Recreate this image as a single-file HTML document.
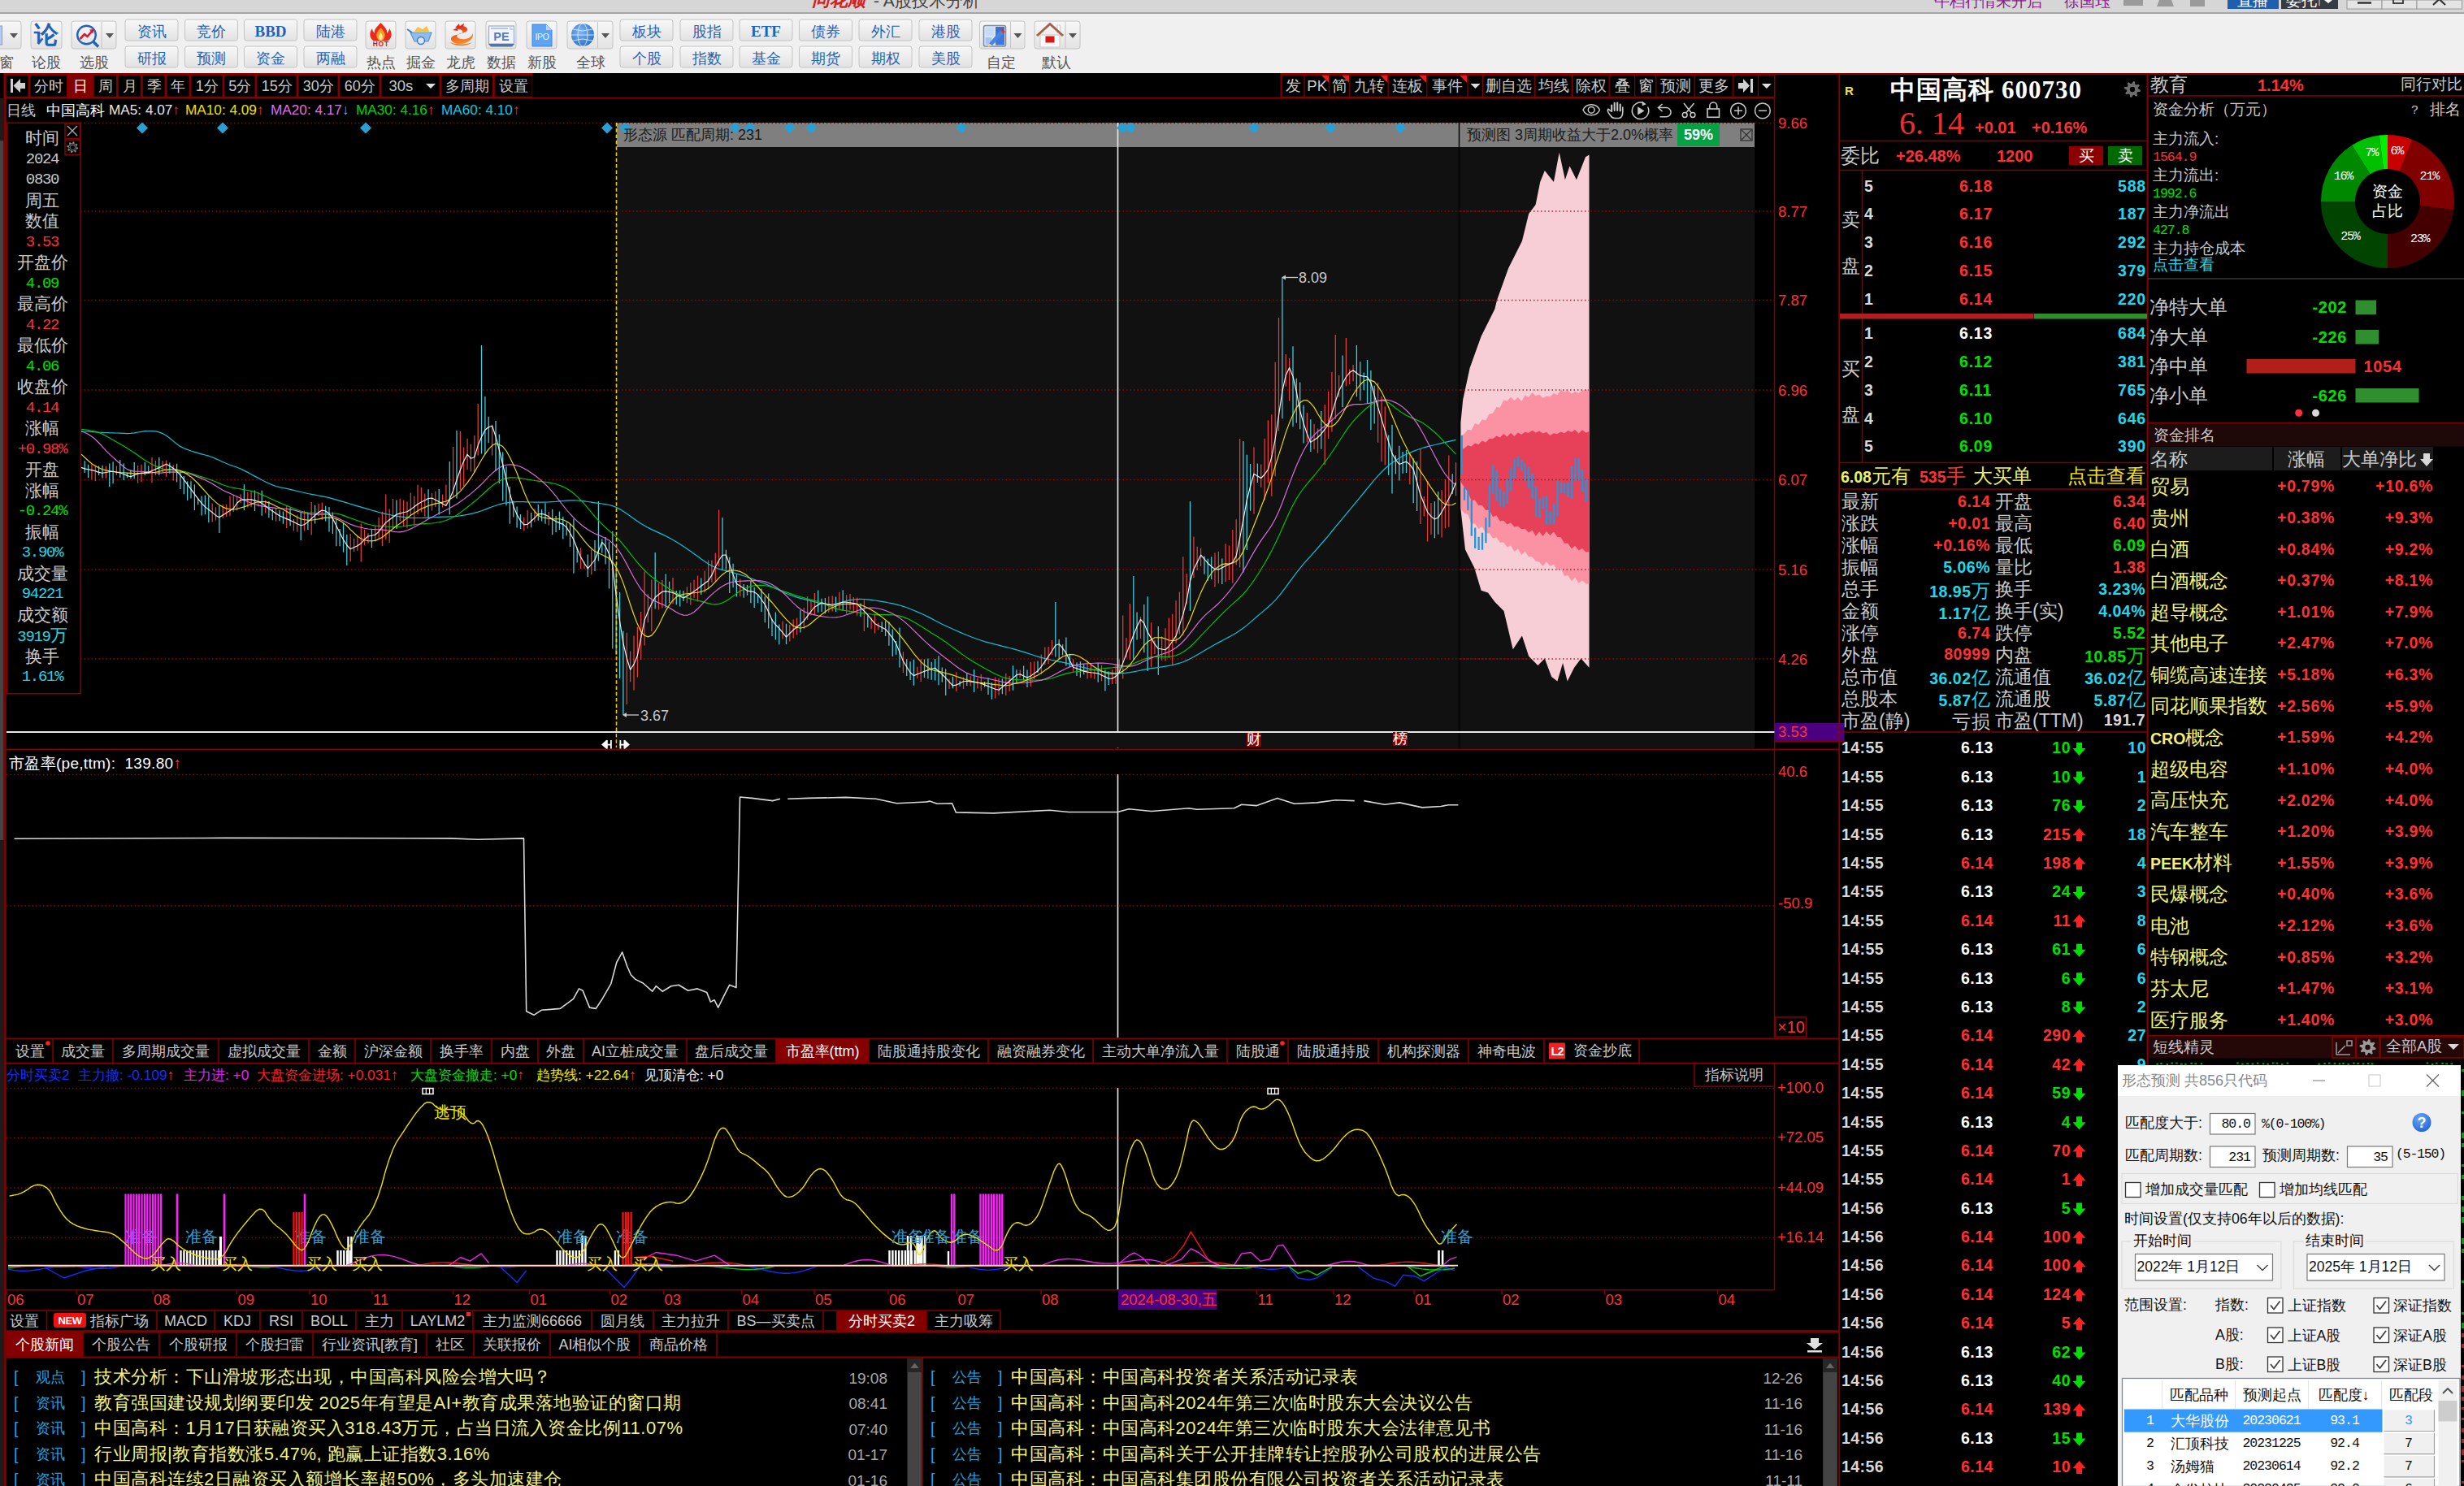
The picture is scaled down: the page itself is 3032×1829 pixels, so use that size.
<!DOCTYPE html>
<html lang="zh"><head><meta charset="utf-8"><title>A股技术分析</title>
<style>
html,body{margin:0;padding:0;background:#000;}
body{width:3032px;height:1829px;overflow:hidden;position:relative;font-family:"Liberation Sans",sans-serif;}
#g{position:absolute;left:0;top:0;}
.t{position:absolute;white-space:nowrap;line-height:1;}
.fr{font-family:"Liberation Serif",serif;}
.fm,.mm{font-family:"Liberation Mono",monospace;}
</style></head><body>
<svg id="g" width="3032" height="1829" viewBox="0 0 3032 1829" shape-rendering="auto">
<defs>
<linearGradient id="gbtn" x1="0" y1="0" x2="0" y2="1"><stop offset="0" stop-color="#f8f8f8"/><stop offset="1" stop-color="#e2e2e2"/></linearGradient>
<radialGradient id="gglobe" cx="0.4" cy="0.35" r="0.7"><stop offset="0" stop-color="#7db8f0"/><stop offset="1" stop-color="#2a6fc8"/></radialGradient>
<radialGradient id="ghelp" cx="0.4" cy="0.3" r="0.8"><stop offset="0" stop-color="#6aa8f8"/><stop offset="1" stop-color="#1f5fd0"/></radialGradient>
<linearGradient id="gdragon" x1="0" y1="0" x2="0.3" y2="1"><stop offset="0" stop-color="#e02818"/><stop offset="1" stop-color="#f58a28"/></linearGradient>
</defs>
<rect x="0.0" y="0.0" width="3032.0" height="16.0" fill="#d6d6d6" />
<rect x="0.0" y="15.0" width="3032.0" height="1.5" fill="#a8a8a8" />
<rect x="0.0" y="16.5" width="3032.0" height="74.0" fill="#f0f0f0" />
<rect x="2613.0" y="0.0" width="24.0" height="7.0" fill="#9a9a9a" />
<polygon points="2654.0,8.0 2657.0,0.0 2672.0,0.0 2675.0,8.0" fill="#9a9a9a" />
<rect x="2695.0" y="0.0" width="18.0" height="8.0" fill="#9a9a9a" />
<rect x="2741.0" y="0.0" width="63.0" height="11.0" fill="#1f5fae" />
<rect x="2807.0" y="0.0" width="70.0" height="11.0" fill="#363b44" />
<polygon points="2860.0,0.0 2870.0,0.0 2865.0,4.0" fill="#fff" />
<line x1="2854.0" y1="0.0" x2="2854.0" y2="7.0" stroke="#ccc" stroke-width="1.2" />
<rect x="2888.0" y="0.0" width="43.0" height="11.0" fill="#e4e4e4" stroke="#9a9a9a" stroke-width="1"/>
<rect x="2931.0" y="0.0" width="43.0" height="11.0" fill="#e4e4e4" stroke="#9a9a9a" stroke-width="1"/>
<rect x="2974.0" y="0.0" width="55.5" height="11.0" fill="#e4e4e4" stroke="#9a9a9a" stroke-width="1"/>
<line x1="2901.0" y1="3.5" x2="2918.0" y2="3.5" stroke="#333" stroke-width="2.5" />
<rect x="2945.0" y="-3.0" width="12.0" height="7.0" fill="none" stroke="#333" stroke-width="1.8"/>
<line x1="3001.5" y1="-1.0" x2="2994.0" y2="6.0" stroke="#333" stroke-width="2.2" />
<line x1="3001.5" y1="-1.0" x2="3009.0" y2="6.0" stroke="#333" stroke-width="2.2" />
<rect x="-6" y="26" width="32" height="34" rx="3" fill="url(#gbtn)" stroke="#c4c4c4" stroke-width="1"/>
<polygon points="12.0,41.0 22.0,41.0 17.0,47.0" fill="#555" />
<rect x="-3.0" y="32.0" width="5.5" height="23.0" fill="#b4ccf8" stroke="#9098b0" stroke-width="1"/>
<rect x="38" y="26" width="38" height="34" rx="3" fill="url(#gbtn)" stroke="#c4c4c4" stroke-width="1"/>
<rect x="88" y="26" width="55" height="34" rx="3" fill="url(#gbtn)" stroke="#c4c4c4" stroke-width="1"/>
<line x1="125.0" y1="27.0" x2="125.0" y2="59.0" stroke="#c4c4c4" stroke-width="1" />
<circle cx="106.5" cy="43" r="11.3" fill="none" stroke="#1f63b8" stroke-width="2.4"/>
<line x1="115.0" y1="51.5" x2="121.0" y2="57.5" stroke="#1f63b8" stroke-width="3.5" />
<path d="M98.5 48.0 L104.0 42.0 L107.5 45.0 L113.5 38.0" stroke="#d81838" stroke-width="2.6" fill="none" stroke-linejoin="round" />
<polygon points="110.0,36.5 115.5,36.0 114.5,41.5" fill="#d81838" />
<polygon points="130.0,41.0 140.0,41.0 135.0,47.0" fill="#555" />
<rect x="154" y="24" width="65" height="26" rx="3" fill="url(#gbtn)" stroke="#c4c4c4" stroke-width="1"/>
<rect x="154" y="57" width="65" height="26" rx="3" fill="url(#gbtn)" stroke="#c4c4c4" stroke-width="1"/>
<rect x="227.5" y="24" width="65" height="26" rx="3" fill="url(#gbtn)" stroke="#c4c4c4" stroke-width="1"/>
<rect x="227.5" y="57" width="65" height="26" rx="3" fill="url(#gbtn)" stroke="#c4c4c4" stroke-width="1"/>
<rect x="300.5" y="24" width="65" height="26" rx="3" fill="url(#gbtn)" stroke="#c4c4c4" stroke-width="1"/>
<rect x="300.5" y="57" width="65" height="26" rx="3" fill="url(#gbtn)" stroke="#c4c4c4" stroke-width="1"/>
<rect x="374" y="24" width="65" height="26" rx="3" fill="url(#gbtn)" stroke="#c4c4c4" stroke-width="1"/>
<rect x="374" y="57" width="65" height="26" rx="3" fill="url(#gbtn)" stroke="#c4c4c4" stroke-width="1"/>
<rect x="450" y="26" width="37" height="34" rx="3" fill="url(#gbtn)" stroke="#c4c4c4" stroke-width="1"/>
<rect x="499" y="26" width="37" height="34" rx="3" fill="url(#gbtn)" stroke="#c4c4c4" stroke-width="1"/>
<rect x="548" y="26" width="37" height="34" rx="3" fill="url(#gbtn)" stroke="#c4c4c4" stroke-width="1"/>
<rect x="598" y="26" width="37" height="34" rx="3" fill="url(#gbtn)" stroke="#c4c4c4" stroke-width="1"/>
<rect x="648" y="26" width="37" height="34" rx="3" fill="url(#gbtn)" stroke="#c4c4c4" stroke-width="1"/>
<path d="M468.5 28 C473 33 477 36 476 41 C478 39 479 37 479 35 C483.5 41 482 49 476 50.5 L461 50.5 C455 49 453.5 41 458 35 C458 37 459 39 461 41 C460 36 464 33 468.5 28Z" fill="#ea2a1c"/>
<path d="M468.5 34 C472 38 474.5 41 473.5 45 C473 48 471 50 468.5 50.5 C466 50 464 48 463.5 45 C462.5 41 465 38 468.5 34Z" fill="#ff9a1c"/>
<path d="M468.5 40 C470.5 43 471.5 45 470.5 47.5 C470 49.8 467 49.8 466.5 47.5 C465.5 45 466.5 43 468.5 40Z" fill="#fff0a0"/>
<path d="M505 40 L531 40 L527 51 L510 51Z" fill="#8fbcec" stroke="#5a90d0" stroke-width="1.2"/>
<path d="M509 40 L514 33 L520 36 L525 32 L529 40Z" fill="#f5c24a"/>
<circle cx="518" cy="50" r="4.5" fill="#d8e8f8" stroke="#3d7cc0" stroke-width="1.5"/>
<line x1="501.0" y1="36.0" x2="507.0" y2="40.0" stroke="#3d7cc0" stroke-width="2" />
<path d="M563 33 C570 31 576 33 575 37 C574 41 566 40 563 43 C560 46 566 49 573 48 C578 47 581 44 582 41 C583 48 576 53 568 54 C561 55 554 51 555 47 C556 43 564 43 568 41 C571 39 569 36 563 36Z" fill="url(#gdragon)"/>
<polygon points="560.0,34.0 565.0,29.0 566.0,34.0" fill="#e02818" />
<polygon points="565.0,33.0 571.0,28.5 570.0,33.5" fill="#e02818" />
<polygon points="557.0,37.0 563.0,34.0 563.0,38.0" fill="#e02818" />
<path d="M553 52 C560 57.5 574 58 581 52 C576 55 562 55.5 553 52Z" fill="#f07a20"/>
<rect x="601.5" y="32.0" width="31.0" height="22.0" fill="#f2f5fc" stroke="#9aaccc" stroke-width="1.2"/>
<polygon points="627.0,32.0 632.5,37.0 627.0,37.0" fill="#c8d4ea" />
<rect x="604.0" y="34.0" width="21.0" height="2.0" fill="#b8c6e4" />
<polygon points="601.0,54.0 633.0,54.0 630.0,57.5 604.0,57.5" fill="#54749c" />
<path d="M655 30 L672 30 L679 37 L679 57 L655 57Z" fill="#5fa4f2" stroke="#3f84e0" stroke-width="1"/>
<polygon points="672.0,30.0 679.0,37.0 672.0,37.0" fill="#bcd7f5" />
<rect x="698" y="26" width="56" height="34" rx="3" fill="url(#gbtn)" stroke="#c4c4c4" stroke-width="1"/>
<line x1="735.5" y1="27.0" x2="735.5" y2="59.0" stroke="#c4c4c4" stroke-width="1" />
<circle cx="717" cy="43" r="14" fill="url(#gglobe)"/>
<ellipse cx="717" cy="43" rx="6" ry="14" fill="none" stroke="#cfe2f7" stroke-width="1"/>
<line x1="703.0" y1="43.0" x2="731.0" y2="43.0" stroke="#cfe2f7" stroke-width="1" />
<path d="M705.0 36.0 L717.0 38.0 L729.0 36.0" stroke="#cfe2f7" stroke-width="1" fill="none" stroke-linejoin="round" />
<path d="M705.0 50.0 L717.0 48.0 L729.0 50.0" stroke="#cfe2f7" stroke-width="1" fill="none" stroke-linejoin="round" />
<polygon points="740.0,41.0 750.0,41.0 745.0,47.0" fill="#555" />
<rect x="763" y="24" width="65" height="26" rx="3" fill="url(#gbtn)" stroke="#c4c4c4" stroke-width="1"/>
<rect x="763" y="57" width="65" height="26" rx="3" fill="url(#gbtn)" stroke="#c4c4c4" stroke-width="1"/>
<rect x="837" y="24" width="65" height="26" rx="3" fill="url(#gbtn)" stroke="#c4c4c4" stroke-width="1"/>
<rect x="837" y="57" width="65" height="26" rx="3" fill="url(#gbtn)" stroke="#c4c4c4" stroke-width="1"/>
<rect x="910" y="24" width="65" height="26" rx="3" fill="url(#gbtn)" stroke="#c4c4c4" stroke-width="1"/>
<rect x="910" y="57" width="65" height="26" rx="3" fill="url(#gbtn)" stroke="#c4c4c4" stroke-width="1"/>
<rect x="983.5" y="24" width="65" height="26" rx="3" fill="url(#gbtn)" stroke="#c4c4c4" stroke-width="1"/>
<rect x="983.5" y="57" width="65" height="26" rx="3" fill="url(#gbtn)" stroke="#c4c4c4" stroke-width="1"/>
<rect x="1057" y="24" width="65" height="26" rx="3" fill="url(#gbtn)" stroke="#c4c4c4" stroke-width="1"/>
<rect x="1057" y="57" width="65" height="26" rx="3" fill="url(#gbtn)" stroke="#c4c4c4" stroke-width="1"/>
<rect x="1131" y="24" width="65" height="26" rx="3" fill="url(#gbtn)" stroke="#c4c4c4" stroke-width="1"/>
<rect x="1131" y="57" width="65" height="26" rx="3" fill="url(#gbtn)" stroke="#c4c4c4" stroke-width="1"/>
<rect x="1205.5" y="26" width="55.5" height="34" rx="3" fill="url(#gbtn)" stroke="#c4c4c4" stroke-width="1"/>
<line x1="1243.5" y1="27.0" x2="1243.5" y2="59.0" stroke="#c4c4c4" stroke-width="1" />
<rect x="1210.5" y="31.5" width="27.0" height="25.5" fill="#dfe9fb" stroke="#7a8aa0" stroke-width="1.5" rx="2"/>
<rect x="1225.0" y="33.0" width="11.0" height="22.5" fill="#3f78dc" />
<rect x="1212.5" y="33.5" width="11.0" height="11.0" fill="#c8dcf8" />
<rect x="1212.5" y="46.0" width="8.0" height="9.0" fill="#a8c4f4" />
<rect x="1226.0" y="33.5" width="9.5" height="6.0" fill="#3a70d0" />
<polygon points="1217.0,53.5 1231.0,37.0 1235.0,41.0 1221.0,56.0" fill="#4a86e0" />
<polygon points="1231.0,37.0 1233.0,35.0 1237.0,39.0 1235.0,41.0" fill="#e03030" />
<polygon points="1217.0,53.5 1221.0,56.0 1215.5,58.0" fill="#f0d090" />
<polygon points="1247.5,41.0 1257.5,41.0 1252.5,47.0" fill="#555" />
<rect x="1273" y="26" width="56" height="34" rx="3" fill="url(#gbtn)" stroke="#c4c4c4" stroke-width="1"/>
<line x1="1311.0" y1="27.0" x2="1311.0" y2="59.0" stroke="#c4c4c4" stroke-width="1" />
<rect x="1280.0" y="43.0" width="24.0" height="15.0" fill="#fafafa" stroke="#c8c8c8" stroke-width="1"/>
<rect x="1301.0" y="31.0" width="3.5" height="9.0" fill="#fafafa" stroke="#c0c0c0" stroke-width="0.8"/>
<path d="M1276 44 L1292 29.5 L1308 44" stroke="#a8604c" stroke-width="3" fill="none" stroke-linejoin="miter"/>
<rect x="1286.5" y="44.5" width="11.0" height="8.0" fill="#d81818" />
<polygon points="1315.0,41.0 1325.0,41.0 1320.0,47.0" fill="#555" />
<rect x="0.0" y="90.0" width="3032.0" height="1739.0" fill="#000" />
<rect x="0.0" y="121.0" width="4.5" height="1708.0" fill="#1c1c1c" />
<rect x="0.0" y="173.0" width="4.5" height="861.0" fill="#444" />
<rect x="4.5" y="91.0" width="3.2" height="1738.0" fill="#840000" />
<rect x="4.5" y="90.0" width="651.0" height="2.0" fill="#840000" />
<rect x="1575.5" y="90.0" width="693.0" height="2.0" fill="#840000" />
<rect x="7.0" y="92.0" width="648.0" height="28.0" fill="#840000" />
<rect x="7.8" y="92.8" width="26.8" height="26.0" fill="#000" />
<rect x="37.3" y="92.8" width="44.8" height="26.0" fill="#000" />
<rect x="83.3" y="92.8" width="30.8" height="26.0" fill="#840000" />
<rect x="115.8" y="92.8" width="27.3" height="26.0" fill="#000" />
<rect x="145.8" y="92.8" width="27.3" height="26.0" fill="#000" />
<rect x="175.8" y="92.8" width="26.8" height="26.0" fill="#000" />
<rect x="205.3" y="92.8" width="27.3" height="26.0" fill="#000" />
<rect x="235.3" y="92.8" width="38.3" height="26.0" fill="#000" />
<rect x="276.3" y="92.8" width="37.3" height="26.0" fill="#000" />
<rect x="316.3" y="92.8" width="48.3" height="26.0" fill="#000" />
<rect x="367.3" y="92.8" width="48.3" height="26.0" fill="#000" />
<rect x="418.3" y="92.8" width="48.3" height="26.0" fill="#000" />
<rect x="469.3" y="92.8" width="71.3" height="26.0" fill="#000" />
<polygon points="524.0,103.0 536.0,103.0 530.0,109.0" fill="#ddd" />
<rect x="543.3" y="92.8" width="62.8" height="26.0" fill="#000" />
<rect x="608.8" y="92.8" width="45.8" height="26.0" fill="#000" />
<rect x="13.0" y="97.0" width="3.0" height="17.0" fill="#d0d0d0" />
<polygon points="16.5,105.5 25.0,97.0 25.0,102.0 31.0,102.0 31.0,109.0 25.0,109.0 25.0,114.0" fill="#d0d0d0" />
<rect x="1575.5" y="92.0" width="609.0" height="28.0" fill="#840000" />
<rect x="1577.6" y="92.8" width="26.8" height="26.0" fill="#000" />
<rect x="1605.6" y="92.8" width="29.5" height="26.0" fill="#000" />
<rect x="1636.3" y="92.8" width="23.9" height="26.0" fill="#000" />
<rect x="1661.4" y="92.8" width="46.2" height="26.0" fill="#000" />
<rect x="1708.8" y="92.8" width="46.4" height="26.0" fill="#000" />
<rect x="1756.4" y="92.8" width="49.0" height="26.0" fill="#000" />
<rect x="1806.6" y="92.8" width="17.3" height="26.0" fill="#000" />
<polygon points="1809.5,103.0 1821.5,103.0 1815.5,109.0" fill="#ddd" />
<rect x="1825.1" y="92.8" width="63.0" height="26.0" fill="#000" />
<rect x="1889.3" y="92.8" width="44.6" height="26.0" fill="#000" />
<rect x="1935.1" y="92.8" width="44.5" height="26.0" fill="#000" />
<rect x="1980.8" y="92.8" width="30.2" height="26.0" fill="#000" />
<rect x="2012.2" y="92.8" width="25.0" height="26.0" fill="#000" />
<rect x="2038.4" y="92.8" width="46.2" height="26.0" fill="#000" />
<rect x="2085.8" y="92.8" width="46.4" height="26.0" fill="#000" />
<rect x="2133.4" y="92.8" width="29.5" height="26.0" fill="#000" />
<rect x="2154.0" y="97.0" width="3.0" height="17.0" fill="#d0d0d0" />
<polygon points="2153.0,105.5 2145.0,97.0 2145.0,102.0 2139.0,102.0 2139.0,109.0 2145.0,109.0 2145.0,114.0" fill="#d0d0d0" />
<rect x="2164.1" y="92.8" width="18.9" height="26.0" fill="#000" />
<polygon points="2167.9,103.0 2179.9,103.0 2173.9,109.0" fill="#ddd" />
<polygon points="1626.0,92.8 1635.0,92.8 1635.0,101.8" fill="#e02020" />
<polygon points="1651.0,92.8 1660.0,92.8 1660.0,101.8" fill="#e02020" />
<polygon points="1698.5,92.8 1707.5,92.8 1707.5,101.8" fill="#e02020" />
<polygon points="1746.0,92.8 1755.0,92.8 1755.0,101.8" fill="#e02020" />
<polygon points="1796.0,92.8 1805.0,92.8 1805.0,101.8" fill="#e02020" />
<rect x="7.5" y="120.0" width="2176.0" height="1.5" fill="#840000" />
<path d="M1948 135.3 C1952 126.5 1964.5 126.5 1968.5 135.3 C1964.5 144 1952 144 1948 135.3Z" fill="none" stroke="#c8c8c8" stroke-width="1.5"/><circle cx="1958.2" cy="135.3" r="3.9" fill="none" stroke="#c8c8c8" stroke-width="1.5"/>
<path d="M1983.2 137 L1983.2 129.5 M1986.7 136 L1986.7 126.8 M1990.2 136 L1990.2 126.5 M1993.7 136.5 L1993.7 128.5" stroke="#c8c8c8" stroke-width="2.1" stroke-linecap="round" fill="none"/>
<path d="M1982.2 137 L1979 134.2 C1977.5 135.5 1979 139 1981.5 142 C1983 144.2 1985 145.5 1987 145.5 L1992 145.5 C1995 145 1996.8 141.5 1996.8 137.5 L1996.8 131.5" stroke="#c8c8c8" stroke-width="1.6" fill="none" stroke-linejoin="round"/>
<path d="M2023 127.2 A10.2 10.2 0 1 0 2027.5 131.5" stroke="#c8c8c8" stroke-width="1.5" fill="none"/>
<polygon points="2015.2,131.2 2015.2,141.5 2023.5,136.4" fill="#c8c8c8" />
<polygon points="2020.5,124.5 2025.8,128.2 2020.8,130.2" fill="#c8c8c8" />
<path d="M2041 132.6 L2050.5 132.6 A5.5 5.5 0 0 1 2050.5 143.7 L2042.5 143.7" stroke="#c8c8c8" stroke-width="1.5" fill="none"/>
<path d="M2045.5 128 L2040.5 132.6 L2045.5 137.2" stroke="#c8c8c8" stroke-width="1.5" fill="none"/>
<path d="M2072 127 L2081.5 139.3 M2084.5 127 L2074.5 139.3" stroke="#c8c8c8" stroke-width="1.5" fill="none"/><circle cx="2073.2" cy="141.5" r="2.9" fill="none" stroke="#c8c8c8" stroke-width="1.5"/><circle cx="2083" cy="141.5" r="2.9" fill="none" stroke="#c8c8c8" stroke-width="1.5"/>
<rect x="2101.0" y="134.0" width="14.5" height="10.3" fill="none" stroke="#c8c8c8" stroke-width="1.6"/>
<path d="M2103.8 134 L2103.8 130.5 A4.5 4.5 0 0 1 2112.8 130.5 L2112.8 134" stroke="#c8c8c8" stroke-width="1.6" fill="none"/>
<circle cx="2139" cy="136.3" r="9.4" fill="none" stroke="#c8c8c8" stroke-width="1.5"/>
<line x1="2134.0" y1="136.3" x2="2144.0" y2="136.3" stroke="#c8c8c8" stroke-width="1.5" />
<line x1="2139.0" y1="131.3" x2="2139.0" y2="141.3" stroke="#c8c8c8" stroke-width="1.5" />
<circle cx="2168.9" cy="136.3" r="9.4" fill="none" stroke="#c8c8c8" stroke-width="1.5"/>
<line x1="2163.9" y1="136.3" x2="2173.9" y2="136.3" stroke="#c8c8c8" stroke-width="1.5" />
<rect x="759.0" y="151.0" width="1400.0" height="770.0" fill="#111111" />
<rect x="759.0" y="151.0" width="1036.0" height="30.0" fill="#7f7f7f" />
<rect x="1795.0" y="151.0" width="364.0" height="30.0" fill="#7f7f7f" />
<line x1="1795.5" y1="151.0" x2="1795.5" y2="921.0" stroke="#000" stroke-width="1.5" />
<rect x="2064.0" y="152.0" width="52.0" height="28.0" fill="#08a045" />
<rect x="2142.0" y="159.0" width="14.0" height="14.0" fill="none" stroke="#333" stroke-width="1.3"/>
<line x1="2143.0" y1="160.0" x2="2155.0" y2="172.0" stroke="#333" stroke-width="1.2" />
<line x1="2155.0" y1="160.0" x2="2143.0" y2="172.0" stroke="#333" stroke-width="1.2" />
<line x1="99.0" y1="151.5" x2="2183.5" y2="151.5" stroke="#9a0000" stroke-width="1.3" stroke-dasharray="1.5 3"/>
<line x1="99.0" y1="260.0" x2="2183.5" y2="260.0" stroke="#9a0000" stroke-width="1.3" stroke-dasharray="1.5 3"/>
<line x1="99.0" y1="369.5" x2="2183.5" y2="369.5" stroke="#9a0000" stroke-width="1.3" stroke-dasharray="1.5 3"/>
<line x1="99.0" y1="480.0" x2="2183.5" y2="480.0" stroke="#9a0000" stroke-width="1.3" stroke-dasharray="1.5 3"/>
<line x1="99.0" y1="590.5" x2="2183.5" y2="590.5" stroke="#9a0000" stroke-width="1.3" stroke-dasharray="1.5 3"/>
<line x1="99.0" y1="701.0" x2="2183.5" y2="701.0" stroke="#9a0000" stroke-width="1.3" stroke-dasharray="1.5 3"/>
<line x1="99.0" y1="811.0" x2="2183.5" y2="811.0" stroke="#9a0000" stroke-width="1.3" stroke-dasharray="1.5 3"/>
<line x1="2183.5" y1="121.0" x2="2183.5" y2="1278.0" stroke="#840000" stroke-width="1.5" />
<line x1="2183.5" y1="1308.0" x2="2183.5" y2="1588.0" stroke="#840000" stroke-width="1.5" />
<path d="M104.2 567.2V582.1 M108.6 571.7V588.2 M121.6 573.4V585.0 M126.0 573.1V588.5 M134.7 570.6V599.3 M139.1 568.2V595.1 M147.8 565.9V587.7 M152.2 570.4V591.0 M156.5 582.0V588.3 M160.9 578.3V589.3 M165.2 569.0V589.3 M178.3 568.9V585.1 M182.7 573.3V582.6 M195.8 562.9V584.9 M208.8 569.4V582.8 M217.6 570.8V593.5 M221.9 578.8V602.1 M226.3 585.9V608.3 M230.6 592.3V616.1 M235.0 592.2V613.4 M239.4 596.3V628.0 M243.7 613.1V621.3 M248.1 610.4V634.6 M252.4 609.6V633.3 M256.8 610.4V642.9 M269.9 622.5V656.0 M300.4 596.3V628.0 M313.5 603.5V628.9 M322.2 603.8V634.8 M330.9 617.0V637.1 M335.3 626.6V640.3 M344.0 627.8V641.2 M348.4 629.4V644.8 M357.1 625.3V647.2 M370.2 630.3V665.1 M378.9 631.0V651.9 M387.6 622.0V644.4 M400.7 622.8V641.5 M405.0 624.1V654.4 M409.4 630.5V657.0 M413.8 638.7V672.2 M418.1 651.0V672.2 M422.5 643.4V679.7 M426.8 658.0V696.0 M457.4 651.3V673.9 M487.9 615.6V651.0 M527.1 602.3V637.4 M540.2 602.0V633.6 M553.3 568.1V633.6 M562.0 530.0V613.6 M592.5 425.0V558.4 M596.9 488.0V559.2 M601.2 512.7V545.2 M610.0 518.0V580.3 M614.3 534.5V595.0 M618.7 556.4V616.4 M623.0 574.2V622.2 M627.4 598.8V644.7 M631.8 616.5V636.6 M636.1 623.6V649.6 M640.5 633.1V651.0 M653.6 631.1V649.3 M662.3 621.1V640.8 M666.6 627.0V641.5 M671.0 619.3V644.7 M679.7 626.7V658.3 M684.1 634.9V655.0 M688.4 629.4V651.9 M692.8 635.7V663.5 M697.2 643.3V659.3 M701.5 644.3V673.1 M705.9 638.4V705.8 M710.2 673.7V692.4 M723.3 682.6V710.1 M732.0 664.9V702.9 M736.4 617.0V690.6 M740.8 663.2V680.8 M745.1 661.1V694.5 M749.5 666.7V724.5 M753.8 653.8V798.4 M758.2 693.7V805.7 M762.6 729.0V835.0 M766.9 776.7V880.0 M806.2 680.0V749.2 M819.2 706.5V748.3 M823.6 715.8V741.9 M832.3 727.0V744.2 M836.7 726.6V746.4 M841.0 726.9V739.9 M862.8 711.5V732.0 M889.0 637.0V702.3 M893.4 676.8V701.4 M897.7 685.8V729.9 M902.1 693.7V723.0 M906.4 706.4V734.4 M915.2 719.0V735.7 M919.5 720.1V732.8 M923.9 714.8V742.2 M928.2 722.7V748.1 M932.6 731.3V742.2 M937.0 724.5V752.9 M941.3 734.3V766.2 M945.7 730.5V773.6 M950.0 761.8V783.1 M954.4 753.6V787.5 M958.8 768.4V793.2 M967.5 767.7V793.0 M984.9 751.1V778.6 M1006.7 726.5V753.7 M1011.1 736.8V752.9 M1015.4 736.0V755.2 M1028.5 734.6V753.1 M1037.2 726.3V751.4 M1059.0 742.4V759.3 M1067.8 757.4V772.5 M1085.2 765.3V777.9 M1089.6 764.3V782.9 M1093.9 765.2V794.7 M1098.3 774.5V808.1 M1102.6 789.1V805.8 M1107.0 772.5V821.5 M1115.7 811.2V832.0 M1120.1 814.2V837.0 M1124.4 811.8V843.7 M1137.5 811.6V834.1 M1141.9 810.6V835.6 M1146.2 814.7V836.7 M1150.6 810.9V837.5 M1155.0 807.3V843.2 M1159.3 821.5V839.8 M1163.7 823.4V856.0 M1172.4 832.8V847.3 M1181.1 837.8V844.7 M1189.8 828.5V843.9 M1198.6 824.1V852.1 M1211.6 838.9V845.7 M1216.0 834.3V855.1 M1220.4 840.3V860.8 M1233.4 835.3V854.2 M1246.5 819.3V849.8 M1250.9 824.3V840.3 M1259.6 819.4V837.6 M1264.0 824.5V845.9 M1277.0 813.5V828.0 M1298.8 741.0V808.4 M1303.2 786.9V811.3 M1307.6 793.2V806.5 M1311.9 784.6V819.4 M1316.3 804.7V820.6 M1325.0 815.3V832.0 M1329.4 814.2V833.9 M1333.7 818.1V830.3 M1351.2 815.7V839.7 M1359.9 824.5V850.4 M1364.2 826.4V842.9 M1394.8 709.0V812.2 M1399.1 753.6V787.4 M1407.8 743.9V803.2 M1412.2 734.2V826.1 M1425.3 770.9V830.7 M1464.5 617.0V752.1 M1482.0 684.5V706.7 M1486.3 687.7V714.8 M1490.7 685.2V713.1 M1503.8 687.6V719.0 M1529.9 543.0V704.5 M1534.3 559.7V677.0 M1538.6 571.1V628.8 M1547.4 570.4V594.1 M1577.9 341.5V515.2 M1591.0 426.3V524.9 M1595.3 465.8V520.6 M1599.7 470.5V528.3 M1604.0 498.7V545.6 M1612.8 516.3V555.9 M1625.8 506.1V552.8 M1652.0 437.6V501.1 M1669.4 425.0V488.3 M1673.8 445.3V493.1 M1678.2 458.4V480.3 M1682.5 443.1V496.9 M1686.9 456.1V528.9 M1691.2 474.8V521.6 M1708.7 535.6V584.8 M1713.0 522.8V607.5 M1717.4 560.3V583.4 M1721.8 548.7V591.4 M1726.1 556.0V582.8 M1730.5 554.1V582.1 M1739.2 564.2V619.3 M1743.6 568.1V628.9 M1765.4 617.2V662.3 M1769.7 604.9V657.8 M1787.2 583.3V608.1" stroke="#3fd2e2" stroke-width="1.25" fill="none"/>
<path d="M112.9 571.5V590.3 M117.3 572.8V592.2 M130.4 573.8V588.6 M143.4 573.4V584.8 M169.6 572.8V594.7 M174.0 571.7V593.3 M187.0 563.0V594.3 M191.4 566.9V584.9 M200.1 567.3V582.1 M204.5 566.6V586.7 M213.2 572.3V591.7 M261.2 619.6V642.5 M265.5 624.3V640.4 M274.2 620.9V637.8 M278.6 621.0V635.9 M283.0 610.4V635.0 M287.3 609.1V630.0 M291.7 610.6V628.3 M296.0 608.3V619.5 M304.8 605.6V624.6 M309.1 604.6V624.2 M317.8 605.8V623.5 M326.6 615.7V631.6 M339.6 624.7V641.7 M352.7 621.9V650.1 M361.4 638.9V653.5 M365.8 633.8V654.4 M374.5 628.6V653.4 M383.2 618.1V658.6 M392.0 620.1V635.2 M396.3 618.4V639.8 M431.2 657.1V691.0 M435.6 662.8V679.0 M439.9 660.3V677.8 M444.3 644.5V691.4 M448.6 652.1V671.2 M453.0 656.2V668.8 M461.7 646.8V666.8 M466.1 636.8V663.3 M470.4 629.7V672.1 M474.8 608.4V664.3 M479.2 626.6V667.9 M483.5 614.0V650.5 M492.2 613.8V641.2 M496.6 615.5V648.2 M501.0 617.6V649.7 M505.3 606.5V635.3 M509.7 610.5V646.7 M514.0 596.8V632.9 M518.4 600.0V630.4 M522.8 607.4V635.7 M531.5 606.9V628.7 M535.8 604.7V624.2 M544.6 608.6V624.5 M548.9 596.5V621.2 M557.6 550.0V611.3 M566.4 530.9V602.8 M570.7 550.6V598.5 M575.1 539.8V578.2 M579.4 546.6V580.4 M583.8 536.1V581.5 M588.2 497.0V560.4 M605.6 522.8V560.4 M644.8 636.6V653.5 M649.2 627.8V650.5 M657.9 626.3V642.6 M675.4 629.8V646.4 M714.6 674.4V700.0 M719.0 691.5V700.1 M727.7 676.3V707.1 M771.3 778.7V867.0 M775.6 801.4V839.3 M780.0 782.4V849.8 M784.4 771.8V833.5 M788.7 752.9V812.0 M793.1 703.4V794.6 M797.4 731.2V766.3 M801.8 713.6V777.2 M810.5 717.7V750.4 M814.9 713.9V748.4 M828.0 711.0V743.3 M845.4 722.2V742.3 M849.8 717.2V744.5 M854.1 713.7V736.0 M858.5 708.4V740.6 M867.2 702.5V729.3 M871.6 689.4V725.5 M875.9 689.6V716.8 M880.3 680.5V715.4 M884.6 627.5V696.9 M910.8 712.6V734.2 M963.1 764.4V786.5 M971.8 769.0V789.4 M976.2 762.5V785.4 M980.6 760.4V781.4 M989.3 748.0V773.7 M993.6 734.1V762.7 M998.0 739.9V757.6 M1002.4 730.1V757.0 M1019.8 734.2V753.8 M1024.2 733.6V752.5 M1032.9 728.8V750.2 M1041.6 732.2V755.6 M1046.0 731.1V750.5 M1050.3 734.9V754.5 M1054.7 735.6V757.4 M1063.4 738.2V777.1 M1072.1 759.9V774.2 M1076.5 755.6V779.5 M1080.8 766.4V775.3 M1111.4 802.3V828.1 M1128.8 820.8V835.0 M1133.2 811.1V839.0 M1168.0 835.6V847.9 M1176.8 827.3V850.9 M1185.5 833.4V848.1 M1194.2 832.1V844.5 M1202.9 834.3V847.4 M1207.3 829.9V850.3 M1224.7 833.5V859.6 M1229.1 834.7V855.8 M1237.8 828.8V855.9 M1242.2 832.0V851.1 M1255.2 824.4V833.8 M1268.3 814.8V845.1 M1272.7 814.3V835.9 M1281.4 805.5V829.7 M1285.8 796.4V818.2 M1290.1 796.0V816.9 M1294.5 788.0V806.3 M1320.6 811.2V826.8 M1338.1 813.2V835.5 M1342.4 817.4V834.4 M1346.8 823.3V835.7 M1355.5 818.7V838.3 M1368.6 824.2V841.9 M1373.0 819.6V841.7 M1377.3 811.5V829.4 M1381.7 757.6V835.4 M1386.0 785.0V809.6 M1390.4 743.1V812.0 M1403.5 759.1V785.9 M1416.6 766.2V821.4 M1420.9 787.8V804.9 M1429.6 783.3V812.9 M1434.0 773.2V813.8 M1438.4 760.6V809.8 M1442.7 755.8V819.5 M1447.1 739.2V791.8 M1451.4 728.5V780.4 M1455.8 685.3V782.4 M1460.2 706.1V743.7 M1468.9 660.5V711.2 M1473.2 672.8V701.9 M1477.6 674.8V696.9 M1495.0 680.5V722.3 M1499.4 678.8V718.2 M1508.1 669.3V716.2 M1512.5 671.6V713.9 M1516.8 652.1V717.8 M1521.2 639.3V695.2 M1525.6 540.0V698.4 M1543.0 550.5V632.7 M1551.7 571.4V600.0 M1556.1 539.8V616.0 M1560.4 517.2V594.4 M1564.8 510.3V610.7 M1569.2 445.8V586.3 M1573.5 391.0V530.6 M1582.2 435.9V475.6 M1586.6 441.1V493.4 M1608.4 507.9V544.3 M1617.1 521.7V552.9 M1621.5 527.6V557.8 M1630.2 498.0V572.2 M1634.6 481.7V540.0 M1638.9 457.8V531.5 M1643.3 412.0V515.8 M1647.6 462.0V488.8 M1656.4 416.0V475.3 M1660.7 454.3V473.1 M1665.1 448.9V469.2 M1695.6 471.1V544.7 M1700.0 487.8V568.3 M1704.3 500.4V572.6 M1734.8 557.2V596.3 M1747.9 552.8V644.9 M1752.3 610.9V635.6 M1756.6 592.0V666.6 M1761.0 619.0V658.0 M1774.1 602.9V661.4 M1778.4 590.1V650.6 M1782.8 560.4V648.7 M1791.5 569.3V610.3" stroke="#e83a36" stroke-width="1.25" fill="none"/>
<path d="M99.8 530.8 L104.2 531.0 L108.6 531.2 L112.9 531.5 L117.3 531.8 L121.6 532.1 L126.0 532.3 L130.4 532.5 L134.7 532.7 L139.1 532.8 L143.4 533.0 L147.8 533.2 L152.2 533.4 L156.5 533.6 L160.9 533.4 L165.2 532.9 L169.6 532.0 L174.0 531.3 L178.3 530.7 L182.7 530.5 L187.0 530.5 L191.4 530.9 L195.8 531.9 L200.1 533.6 L204.5 536.1 L208.8 539.2 L213.2 542.9 L217.6 546.5 L221.9 549.4 L226.3 551.7 L230.6 553.4 L235.0 555.0 L239.4 556.4 L243.7 557.6 L248.1 558.8 L252.4 560.0 L256.8 561.2 L261.2 562.8 L265.5 564.6 L269.9 566.5 L274.2 568.5 L278.6 570.5 L283.0 572.2 L287.3 573.8 L291.7 575.3 L296.0 577.0 L300.4 579.1 L304.8 581.4 L309.1 583.7 L313.5 586.1 L317.8 588.4 L322.2 590.7 L326.6 593.0 L330.9 595.0 L335.3 596.9 L339.6 598.5 L344.0 599.7 L348.4 600.5 L352.7 601.3 L357.1 602.3 L361.4 603.4 L365.8 604.5 L370.2 605.5 L374.5 606.5 L378.9 607.5 L383.2 608.3 L387.6 609.1 L392.0 610.0 L396.3 610.8 L400.7 611.7 L405.0 612.7 L409.4 613.9 L413.8 615.1 L418.1 616.4 L422.5 617.6 L426.8 618.9 L431.2 620.3 L435.6 621.6 L439.9 622.9 L444.3 624.2 L448.6 625.4 L453.0 626.7 L457.4 628.0 L461.7 629.2 L466.1 630.5 L470.4 631.6 L474.8 632.6 L479.2 633.5 L483.5 634.3 L487.9 635.1 L492.2 635.8 L496.6 636.4 L501.0 636.9 L505.3 637.3 L509.7 637.5 L514.0 637.5 L518.4 637.5 L522.8 637.3 L527.1 637.1 L531.5 636.8 L535.8 636.5 L540.2 636.3 L544.6 636.2 L548.9 636.1 L553.3 635.9 L557.6 635.7 L562.0 635.3 L566.4 634.8 L570.7 634.1 L575.1 633.3 L579.4 632.4 L583.8 631.3 L588.2 630.1 L592.5 628.7 L596.9 627.1 L601.2 625.4 L605.6 623.7 L610.0 622.2 L614.3 620.8 L618.7 619.7 L623.0 618.8 L627.4 618.3 L631.8 617.9 L636.1 617.7 L640.5 617.7 L644.8 617.7 L649.2 617.9 L653.6 618.0 L657.9 618.2 L662.3 618.2 L666.6 618.2 L671.0 618.1 L675.4 617.9 L679.7 617.6 L684.1 617.3 L688.4 616.9 L692.8 616.5 L697.2 616.1 L701.5 615.8 L705.9 615.8 L710.2 616.0 L714.6 616.4 L719.0 616.9 L723.3 617.5 L727.7 618.2 L732.0 618.8 L736.4 619.4 L740.8 620.0 L745.1 620.6 L749.5 621.5 L753.8 622.7 L758.2 624.4 L762.6 626.6 L766.9 629.2 L771.3 632.2 L775.6 635.3 L780.0 638.5 L784.4 641.6 L788.7 644.5 L793.1 647.0 L797.4 649.4 L801.8 651.6 L806.2 653.6 L810.5 655.6 L814.9 657.6 L819.2 659.7 L823.6 661.9 L828.0 664.4 L832.3 667.0 L836.7 669.7 L841.0 672.6 L845.4 675.5 L849.8 678.6 L854.1 681.7 L858.5 684.8 L862.8 688.0 L867.2 691.0 L871.6 693.9 L875.9 696.4 L880.3 698.5 L884.6 700.2 L889.0 701.5 L893.4 702.6 L897.7 703.7 L902.1 704.8 L906.4 706.0 L910.8 707.3 L915.2 708.7 L919.5 710.2 L923.9 711.8 L928.2 713.4 L932.6 715.1 L937.0 716.8 L941.3 718.5 L945.7 720.4 L950.0 722.4 L954.4 724.4 L958.8 726.5 L963.1 728.6 L967.5 730.5 L971.8 732.2 L976.2 733.7 L980.6 735.1 L984.9 736.3 L989.3 737.4 L993.6 738.6 L998.0 739.7 L1002.4 740.9 L1006.7 742.0 L1011.1 743.0 L1015.4 743.6 L1019.8 743.8 L1024.2 743.6 L1028.5 743.0 L1032.9 742.0 L1037.2 740.9 L1041.6 739.7 L1046.0 738.7 L1050.3 738.0 L1054.7 737.6 L1059.0 737.4 L1063.4 737.5 L1067.8 737.9 L1072.1 738.4 L1076.5 739.0 L1080.8 739.6 L1085.2 740.4 L1089.6 741.2 L1093.9 742.0 L1098.3 742.9 L1102.6 743.8 L1107.0 745.0 L1111.4 746.3 L1115.7 747.8 L1120.1 749.5 L1124.4 751.2 L1128.8 753.1 L1133.2 755.0 L1137.5 757.0 L1141.9 759.1 L1146.2 761.4 L1150.6 763.7 L1155.0 766.0 L1159.3 768.2 L1163.7 770.3 L1168.0 772.3 L1172.4 774.3 L1176.8 776.2 L1181.1 778.1 L1185.5 780.0 L1189.8 781.8 L1194.2 783.5 L1198.6 785.2 L1202.9 786.8 L1207.3 788.2 L1211.6 789.6 L1216.0 790.8 L1220.4 791.9 L1224.7 793.1 L1229.1 794.2 L1233.4 795.3 L1237.8 796.4 L1242.2 797.5 L1246.5 798.6 L1250.9 799.8 L1255.2 801.1 L1259.6 802.4 L1264.0 803.9 L1268.3 805.3 L1272.7 806.7 L1277.0 808.1 L1281.4 809.3 L1285.8 810.5 L1290.1 811.5 L1294.5 812.5 L1298.8 813.4 L1303.2 814.3 L1307.6 815.2 L1311.9 816.2 L1316.3 817.2 L1320.6 818.4 L1325.0 819.5 L1329.4 820.6 L1333.7 821.6 L1338.1 822.6 L1342.4 823.6 L1346.8 824.5 L1351.2 825.4 L1355.5 826.3 L1359.9 827.0 L1364.2 827.7 L1368.6 828.2 L1373.0 828.5 L1377.3 828.6 L1381.7 828.5 L1386.0 828.2 L1390.4 827.6 L1394.8 826.8 L1399.1 826.0 L1403.5 825.1 L1407.8 824.2 L1412.2 823.4 L1416.6 822.7 L1420.9 822.1 L1425.3 821.5 L1429.6 820.9 L1434.0 820.2 L1438.4 819.4 L1442.7 818.5 L1447.1 817.4 L1451.4 816.2 L1455.8 814.7 L1460.2 812.9 L1464.5 810.8 L1468.9 808.5 L1473.2 806.0 L1477.6 803.4 L1482.0 800.8 L1486.3 798.3 L1490.7 795.8 L1495.0 793.3 L1499.4 790.9 L1503.8 788.6 L1508.1 786.2 L1512.5 783.9 L1516.8 781.5 L1521.2 778.9 L1525.6 776.1 L1529.9 773.0 L1534.3 769.6 L1538.6 765.9 L1543.0 762.1 L1547.4 758.3 L1551.7 754.6 L1556.1 750.9 L1560.4 747.2 L1564.8 743.2 L1569.2 738.8 L1573.5 733.9 L1577.9 728.4 L1582.2 722.6 L1586.6 716.6 L1591.0 710.7 L1595.3 704.9 L1599.7 699.4 L1604.0 694.2 L1608.4 689.2 L1612.8 684.3 L1617.1 679.4 L1621.5 674.5 L1625.8 669.5 L1630.2 664.5 L1634.6 659.3 L1638.9 654.0 L1643.3 648.7 L1647.6 643.4 L1652.0 638.1 L1656.4 632.8 L1660.7 627.6 L1665.1 622.4 L1669.4 617.2 L1673.8 611.9 L1678.2 606.5 L1682.5 601.1 L1686.9 595.8 L1691.2 590.6 L1695.6 585.7 L1700.0 581.0 L1704.3 576.8 L1708.7 572.9 L1713.0 569.5 L1717.4 566.5 L1721.8 563.7 L1726.1 561.3 L1730.5 559.1 L1734.8 557.2 L1739.2 555.4 L1743.6 553.7 L1747.9 552.2 L1752.3 550.8 L1756.6 549.6 L1761.0 548.5 L1765.4 547.5 L1769.7 546.5 L1774.1 545.4 L1778.4 544.4 L1782.8 543.3 L1787.2 542.3 L1791.5 541.4" stroke="#10c0d8" stroke-width="1.2" fill="none" stroke-linejoin="round" />
<path d="M99.8 528.2 L104.2 528.7 L108.6 529.4 L112.9 530.2 L117.3 531.1 L121.6 532.4 L126.0 534.3 L130.4 536.6 L134.7 539.0 L139.1 541.4 L143.4 543.9 L147.8 546.4 L152.2 549.0 L156.5 551.7 L160.9 554.4 L165.2 557.2 L169.6 560.2 L174.0 563.5 L178.3 566.5 L182.7 569.1 L187.0 571.4 L191.4 573.6 L195.8 575.4 L200.1 577.0 L204.5 578.2 L208.8 579.0 L213.2 579.4 L217.6 579.6 L221.9 579.9 L226.3 580.4 L230.6 581.3 L235.0 582.7 L239.4 584.1 L243.7 585.5 L248.1 586.9 L252.4 588.3 L256.8 589.7 L261.2 591.3 L265.5 593.0 L269.9 594.9 L274.2 596.7 L278.6 598.3 L283.0 599.5 L287.3 600.4 L291.7 601.2 L296.0 601.9 L300.4 602.7 L304.8 603.5 L309.1 604.4 L313.5 605.5 L317.8 607.0 L322.2 608.9 L326.6 610.8 L330.9 612.8 L335.3 614.7 L339.6 616.7 L344.0 618.6 L348.4 620.5 L352.7 622.4 L357.1 624.1 L361.4 625.8 L365.8 627.5 L370.2 629.0 L374.5 630.2 L378.9 630.8 L383.2 631.0 L387.6 631.3 L392.0 631.5 L396.3 631.6 L400.7 631.7 L405.0 631.7 L409.4 631.7 L413.8 632.0 L418.1 633.0 L422.5 634.4 L426.8 636.1 L431.2 637.7 L435.6 639.3 L439.9 640.8 L444.3 642.3 L448.6 643.9 L453.0 645.3 L457.4 646.3 L461.7 647.0 L466.1 647.4 L470.4 647.8 L474.8 648.0 L479.2 648.2 L483.5 648.3 L487.9 648.4 L492.2 648.2 L496.6 647.7 L501.0 647.0 L505.3 646.4 L509.7 645.8 L514.0 645.3 L518.4 644.9 L522.8 644.6 L527.1 644.3 L531.5 644.0 L535.8 643.5 L540.2 642.8 L544.6 641.8 L548.9 640.5 L553.3 638.7 L557.6 636.5 L562.0 633.9 L566.4 630.9 L570.7 627.6 L575.1 624.3 L579.4 620.9 L583.8 617.3 L588.2 613.6 L592.5 609.7 L596.9 605.7 L601.2 601.8 L605.6 598.0 L610.0 594.7 L614.3 592.0 L618.7 589.9 L623.0 588.6 L627.4 587.9 L631.8 587.8 L636.1 588.0 L640.5 588.5 L644.8 589.2 L649.2 590.1 L653.6 590.8 L657.9 591.5 L662.3 592.1 L666.6 592.7 L671.0 593.3 L675.4 593.9 L679.7 594.7 L684.1 595.8 L688.4 597.3 L692.8 599.1 L697.2 601.3 L701.5 604.0 L705.9 607.3 L710.2 611.1 L714.6 615.5 L719.0 620.2 L723.3 625.3 L727.7 630.6 L732.0 635.8 L736.4 640.7 L740.8 645.2 L745.1 649.3 L749.5 653.1 L753.8 656.9 L758.2 661.0 L762.6 665.4 L766.9 670.4 L771.3 675.8 L775.6 681.4 L780.0 687.0 L784.4 692.4 L788.7 697.4 L793.1 702.0 L797.4 706.1 L801.8 709.8 L806.2 713.3 L810.5 716.4 L814.9 719.3 L819.2 722.0 L823.6 724.7 L828.0 727.4 L832.3 729.9 L836.7 732.1 L841.0 734.1 L845.4 735.6 L849.8 736.9 L854.1 738.0 L858.5 739.0 L862.8 740.1 L867.2 741.4 L871.6 742.6 L875.9 743.6 L880.3 743.9 L884.6 743.4 L889.0 742.0 L893.4 739.7 L897.7 736.9 L902.1 733.8 L906.4 730.6 L910.8 727.6 L915.2 725.1 L919.5 723.1 L923.9 721.6 L928.2 720.7 L932.6 720.3 L937.0 720.3 L941.3 720.7 L945.7 721.5 L950.0 722.7 L954.4 724.1 L958.8 725.7 L963.1 727.3 L967.5 728.9 L971.8 730.4 L976.2 731.9 L980.6 733.3 L984.9 734.6 L989.3 735.8 L993.6 737.0 L998.0 738.1 L1002.4 739.2 L1006.7 740.5 L1011.1 742.0 L1015.4 743.8 L1019.8 745.7 L1024.2 747.5 L1028.5 749.1 L1032.9 750.3 L1037.2 751.1 L1041.6 751.8 L1046.0 752.4 L1050.3 753.0 L1054.7 753.6 L1059.0 754.2 L1063.4 754.8 L1067.8 755.5 L1072.1 756.0 L1076.5 756.4 L1080.8 756.6 L1085.2 756.6 L1089.6 756.6 L1093.9 756.6 L1098.3 756.8 L1102.6 757.3 L1107.0 758.1 L1111.4 759.4 L1115.7 761.1 L1120.1 763.1 L1124.4 765.5 L1128.8 768.1 L1133.2 770.8 L1137.5 773.5 L1141.9 776.2 L1146.2 779.0 L1150.6 781.7 L1155.0 784.4 L1159.3 787.2 L1163.7 790.3 L1168.0 793.4 L1172.4 796.7 L1176.8 800.0 L1181.1 803.2 L1185.5 806.4 L1189.8 809.4 L1194.2 812.3 L1198.6 814.9 L1202.9 817.5 L1207.3 820.1 L1211.6 822.6 L1216.0 824.9 L1220.4 827.3 L1224.7 829.5 L1229.1 831.5 L1233.4 833.3 L1237.8 834.6 L1242.2 835.6 L1246.5 836.2 L1250.9 836.5 L1255.2 836.7 L1259.6 836.8 L1264.0 836.9 L1268.3 837.1 L1272.7 837.2 L1277.0 837.1 L1281.4 837.0 L1285.8 836.5 L1290.1 835.8 L1294.5 834.7 L1298.8 833.3 L1303.2 831.8 L1307.6 830.4 L1311.9 829.1 L1316.3 828.1 L1320.6 827.3 L1325.0 826.7 L1329.4 826.2 L1333.7 825.7 L1338.1 825.2 L1342.4 824.7 L1346.8 824.1 L1351.2 823.5 L1355.5 823.0 L1359.9 822.5 L1364.2 822.1 L1368.6 821.8 L1373.0 821.4 L1377.3 821.1 L1381.7 820.5 L1386.0 819.6 L1390.4 818.3 L1394.8 816.7 L1399.1 814.9 L1403.5 813.0 L1407.8 811.2 L1412.2 809.8 L1416.6 808.9 L1420.9 808.5 L1425.3 808.4 L1429.6 808.4 L1434.0 808.5 L1438.4 808.4 L1442.7 807.8 L1447.1 806.8 L1451.4 805.0 L1455.8 802.6 L1460.2 799.6 L1464.5 796.0 L1468.9 791.9 L1473.2 787.4 L1477.6 782.7 L1482.0 778.1 L1486.3 773.6 L1490.7 769.1 L1495.0 764.6 L1499.4 760.1 L1503.8 755.7 L1508.1 751.4 L1512.5 747.3 L1516.8 743.3 L1521.2 739.4 L1525.6 735.5 L1529.9 731.1 L1534.3 726.1 L1538.6 720.5 L1543.0 714.3 L1547.4 707.7 L1551.7 700.8 L1556.1 693.5 L1560.4 685.9 L1564.8 677.8 L1569.2 669.1 L1573.5 659.9 L1577.9 650.1 L1582.2 640.2 L1586.6 630.6 L1591.0 621.8 L1595.3 613.9 L1599.7 607.0 L1604.0 601.0 L1608.4 595.6 L1612.8 590.4 L1617.1 585.3 L1621.5 580.0 L1625.8 574.5 L1630.2 568.8 L1634.6 563.0 L1638.9 556.7 L1643.3 550.2 L1647.6 543.5 L1652.0 536.7 L1656.4 530.1 L1660.7 524.0 L1665.1 518.6 L1669.4 513.8 L1673.8 509.4 L1678.2 505.3 L1682.5 501.5 L1686.9 498.2 L1691.2 495.4 L1695.6 493.5 L1700.0 492.9 L1704.3 493.6 L1708.7 495.8 L1713.0 498.8 L1717.4 502.3 L1721.8 505.6 L1726.1 508.6 L1730.5 511.2 L1734.8 513.3 L1739.2 515.1 L1743.6 517.0 L1747.9 519.1 L1752.3 521.6 L1756.6 524.7 L1761.0 528.2 L1765.4 532.0 L1769.7 536.2 L1774.1 540.7 L1778.4 545.3 L1782.8 549.9 L1787.2 554.4 L1791.5 558.9" stroke="#00c800" stroke-width="1.15" fill="none" stroke-linejoin="round" />
<path d="M99.8 531.0 L104.2 532.3 L108.6 534.4 L112.9 537.3 L117.3 540.8 L121.6 545.0 L126.0 549.8 L130.4 554.6 L134.7 558.9 L139.1 562.9 L143.4 566.8 L147.8 570.8 L152.2 574.5 L156.5 577.6 L160.9 579.4 L165.2 580.1 L169.6 580.2 L174.0 580.2 L178.3 580.5 L182.7 580.9 L187.0 581.4 L191.4 581.9 L195.8 582.1 L200.1 581.9 L204.5 581.4 L208.8 581.1 L213.2 581.0 L217.6 581.1 L221.9 581.2 L226.3 581.6 L230.6 582.5 L235.0 583.8 L239.4 585.4 L243.7 587.1 L248.1 588.9 L252.4 590.8 L256.8 592.9 L261.2 595.2 L265.5 597.9 L269.9 600.7 L274.2 603.2 L278.6 605.4 L283.0 607.2 L287.3 609.2 L291.7 611.2 L296.0 613.3 L300.4 615.5 L304.8 617.5 L309.1 619.2 L313.5 620.7 L317.8 621.9 L322.2 622.9 L326.6 623.6 L330.9 624.3 L335.3 624.9 L339.6 625.4 L344.0 625.7 L348.4 626.0 L352.7 626.3 L357.1 626.9 L361.4 627.8 L365.8 629.1 L370.2 630.4 L374.5 631.5 L378.9 632.3 L383.2 632.9 L387.6 633.2 L392.0 633.3 L396.3 633.2 L400.7 633.0 L405.0 633.5 L409.4 634.7 L413.8 636.7 L418.1 638.9 L422.5 641.1 L426.8 643.3 L431.2 645.3 L435.6 646.9 L439.9 648.2 L444.3 649.3 L448.6 650.3 L453.0 651.0 L457.4 651.4 L461.7 651.6 L466.1 651.8 L470.4 652.1 L474.8 652.5 L479.2 653.2 L483.5 654.1 L487.9 654.8 L492.2 654.9 L496.6 654.1 L501.0 652.7 L505.3 650.9 L509.7 648.8 L514.0 646.5 L518.4 644.0 L522.8 641.4 L527.1 638.8 L531.5 636.4 L535.8 634.2 L540.2 632.1 L544.6 630.0 L548.9 627.8 L553.3 625.5 L557.6 623.1 L562.0 620.4 L566.4 617.5 L570.7 614.4 L575.1 611.0 L579.4 607.6 L583.8 603.9 L588.2 600.0 L592.5 595.8 L596.9 591.4 L601.2 586.9 L605.6 582.6 L610.0 578.8 L614.3 575.8 L618.7 573.5 L623.0 572.3 L627.4 571.8 L631.8 572.1 L636.1 573.0 L640.5 574.5 L644.8 576.6 L649.2 579.1 L653.6 582.0 L657.9 585.0 L662.3 588.4 L666.6 592.0 L671.0 596.0 L675.4 600.4 L679.7 605.3 L684.1 610.7 L688.4 616.3 L692.8 622.0 L697.2 627.5 L701.5 632.5 L705.9 637.2 L710.2 641.4 L714.6 645.2 L719.0 648.7 L723.3 651.8 L727.7 654.5 L732.0 656.8 L736.4 658.6 L740.8 660.4 L745.1 662.4 L749.5 665.0 L753.8 668.6 L758.2 673.4 L762.6 679.4 L766.9 686.5 L771.3 694.4 L775.6 702.7 L780.0 711.0 L784.4 718.5 L788.7 725.1 L793.1 730.4 L797.4 734.6 L801.8 737.6 L806.2 740.0 L810.5 741.9 L814.9 743.7 L819.2 745.7 L823.6 748.0 L828.0 750.7 L832.3 753.4 L836.7 755.7 L841.0 757.1 L845.4 757.2 L849.8 755.8 L854.1 753.2 L858.5 749.3 L862.8 744.8 L867.2 740.2 L871.6 735.7 L875.9 731.6 L880.3 727.9 L884.6 724.5 L889.0 721.6 L893.4 719.1 L897.7 717.3 L902.1 716.2 L906.4 715.6 L910.8 715.3 L915.2 715.1 L919.5 714.9 L923.9 714.7 L928.2 714.5 L932.6 714.6 L937.0 715.0 L941.3 715.9 L945.7 717.5 L950.0 719.6 L954.4 722.2 L958.8 725.4 L963.1 729.0 L967.5 733.2 L971.8 737.6 L976.2 742.1 L980.6 746.2 L984.9 749.7 L989.3 752.4 L993.6 754.4 L998.0 755.8 L1002.4 756.9 L1006.7 757.8 L1011.1 758.6 L1015.4 759.2 L1019.8 759.8 L1024.2 760.0 L1028.5 759.9 L1032.9 759.3 L1037.2 758.2 L1041.6 756.8 L1046.0 755.1 L1050.3 753.4 L1054.7 751.7 L1059.0 750.2 L1063.4 749.0 L1067.8 748.3 L1072.1 748.1 L1076.5 748.3 L1080.8 749.0 L1085.2 750.0 L1089.6 751.5 L1093.9 753.2 L1098.3 755.3 L1102.6 757.7 L1107.0 760.6 L1111.4 763.9 L1115.7 767.6 L1120.1 771.7 L1124.4 775.9 L1128.8 780.2 L1133.2 784.5 L1137.5 788.6 L1141.9 792.6 L1146.2 796.5 L1150.6 800.0 L1155.0 803.4 L1159.3 806.7 L1163.7 810.1 L1168.0 813.5 L1172.4 816.9 L1176.8 820.2 L1181.1 823.3 L1185.5 826.0 L1189.8 828.4 L1194.2 830.2 L1198.6 831.7 L1202.9 832.8 L1207.3 833.8 L1211.6 834.6 L1216.0 835.3 L1220.4 836.2 L1224.7 837.2 L1229.1 838.3 L1233.4 839.2 L1237.8 840.1 L1242.2 840.8 L1246.5 841.1 L1250.9 841.1 L1255.2 840.7 L1259.6 840.3 L1264.0 839.9 L1268.3 839.4 L1272.7 838.8 L1277.0 838.0 L1281.4 837.1 L1285.8 835.8 L1290.1 834.1 L1294.5 832.0 L1298.8 829.7 L1303.2 827.3 L1307.6 824.9 L1311.9 822.7 L1316.3 820.9 L1320.6 819.4 L1325.0 818.4 L1329.4 817.6 L1333.7 817.1 L1338.1 816.7 L1342.4 816.5 L1346.8 816.3 L1351.2 816.1 L1355.5 816.1 L1359.9 816.3 L1364.2 816.7 L1368.6 817.3 L1373.0 818.1 L1377.3 819.0 L1381.7 819.8 L1386.0 820.2 L1390.4 820.1 L1394.8 819.4 L1399.1 818.0 L1403.5 816.1 L1407.8 813.9 L1412.2 811.7 L1416.6 809.9 L1420.9 808.2 L1425.3 806.8 L1429.6 805.3 L1434.0 803.9 L1438.4 802.2 L1442.7 800.0 L1447.1 797.3 L1451.4 793.8 L1455.8 789.5 L1460.2 784.8 L1464.5 779.4 L1468.9 773.8 L1473.2 768.1 L1477.6 762.9 L1482.0 758.2 L1486.3 754.1 L1490.7 750.4 L1495.0 746.7 L1499.4 742.7 L1503.8 738.2 L1508.1 733.4 L1512.5 728.1 L1516.8 722.5 L1521.2 716.5 L1525.6 710.0 L1529.9 702.9 L1534.3 695.1 L1538.6 687.1 L1543.0 679.4 L1547.4 672.1 L1551.7 665.4 L1556.1 659.2 L1560.4 653.2 L1564.8 646.6 L1569.2 638.7 L1573.5 629.5 L1577.9 618.8 L1582.2 607.3 L1586.6 595.4 L1591.0 584.0 L1595.3 573.2 L1599.7 563.4 L1604.0 554.7 L1608.4 547.1 L1612.8 540.7 L1617.1 535.3 L1621.5 531.2 L1625.8 527.7 L1630.2 524.5 L1634.6 521.0 L1638.9 517.3 L1643.3 513.2 L1647.6 508.9 L1652.0 504.8 L1656.4 501.5 L1660.7 499.1 L1665.1 497.9 L1669.4 497.5 L1673.8 497.6 L1678.2 497.3 L1682.5 496.8 L1686.9 495.9 L1691.2 494.7 L1695.6 493.5 L1700.0 492.4 L1704.3 492.1 L1708.7 492.5 L1713.0 493.7 L1717.4 495.6 L1721.8 498.0 L1726.1 501.1 L1730.5 504.9 L1734.8 509.5 L1739.2 514.8 L1743.6 520.9 L1747.9 528.0 L1752.3 535.7 L1756.6 544.0 L1761.0 552.6 L1765.4 561.1 L1769.7 569.3 L1774.1 576.9 L1778.4 583.7 L1782.8 589.2 L1787.2 593.7 L1791.5 596.9" stroke="#e070e0" stroke-width="1.15" fill="none" stroke-linejoin="round" />
<path d="M99.8 558.8 L104.2 563.0 L108.6 567.0 L112.9 570.7 L117.3 573.4 L121.6 575.8 L126.0 577.7 L130.4 578.9 L134.7 579.6 L139.1 580.5 L143.4 581.0 L147.8 581.5 L152.2 581.8 L156.5 582.1 L160.9 582.4 L165.2 582.7 L169.6 582.7 L174.0 582.6 L178.3 582.4 L182.7 582.1 L187.0 581.8 L191.4 581.3 L195.8 580.3 L200.1 579.2 L204.5 578.2 L208.8 577.6 L213.2 577.2 L217.6 578.0 L221.9 579.2 L226.3 581.2 L230.6 583.9 L235.0 586.9 L239.4 590.8 L243.7 595.0 L248.1 600.0 L252.4 604.7 L256.8 609.7 L261.2 614.1 L265.5 618.1 L269.9 621.6 L274.2 624.1 L278.6 625.9 L283.0 626.8 L287.3 627.0 L291.7 626.2 L296.0 625.0 L300.4 623.9 L304.8 622.3 L309.1 620.5 L313.5 618.8 L317.8 617.8 L322.2 617.4 L326.6 617.6 L330.9 618.9 L335.3 620.7 L339.6 622.9 L344.0 624.9 L348.4 627.0 L352.7 629.4 L357.1 631.9 L361.4 634.3 L365.8 636.7 L370.2 638.7 L374.5 639.6 L378.9 640.2 L383.2 640.3 L387.6 639.5 L392.0 638.9 L396.3 637.9 L400.7 637.1 L405.0 637.0 L409.4 637.3 L413.8 638.7 L418.1 640.8 L422.5 643.6 L426.8 647.2 L431.2 651.8 L435.6 655.9 L439.9 660.0 L444.3 663.0 L448.6 664.7 L453.0 665.7 L457.4 665.9 L461.7 665.4 L466.1 663.6 L470.4 661.2 L474.8 657.8 L479.2 654.2 L483.5 650.7 L487.9 647.4 L492.2 644.3 L496.6 640.9 L501.0 637.6 L505.3 634.3 L509.7 631.4 L514.0 628.8 L518.4 626.2 L522.8 624.4 L527.1 622.5 L531.5 621.1 L535.8 619.9 L540.2 619.1 L544.6 618.1 L548.9 617.0 L553.3 614.8 L557.6 612.0 L562.0 608.9 L566.4 604.6 L570.7 599.5 L575.1 594.1 L579.4 588.2 L583.8 581.1 L588.2 573.5 L592.5 566.0 L596.9 558.9 L601.2 552.9 L605.6 548.3 L610.0 546.0 L614.3 547.2 L618.7 549.6 L623.0 555.0 L627.4 563.1 L631.8 572.1 L636.1 582.3 L640.5 594.0 L644.8 605.3 L649.2 615.4 L653.6 623.9 L657.9 629.5 L662.3 634.3 L666.6 636.7 L671.0 637.4 L675.4 638.3 L679.7 638.9 L684.1 638.7 L688.4 638.7 L692.8 639.8 L697.2 641.7 L701.5 644.6 L705.9 649.0 L710.2 654.1 L714.6 659.9 L719.0 665.6 L723.3 670.6 L727.7 675.0 L732.0 678.6 L736.4 680.8 L740.8 682.8 L745.1 684.9 L749.5 687.2 L753.8 691.9 L758.2 698.2 L762.6 707.0 L766.9 717.6 L771.3 730.6 L775.6 744.0 L780.0 756.8 L784.4 768.1 L788.7 777.3 L793.1 782.2 L797.4 783.9 L801.8 782.1 L806.2 776.8 L810.5 769.8 L814.9 760.4 L819.2 751.8 L823.6 744.6 L828.0 738.9 L832.3 734.8 L836.7 732.9 L841.0 731.3 L845.4 730.7 L849.8 730.3 L854.1 729.7 L858.5 729.2 L862.8 728.2 L867.2 726.8 L871.6 724.2 L875.9 720.6 L880.3 716.2 L884.6 711.3 L889.0 707.2 L893.4 703.9 L897.7 702.3 L902.1 701.8 L906.4 702.5 L910.8 703.4 L915.2 705.7 L919.5 708.6 L923.9 712.8 L928.2 717.8 L932.6 722.5 L937.0 727.6 L941.3 732.2 L945.7 737.0 L950.0 741.5 L954.4 746.8 L958.8 752.3 L963.1 757.3 L967.5 762.3 L971.8 766.7 L976.2 770.3 L980.6 772.3 L984.9 773.0 L989.3 772.3 L993.6 770.2 L998.0 767.2 L1002.4 763.2 L1006.7 759.9 L1011.1 756.3 L1015.4 753.0 L1019.8 749.9 L1024.2 747.8 L1028.5 746.0 L1032.9 744.3 L1037.2 743.6 L1041.6 743.3 L1046.0 743.3 L1050.3 743.5 L1054.7 743.8 L1059.0 744.5 L1063.4 746.3 L1067.8 748.3 L1072.1 750.4 L1076.5 753.3 L1080.8 756.2 L1085.2 759.4 L1089.6 763.0 L1093.9 766.7 L1098.3 771.6 L1102.6 776.2 L1107.0 781.3 L1111.4 786.9 L1115.7 792.7 L1120.1 798.5 L1124.4 804.3 L1128.8 809.7 L1133.2 814.3 L1137.5 818.6 L1141.9 821.4 L1146.2 824.2 L1150.6 825.5 L1155.0 826.4 L1159.3 827.3 L1163.7 828.7 L1168.0 829.6 L1172.4 830.9 L1176.8 832.5 L1181.1 833.9 L1185.5 835.5 L1189.8 836.7 L1194.2 838.0 L1198.6 839.3 L1202.9 840.3 L1207.3 840.6 L1211.6 840.9 L1216.0 841.3 L1220.4 842.1 L1224.7 842.6 L1229.1 843.0 L1233.4 843.6 L1237.8 843.7 L1242.2 843.2 L1246.5 842.0 L1250.9 840.9 L1255.2 839.7 L1259.6 838.6 L1264.0 836.8 L1268.3 835.0 L1272.7 833.1 L1277.0 830.9 L1281.4 828.3 L1285.8 825.1 L1290.1 822.2 L1294.5 818.5 L1298.8 814.8 L1303.2 811.2 L1307.6 808.3 L1311.9 806.5 L1316.3 805.6 L1320.6 805.5 L1325.0 806.8 L1329.4 808.8 L1333.7 811.4 L1338.1 814.5 L1342.4 817.9 L1346.8 820.9 L1351.2 823.7 L1355.5 825.8 L1359.9 827.7 L1364.2 829.0 L1368.6 829.4 L1373.0 829.3 L1377.3 828.6 L1381.7 826.0 L1386.0 822.9 L1390.4 818.3 L1394.8 812.5 L1399.1 806.6 L1403.5 800.1 L1407.8 794.3 L1412.2 790.0 L1416.6 787.3 L1420.9 784.7 L1425.3 784.8 L1429.6 784.9 L1434.0 786.3 L1438.4 788.0 L1442.7 788.6 L1447.1 788.0 L1451.4 785.3 L1455.8 779.5 L1460.2 772.2 L1464.5 762.7 L1468.9 751.3 L1473.2 740.1 L1477.6 729.6 L1482.0 720.2 L1486.3 712.2 L1490.7 705.5 L1495.0 700.4 L1499.4 697.4 L1503.8 694.6 L1508.1 693.9 L1512.5 694.1 L1516.8 693.0 L1521.2 690.8 L1525.6 686.2 L1529.9 678.4 L1534.3 668.1 L1538.6 658.1 L1543.0 646.7 L1547.4 635.5 L1551.7 624.3 L1556.1 612.7 L1560.4 601.0 L1564.8 587.9 L1569.2 573.5 L1573.5 560.1 L1577.9 546.4 L1582.2 532.4 L1586.6 520.6 L1591.0 510.5 L1595.3 501.8 L1599.7 495.7 L1604.0 492.7 L1608.4 492.6 L1612.8 496.3 L1617.1 501.4 L1621.5 509.3 L1625.8 516.3 L1630.2 521.7 L1634.6 524.7 L1638.9 524.7 L1643.3 521.7 L1647.6 516.6 L1652.0 509.3 L1656.4 501.3 L1660.7 493.4 L1665.1 485.7 L1669.4 479.0 L1673.8 473.5 L1678.2 469.0 L1682.5 467.3 L1686.9 468.1 L1691.2 469.9 L1695.6 475.3 L1700.0 482.1 L1704.3 491.1 L1708.7 501.2 L1713.0 511.8 L1717.4 522.2 L1721.8 532.6 L1726.1 542.0 L1730.5 550.4 L1734.8 558.9 L1739.2 566.1 L1743.6 573.2 L1747.9 580.1 L1752.3 586.5 L1756.6 593.4 L1761.0 600.2 L1765.4 606.5 L1769.7 612.4 L1774.1 617.4 L1778.4 620.7 L1782.8 621.8 L1787.2 621.5 L1791.5 619.0" stroke="#f0e000" stroke-width="1.15" fill="none" stroke-linejoin="round" />
<path d="M99.8 575.4 L104.2 576.9 L108.6 577.7 L112.9 578.6 L117.3 579.8 L121.6 581.4 L126.0 582.3 L130.4 581.5 L134.7 580.8 L139.1 580.3 L143.4 581.2 L147.8 582.0 L152.2 583.5 L156.5 585.4 L160.9 586.7 L165.2 584.8 L169.6 582.9 L174.0 582.2 L178.3 581.8 L182.7 581.4 L187.0 579.5 L191.4 577.5 L195.8 575.6 L200.1 573.4 L204.5 571.2 L208.8 573.5 L213.2 576.3 L217.6 580.3 L221.9 584.7 L226.3 590.3 L230.6 596.2 L235.0 602.2 L239.4 608.2 L243.7 613.9 L248.1 619.4 L252.4 623.9 L256.8 627.2 L261.2 630.6 L265.5 634.4 L269.9 636.7 L274.2 634.0 L278.6 631.3 L283.0 628.6 L287.3 625.7 L291.7 619.2 L296.0 615.5 L300.4 615.1 L304.8 614.8 L309.1 614.9 L313.5 616.1 L317.8 617.2 L322.2 619.4 L326.6 622.8 L330.9 626.1 L335.3 629.0 L339.6 631.9 L344.0 634.8 L348.4 636.8 L352.7 638.6 L357.1 640.4 L361.4 642.5 L365.8 644.7 L370.2 646.8 L374.5 645.7 L378.9 642.4 L383.2 638.5 L387.6 634.2 L392.0 630.6 L396.3 628.1 L400.7 629.0 L405.0 632.3 L409.4 638.2 L413.8 646.9 L418.1 655.6 L422.5 664.2 L426.8 671.0 L431.2 675.8 L435.6 673.8 L439.9 671.8 L444.3 668.8 L448.6 663.9 L453.0 660.0 L457.4 659.2 L461.7 658.3 L466.1 654.4 L470.4 648.7 L474.8 643.1 L479.2 639.8 L483.5 636.5 L487.9 633.3 L492.2 631.9 L496.6 630.8 L501.0 629.7 L505.3 627.1 L509.7 623.8 L514.0 620.5 L518.4 617.9 L522.8 615.7 L527.1 613.5 L531.5 613.1 L535.8 615.3 L540.2 617.5 L544.6 619.9 L548.9 622.4 L553.3 614.2 L557.6 603.9 L562.0 590.8 L566.4 578.3 L570.7 567.4 L575.1 559.3 L579.4 564.3 L583.8 562.7 L588.2 548.1 L592.5 538.1 L596.9 529.3 L601.2 525.8 L605.6 524.2 L610.0 537.3 L614.3 553.7 L618.7 571.5 L623.0 590.4 L627.4 607.4 L631.8 623.1 L636.1 633.3 L640.5 640.9 L644.8 645.9 L649.2 645.3 L653.6 641.5 L657.9 637.3 L662.3 632.9 L666.6 632.4 L671.0 633.5 L675.4 635.9 L679.7 639.2 L684.1 641.7 L688.4 643.6 L692.8 645.4 L697.2 649.1 L701.5 656.2 L705.9 664.3 L710.2 675.2 L714.6 685.6 L719.0 693.2 L723.3 699.9 L727.7 694.5 L732.0 689.0 L736.4 678.3 L740.8 667.4 L745.1 672.3 L749.5 681.7 L753.8 696.2 L758.2 733.1 L762.6 764.3 L766.9 791.6 L771.3 810.0 L775.6 824.3 L780.0 817.6 L784.4 806.9 L788.7 785.1 L793.1 763.3 L797.4 752.6 L801.8 743.0 L806.2 735.2 L810.5 731.7 L814.9 728.2 L819.2 727.6 L823.6 728.5 L828.0 729.4 L832.3 731.6 L836.7 733.7 L841.0 735.9 L845.4 733.6 L849.8 730.7 L854.1 727.8 L858.5 724.6 L862.8 721.3 L867.2 718.0 L871.6 714.8 L875.9 707.9 L880.3 698.1 L884.6 689.8 L889.0 683.2 L893.4 683.0 L897.7 694.6 L902.1 707.4 L906.4 718.4 L910.8 721.3 L915.2 724.3 L919.5 727.1 L923.9 727.9 L928.2 728.8 L932.6 731.9 L937.0 738.0 L941.3 744.1 L945.7 753.2 L950.0 763.0 L954.4 769.0 L958.8 773.3 L963.1 778.6 L967.5 784.1 L971.8 779.7 L976.2 775.3 L980.6 771.8 L984.9 768.3 L989.3 764.1 L993.6 758.3 L998.0 752.5 L1002.4 747.2 L1006.7 744.4 L1011.1 741.9 L1015.4 743.0 L1019.8 744.1 L1024.2 745.2 L1028.5 744.0 L1032.9 742.5 L1037.2 741.1 L1041.6 741.2 L1046.0 741.8 L1050.3 742.5 L1054.7 743.4 L1059.0 747.8 L1063.4 752.1 L1067.8 756.9 L1072.1 762.1 L1076.5 767.4 L1080.8 770.0 L1085.2 772.2 L1089.6 774.4 L1093.9 779.3 L1098.3 785.4 L1102.6 791.9 L1107.0 802.8 L1111.4 813.7 L1115.7 820.7 L1120.1 827.7 L1124.4 831.6 L1128.8 829.8 L1133.2 828.0 L1137.5 826.2 L1141.9 824.8 L1146.2 823.3 L1150.6 822.2 L1155.0 826.1 L1159.3 830.0 L1163.7 834.3 L1168.0 839.1 L1172.4 843.9 L1176.8 843.1 L1181.1 840.9 L1185.5 838.7 L1189.8 838.3 L1194.2 838.9 L1198.6 839.4 L1202.9 840.0 L1207.3 841.1 L1211.6 842.9 L1216.0 844.7 L1220.4 846.5 L1224.7 848.3 L1229.1 849.3 L1233.4 845.6 L1237.8 842.0 L1242.2 838.3 L1246.5 834.6 L1250.9 830.8 L1255.2 829.7 L1259.6 831.9 L1264.0 834.1 L1268.3 832.0 L1272.7 828.9 L1277.0 825.8 L1281.4 820.4 L1285.8 814.2 L1290.1 807.9 L1294.5 801.2 L1298.8 794.3 L1303.2 792.7 L1307.6 797.9 L1311.9 804.0 L1316.3 812.8 L1320.6 821.2 L1325.0 822.8 L1329.4 824.4 L1333.7 826.1 L1338.1 827.1 L1342.4 827.7 L1346.8 828.2 L1351.2 828.8 L1355.5 830.9 L1359.9 833.1 L1364.2 835.3 L1368.6 835.2 L1373.0 832.5 L1377.3 827.4 L1381.7 816.1 L1386.0 804.7 L1390.4 793.1 L1394.8 781.5 L1399.1 771.1 L1403.5 762.4 L1407.8 767.2 L1412.2 778.1 L1416.6 785.6 L1420.9 792.9 L1425.3 798.3 L1429.6 799.0 L1434.0 799.7 L1438.4 795.7 L1442.7 789.2 L1447.1 782.6 L1451.4 769.5 L1455.8 756.5 L1460.2 739.4 L1464.5 715.4 L1468.9 700.7 L1473.2 692.0 L1477.6 683.2 L1482.0 688.0 L1486.3 693.3 L1490.7 697.2 L1495.0 700.6 L1499.4 700.9 L1503.8 698.7 L1508.1 696.5 L1512.5 694.4 L1516.8 692.2 L1521.2 684.4 L1525.6 662.6 L1529.9 639.6 L1534.3 615.6 L1538.6 598.3 L1543.0 583.2 L1547.4 585.9 L1551.7 588.5 L1556.1 584.0 L1560.4 577.9 L1564.8 562.3 L1569.2 540.5 L1573.5 511.3 L1577.9 481.7 L1582.2 462.1 L1586.6 452.5 L1591.0 463.4 L1595.3 481.8 L1599.7 505.7 L1604.0 520.9 L1608.4 534.0 L1612.8 544.4 L1617.1 541.4 L1621.5 538.5 L1625.8 534.1 L1630.2 528.3 L1634.6 522.5 L1638.9 508.9 L1643.3 494.4 L1647.6 481.3 L1652.0 472.6 L1656.4 464.0 L1660.7 458.6 L1665.1 455.7 L1669.4 459.2 L1673.8 462.4 L1678.2 463.2 L1682.5 463.9 L1686.9 471.2 L1691.2 486.4 L1695.6 501.2 L1700.0 515.7 L1704.3 530.2 L1708.7 544.2 L1713.0 558.1 L1717.4 565.8 L1721.8 571.5 L1726.1 569.8 L1730.5 568.1 L1734.8 571.8 L1739.2 577.6 L1743.6 593.3 L1747.9 609.0 L1752.3 619.8 L1756.6 630.3 L1761.0 635.6 L1765.4 639.1 L1769.7 637.1 L1774.1 630.1 L1778.4 622.5 L1782.8 613.8 L1787.2 604.8 L1791.5 593.9" stroke="#f4f4f4" stroke-width="1.15" fill="none" stroke-linejoin="round" />
<line x1="768.0" y1="880.0" x2="786.0" y2="880.0" stroke="#c8c8c8" stroke-width="1.3" />
<polygon points="766.0,880.0 771.0,877.0 771.0,883.0" fill="#c8c8c8" />
<line x1="1579.0" y1="341.5" x2="1597.0" y2="341.5" stroke="#c8c8c8" stroke-width="1.3" />
<polygon points="1577.0,341.5 1582.0,338.5 1582.0,344.5" fill="#c8c8c8" />
<line x1="758.5" y1="151.0" x2="758.5" y2="920.0" stroke="#f0d000" stroke-width="1.6" stroke-dasharray="4.5 2.8"/>
<line x1="1375.5" y1="151.0" x2="1375.5" y2="921.0" stroke="#e8e8e8" stroke-width="1.6" />
<line x1="1375.5" y1="953.0" x2="1375.5" y2="1277.0" stroke="#e8e8e8" stroke-width="1.6" />
<line x1="1375.5" y1="1339.0" x2="1375.5" y2="1588.0" stroke="#e8e8e8" stroke-width="1.6" />
<polygon points="175.0,150.5 182.0,157.5 175.0,164.5 168.0,157.5" fill="#2a9fd4" />
<polygon points="274.0,150.5 281.0,157.5 274.0,164.5 267.0,157.5" fill="#2a9fd4" />
<polygon points="450.0,150.5 457.0,157.5 450.0,164.5 443.0,157.5" fill="#2a9fd4" />
<polygon points="747.0,150.5 754.0,157.5 747.0,164.5 740.0,157.5" fill="#2a9fd4" />
<polygon points="769.0,150.5 776.0,157.5 769.0,164.5 762.0,157.5" fill="#2a9fd4" />
<polygon points="904.5,150.5 911.5,157.5 904.5,164.5 897.5,157.5" fill="#2a9fd4" />
<polygon points="922.5,150.5 929.5,157.5 922.5,164.5 915.5,157.5" fill="#2a9fd4" />
<polygon points="972.0,150.5 979.0,157.5 972.0,164.5 965.0,157.5" fill="#2a9fd4" />
<polygon points="998.5,150.5 1005.5,157.5 998.5,164.5 991.5,157.5" fill="#2a9fd4" />
<polygon points="1183.0,150.5 1190.0,157.5 1183.0,164.5 1176.0,157.5" fill="#2a9fd4" />
<polygon points="1381.0,150.5 1388.0,157.5 1381.0,164.5 1374.0,157.5" fill="#2a9fd4" />
<polygon points="1391.0,150.5 1398.0,157.5 1391.0,164.5 1384.0,157.5" fill="#2a9fd4" />
<polygon points="1543.0,150.5 1550.0,157.5 1543.0,164.5 1536.0,157.5" fill="#2a9fd4" />
<polygon points="1637.0,150.5 1644.0,157.5 1637.0,164.5 1630.0,157.5" fill="#2a9fd4" />
<polygon points="1723.0,150.5 1730.0,157.5 1723.0,164.5 1716.0,157.5" fill="#2a9fd4" />
<polygon points="1797.4,520.1 1800.2,492.1 1808.6,453.0 1822.6,413.9 1839.3,380.4 1842.1,369.3 1856.1,330.2 1872.9,296.7 1881.2,263.1 1889.6,252.0 1895.2,224.0 1900.8,210.1 1911.9,224.0 1918.7,187.7 1925.9,221.3 1931.5,204.5 1939.9,221.3 1945.5,207.3 1951.0,193.3 1955.5,190.5 1955.5,821.7 1945.5,810.5 1937.1,821.7 1928.7,838.4 1923.1,816.1 1916.4,838.4 1909.2,832.9 1900.8,810.5 1892.4,818.9 1881.2,807.7 1872.9,782.6 1861.7,799.3 1850.5,751.9 1839.3,740.7 1831.0,729.5 1822.6,726.7 1814.2,698.8 1803.0,676.5 1797.4,626.2" fill="#f8ced6" />
<polygon points="1797.4,536.8 1801.8,533.9 1806.2,528.8 1810.6,529.6 1815.0,521.0 1819.4,522.7 1823.8,516.2 1828.2,517.6 1832.6,509.4 1837.0,508.8 1841.4,500.9 1845.8,501.6 1850.2,492.4 1854.6,493.5 1859.0,488.7 1863.4,493.1 1867.8,488.9 1872.2,494.0 1876.6,486.5 1881.0,489.0 1885.4,483.2 1889.8,487.2 1894.2,485.5 1898.6,489.9 1903.0,487.6 1907.4,488.3 1911.8,483.9 1916.2,486.2 1920.6,479.9 1925.0,482.3 1929.4,480.4 1933.8,484.8 1938.2,481.8 1942.6,483.9 1947.0,480.3 1951.4,480.4 1955.5,478.2 1955.5,718.4 1951.4,718.5 1947.0,714.5 1942.6,717.7 1938.2,710.8 1933.8,715.3 1929.4,708.0 1925.0,709.1 1920.6,699.5 1916.2,701.7 1911.8,694.8 1907.4,696.8 1903.0,691.5 1898.6,696.7 1894.2,691.8 1889.8,690.7 1885.4,685.3 1881.0,685.2 1876.6,678.8 1872.2,683.0 1867.8,675.6 1863.4,678.9 1859.0,671.5 1854.6,673.4 1850.2,667.4 1845.8,667.7 1841.4,661.5 1837.0,662.4 1832.6,656.3 1828.2,656.5 1823.8,647.8 1819.4,651.0 1815.0,644.4 1810.6,644.8 1806.2,633.3 1801.8,631.5 1797.4,626.2" fill="#fb92a3" />
<polygon points="1797.4,553.6 1801.8,551.8 1806.2,547.9 1810.6,549.4 1815.0,545.5 1819.4,546.9 1823.8,542.6 1828.2,544.5 1832.6,539.9 1837.0,540.0 1841.4,536.4 1845.8,538.5 1850.2,534.0 1854.6,537.5 1859.0,532.8 1863.4,536.9 1867.8,532.4 1872.2,534.7 1876.6,531.7 1881.0,532.8 1885.4,529.7 1889.8,532.5 1894.2,530.4 1898.6,533.5 1903.0,531.8 1907.4,536.0 1911.8,533.3 1916.2,534.1 1920.6,531.6 1925.0,533.3 1929.4,529.9 1933.8,531.8 1938.2,529.1 1942.6,533.5 1947.0,529.2 1951.4,532.6 1955.5,531.2 1955.5,679.3 1951.4,679.5 1947.0,674.9 1942.6,677.6 1938.2,671.8 1933.8,675.3 1929.4,668.7 1925.0,668.8 1920.6,661.2 1916.2,660.9 1911.8,654.4 1907.4,659.0 1903.0,654.0 1898.6,659.9 1894.2,654.2 1889.8,659.7 1885.4,652.4 1881.0,655.4 1876.6,650.7 1872.2,651.2 1867.8,647.7 1863.4,648.5 1859.0,643.5 1854.6,645.5 1850.2,640.8 1845.8,641.5 1841.4,634.5 1837.0,636.2 1832.6,627.7 1828.2,627.9 1823.8,621.9 1819.4,622.0 1815.0,615.6 1810.6,616.0 1806.2,605.5 1801.8,599.7 1797.4,592.7" fill="#e64158" />
<line x1="1797.0" y1="260.0" x2="1955.0" y2="260.0" stroke="#9a1424" stroke-width="1.3" stroke-dasharray="1.5 3" opacity="0.9"/>
<line x1="1797.0" y1="369.5" x2="1955.0" y2="369.5" stroke="#9a1424" stroke-width="1.3" stroke-dasharray="1.5 3" opacity="0.9"/>
<line x1="1797.0" y1="480.0" x2="1955.0" y2="480.0" stroke="#9a1424" stroke-width="1.3" stroke-dasharray="1.5 3" opacity="0.9"/>
<line x1="1797.0" y1="590.5" x2="1955.0" y2="590.5" stroke="#9a1424" stroke-width="1.3" stroke-dasharray="1.5 3" opacity="0.9"/>
<line x1="1797.0" y1="701.0" x2="1955.0" y2="701.0" stroke="#9a1424" stroke-width="1.3" stroke-dasharray="1.5 3" opacity="0.9"/>
<line x1="1797.0" y1="811.0" x2="1955.0" y2="811.0" stroke="#9a1424" stroke-width="1.3" stroke-dasharray="1.5 3" opacity="0.9"/>
<path d="M1802.0 600.0V615.8 M1806.4 602.5V628.3 M1810.8 615.4V659.7 M1815.2 649.5V675.0 M1819.6 660.7V677.1 M1824.0 655.8V676.7 M1828.4 636.9V668.3 M1832.8 596.4V648.8 M1837.2 572.6V607.7 M1841.6 578.9V616.5 M1846.0 601.6V623.4 M1850.4 605.6V624.6 M1854.8 590.0V620.3 M1859.2 576.6V604.5 M1863.6 564.7V588.5 M1868.0 560.9V575.3 M1872.4 565.4V579.8 M1876.8 569.7V592.0 M1881.2 574.7V600.7 M1885.6 583.0V613.5 M1890.0 598.7V636.0 M1894.4 613.6V636.9 M1898.8 611.2V625.5 M1903.2 610.5V645.6 M1907.6 628.9V645.8 M1912.0 620.3V645.2 M1916.4 591.6V635.5 M1920.8 593.4V607.1 M1925.2 594.7V607.8 M1929.6 593.7V612.2 M1934.0 574.3V613.8 M1938.4 564.2V591.9 M1942.8 563.8V591.2 M1947.2 576.9V604.9 M1951.6 590.2V617.5" stroke="#1e96e0" stroke-width="2.3" fill="none"/>
<line x1="1798.5" y1="536.0" x2="1798.5" y2="584.0" stroke="#1e96e0" stroke-width="2.8" />
<rect x="8.0" y="900.0" width="2176.0" height="2.0" fill="#e8e8e8" />
<rect x="8.0" y="921.5" width="2256.0" height="1.5" fill="#840000" />
<rect x="2183.5" y="890.0" width="86.0" height="22.0" fill="#4b0082" />
<rect x="2183.5" y="912.0" width="86.0" height="1.5" fill="#840000" />
<rect x="759.0" y="902.0" width="1400.0" height="18.5" fill="#111" />
<line x1="1795.5" y1="902.0" x2="1795.5" y2="920.0" stroke="#000" stroke-width="1.5" />
<rect x="2159.0" y="902.0" width="24.0" height="18.5" fill="#000" />
<polygon points="740.0,916.5 746.5,910.5 746.5,922.0" fill="#fff" />
<rect x="746.0" y="911.0" width="1.8" height="10.5" fill="#fff" />
<rect x="751.0" y="911.0" width="1.8" height="10.5" fill="#fff" />
<rect x="746.0" y="915.7" width="6.0" height="1.8" fill="#fff" />
<polygon points="775.0,916.5 768.5,910.5 768.5,922.0" fill="#fff" />
<rect x="762.5" y="911.0" width="1.8" height="10.5" fill="#fff" />
<rect x="767.5" y="911.0" width="1.8" height="10.5" fill="#fff" />
<rect x="762.5" y="915.7" width="6.0" height="1.8" fill="#fff" />
<rect x="7.5" y="150.5" width="92.5" height="704.0" fill="#840000" />
<rect x="9.0" y="152.0" width="89.5" height="701.0" fill="#000" />
<rect x="80.0" y="152.0" width="18.5" height="18.5" fill="#000" stroke="#840000" stroke-width="1.5"/>
<line x1="83.0" y1="155.0" x2="95.0" y2="167.0" stroke="#b0b0b0" stroke-width="1.2" />
<line x1="95.0" y1="155.0" x2="83.0" y2="167.0" stroke="#b0b0b0" stroke-width="1.2" />
<rect x="80.0" y="172.0" width="18.5" height="18.5" fill="#000" stroke="#840000" stroke-width="1.5"/>
<polygon points="96.3,182.0 96.0,183.3 93.7,183.7 93.2,184.5 93.7,186.7 92.6,187.5 90.8,186.1 89.8,186.3 88.6,188.3 87.3,188.0 86.9,185.7 86.1,185.2 83.9,185.7 83.1,184.6 84.5,182.8 84.3,181.8 82.3,180.6 82.6,179.3 84.9,178.9 85.4,178.1 84.9,175.9 86.0,175.1 87.8,176.5 88.8,176.3 90.0,174.3 91.3,174.6 91.7,176.9 92.5,177.4 94.7,176.9 95.5,178.0 94.1,179.8 94.3,180.8" fill="#8a8a8a" />
<circle cx="89.3" cy="181.3" r="2.6" fill="#000"/>
<circle cx="89.3" cy="181.3" r="4" fill="none" stroke="#000" stroke-width="1"/>
<line x1="8.0" y1="953.5" x2="2183.5" y2="953.5" stroke="#9a0000" stroke-width="1.3" stroke-dasharray="1.5 3"/>
<line x1="8.0" y1="1115.0" x2="2183.5" y2="1115.0" stroke="#9a0000" stroke-width="1.3" stroke-dasharray="1.5 3"/>
<rect x="2184.5" y="1252.0" width="38.0" height="24.0" fill="none" stroke="#840000" stroke-width="1.5"/>
<path d="M17.6 1032.3 L277.6 1031.4 L555.2 1031.9 L587.6 1033.2 L644.5 1031.9 L647.7 1244.7 L657.0 1249.3 L666.2 1243.3 L677.8 1242.4 L689.4 1241.4 L705.6 1229.4 L712.5 1216.9 L717.1 1219.2 L725.5 1240.1 L733.3 1241.4 L740.3 1230.8 L751.8 1210.9 L758.8 1184.5 L765.7 1172.0 L771.7 1189.2 L776.3 1199.8 L781.9 1205.4 L791.2 1210.0 L802.7 1220.2 L807.3 1213.7 L815.2 1220.2 L825.9 1213.7 L835.1 1212.3 L846.7 1219.2 L858.2 1216.9 L869.8 1221.6 L874.4 1233.1 L879.1 1230.8 L883.7 1240.1 L890.6 1226.2 L897.6 1212.3 L905.9 1215.5 L910.5 981.0 L925.3 982.4 L950.8 985.6 L960.0 983.3" stroke="#d8d8d8" stroke-width="1.6" fill="none" stroke-linejoin="round" />
<path d="M969.3 983.3 L994.7 982.4 L1041.0 981.4 L1078.0 983.3 L1103.5 988.8 L1140.0 987.0 L1140.2 987.0 L1143.9 986.1 L1153.1 989.3 L1171.6 988.8 L1176.3 999.9 L1222.5 1000.9 L1291.9 997.2 L1315.1 999.5 L1375.2 999.5 L1389.1 995.8 L1416.9 998.5 L1463.1 994.8 L1472.4 996.2 L1518.6 994.8 L1527.9 990.2 L1546.4 991.6 L1571.8 982.4 L1592.7 989.3 L1620.4 987.9 L1643.6 984.7 L1666.7 985.6" stroke="#d8d8d8" stroke-width="1.6" fill="none" stroke-linejoin="round" />
<path d="M1678.3 985.6 L1703.7 990.2 L1722.2 987.9 L1750.0 993.9 L1773.1 992.5 L1782.4 990.7 L1794.4 990.7" stroke="#d8d8d8" stroke-width="1.6" fill="none" stroke-linejoin="round" />
<rect x="8.0" y="1277.5" width="2256.0" height="1.5" fill="#840000" />
<rect x="8.0" y="1308.0" width="2256.0" height="1.5" fill="#840000" />
<line x1="65.0" y1="1278.5" x2="65.0" y2="1308.0" stroke="#840000" stroke-width="1.5" />
<line x1="139.0" y1="1278.5" x2="139.0" y2="1308.0" stroke="#840000" stroke-width="1.5" />
<line x1="269.0" y1="1278.5" x2="269.0" y2="1308.0" stroke="#840000" stroke-width="1.5" />
<line x1="380.0" y1="1278.5" x2="380.0" y2="1308.0" stroke="#840000" stroke-width="1.5" />
<line x1="437.0" y1="1278.5" x2="437.0" y2="1308.0" stroke="#840000" stroke-width="1.5" />
<line x1="530.0" y1="1278.5" x2="530.0" y2="1308.0" stroke="#840000" stroke-width="1.5" />
<line x1="605.0" y1="1278.5" x2="605.0" y2="1308.0" stroke="#840000" stroke-width="1.5" />
<line x1="662.0" y1="1278.5" x2="662.0" y2="1308.0" stroke="#840000" stroke-width="1.5" />
<line x1="718.0" y1="1278.5" x2="718.0" y2="1308.0" stroke="#840000" stroke-width="1.5" />
<line x1="845.0" y1="1278.5" x2="845.0" y2="1308.0" stroke="#840000" stroke-width="1.5" />
<line x1="955.0" y1="1278.5" x2="955.0" y2="1308.0" stroke="#840000" stroke-width="1.5" />
<rect x="955.0" y="1278.5" width="114.0" height="30.0" fill="#840000" />
<line x1="1069.0" y1="1278.5" x2="1069.0" y2="1308.0" stroke="#840000" stroke-width="1.5" />
<line x1="1216.0" y1="1278.5" x2="1216.0" y2="1308.0" stroke="#840000" stroke-width="1.5" />
<line x1="1345.0" y1="1278.5" x2="1345.0" y2="1308.0" stroke="#840000" stroke-width="1.5" />
<line x1="1510.0" y1="1278.5" x2="1510.0" y2="1308.0" stroke="#840000" stroke-width="1.5" />
<line x1="1585.0" y1="1278.5" x2="1585.0" y2="1308.0" stroke="#840000" stroke-width="1.5" />
<line x1="1696.0" y1="1278.5" x2="1696.0" y2="1308.0" stroke="#840000" stroke-width="1.5" />
<line x1="1807.0" y1="1278.5" x2="1807.0" y2="1308.0" stroke="#840000" stroke-width="1.5" />
<line x1="1900.0" y1="1278.5" x2="1900.0" y2="1308.0" stroke="#840000" stroke-width="1.5" />
<line x1="2017.0" y1="1278.5" x2="2017.0" y2="1308.0" stroke="#840000" stroke-width="1.5" />
<rect x="1906.0" y="1283.5" width="20.0" height="20.0" fill="#ee2222" />
<circle cx="59" cy="1284" r="2.8" fill="#ff2020"/>
<circle cx="1578" cy="1284" r="2.8" fill="#ff2020"/>
<rect x="2085.0" y="1308.7" width="98.5" height="28.5" fill="#000" stroke="#840000" stroke-width="1.5"/>
<line x1="8.0" y1="1339.5" x2="2183.5" y2="1339.5" stroke="#9a0000" stroke-width="1.3" stroke-dasharray="1.5 3"/>
<line x1="8.0" y1="1400.5" x2="2183.5" y2="1400.5" stroke="#9a0000" stroke-width="1.3" stroke-dasharray="1.5 3"/>
<line x1="8.0" y1="1462.0" x2="2183.5" y2="1462.0" stroke="#9a0000" stroke-width="1.3" stroke-dasharray="1.5 3"/>
<line x1="8.0" y1="1523.5" x2="2183.5" y2="1523.5" stroke="#9a0000" stroke-width="1.3" stroke-dasharray="1.5 3"/>
<text x="154" y="1529" font-size="20" fill="#2aa0d8" font-family="Liberation Sans, sans-serif">准备</text>
<text x="362" y="1529" font-size="20" fill="#2aa0d8" font-family="Liberation Sans, sans-serif">准备</text>
<text x="758" y="1529" font-size="20" fill="#2aa0d8" font-family="Liberation Sans, sans-serif">准备</text>
<text x="1170" y="1529" font-size="20" fill="#2aa0d8" font-family="Liberation Sans, sans-serif">准备</text>
<path d="M154.5 1469.5V1557.7 M157.8 1469.5V1557.7 M161.2 1469.5V1557.7 M164.5 1469.5V1557.7 M167.9 1469.5V1557.7 M171.2 1469.5V1557.7 M174.6 1469.5V1557.7 M177.9 1469.5V1557.7 M181.3 1469.5V1557.7 M184.6 1469.5V1557.7 M188.0 1469.5V1557.7 M191.3 1469.5V1557.7 M194.7 1469.5V1557.7 M198.0 1469.5V1557.7" stroke="#ff20ff" stroke-width="2.2" fill="none"/>
<path d="M218.0 1469.5V1557.7" stroke="#ff20ff" stroke-width="2.6" fill="none"/>
<path d="M276.0 1469.5V1557.7" stroke="#ff20ff" stroke-width="2.6" fill="none"/>
<path d="M375.0 1469.5V1557.7" stroke="#ff20ff" stroke-width="2.6" fill="none"/>
<path d="M361.5 1492.0V1557.7 M364.9 1492.0V1557.7 M368.2 1492.0V1557.7 M371.6 1492.0V1557.7" stroke="#ff1010" stroke-width="2.2" fill="none"/>
<path d="M222.5 1539.0V1557.7 M226.4 1539.0V1557.7 M230.3 1539.0V1557.7 M234.2 1539.0V1557.7 M238.1 1539.0V1557.7 M242.0 1539.0V1557.7 M245.9 1539.0V1557.7 M249.8 1539.0V1557.7 M253.7 1539.0V1557.7 M257.6 1539.0V1557.7 M261.5 1539.0V1557.7 M265.4 1539.0V1557.7 M269.3 1539.0V1557.7" stroke="#fff" stroke-width="2.4" fill="none"/>
<path d="M271.5 1522.0V1557.7" stroke="#fff" stroke-width="3" fill="none"/>
<path d="M415.5 1539.0V1557.7 M419.4 1539.0V1557.7 M423.3 1539.0V1557.7 M427.2 1539.0V1557.7 M431.1 1539.0V1557.7" stroke="#fff" stroke-width="2.4" fill="none"/>
<path d="M428.5 1522.0V1557.7 M432.4 1522.0V1557.7" stroke="#fff" stroke-width="2.4" fill="none"/>
<path d="M685.5 1539.0V1557.7 M689.4 1539.0V1557.7 M693.3 1539.0V1557.7 M697.2 1539.0V1557.7 M701.1 1539.0V1557.7 M705.0 1539.0V1557.7 M708.9 1539.0V1557.7 M712.8 1539.0V1557.7 M716.7 1539.0V1557.7" stroke="#fff" stroke-width="2.4" fill="none"/>
<path d="M716.5 1521.0V1557.7 M720.4 1521.0V1557.7" stroke="#fff" stroke-width="2.4" fill="none"/>
<path d="M757.0 1539.0V1557.7 M760.9 1539.0V1557.7" stroke="#fff" stroke-width="2.4" fill="none"/>
<path d="M766.5 1492.0V1557.7 M769.9 1492.0V1557.7 M773.2 1492.0V1557.7 M776.6 1492.0V1557.7" stroke="#ff1010" stroke-width="2.2" fill="none"/>
<path d="M1094.5 1539.0V1557.7 M1098.4 1539.0V1557.7 M1102.3 1539.0V1557.7 M1106.2 1539.0V1557.7 M1110.1 1539.0V1557.7 M1114.0 1539.0V1557.7 M1117.9 1539.0V1557.7 M1121.8 1539.0V1557.7 M1125.7 1539.0V1557.7 M1129.6 1539.0V1557.7 M1133.5 1539.0V1557.7 M1137.4 1539.0V1557.7" stroke="#fff" stroke-width="2.4" fill="none"/>
<path d="M1117.0 1521.0V1557.7 M1120.9 1521.0V1557.7" stroke="#fff" stroke-width="2.4" fill="none"/>
<path d="M1128.5 1521.0V1557.7 M1132.4 1521.0V1557.7" stroke="#fff" stroke-width="2.4" fill="none"/>
<path d="M1130.5 1521.0V1557.7 M1134.4 1521.0V1557.7 M1138.3 1521.0V1557.7" stroke="#fff" stroke-width="2.4" fill="none"/>
<path d="M1167.0 1540.0V1557.7" stroke="#fff" stroke-width="2.4" fill="none"/>
<path d="M1171.0 1469.5V1557.7 M1174.3 1469.5V1557.7" stroke="#ff20ff" stroke-width="2.4" fill="none"/>
<path d="M1206.5 1469.5V1557.7 M1209.8 1469.5V1557.7 M1213.2 1469.5V1557.7 M1216.5 1469.5V1557.7 M1219.9 1469.5V1557.7 M1223.2 1469.5V1557.7 M1226.6 1469.5V1557.7 M1229.9 1469.5V1557.7 M1233.3 1469.5V1557.7" stroke="#ff20ff" stroke-width="2.4" fill="none"/>
<path d="M1770.5 1539.0V1557.7 M1775.1 1539.0V1557.7" stroke="#fff" stroke-width="2.6" fill="none"/>
<path d="M10.0 1562.1 L14.0 1562.9 L18.0 1563.6 L22.0 1564.0 L26.0 1564.3 L30.0 1564.3 L34.0 1564.1 L38.0 1563.8 L42.0 1563.3 L46.0 1562.7 L50.0 1562.1 L54.0 1561.4 L58.0 1560.7 L62.0 1560.1 L66.0 1559.5 L70.0 1559.1 L74.0 1558.7 L78.0 1558.5 L82.0 1558.4 L86.0 1558.5 L90.0 1558.7 L94.0 1559.0 L98.0 1559.3 L102.0 1559.8 L106.0 1560.2 L110.0 1560.6 L114.0 1561.0 L118.0 1561.3 L122.0 1561.4 L126.0 1561.4 L130.0 1561.3 L134.0 1561.0 L138.0 1560.5 L142.0 1559.8 L146.0 1558.9 L150.0 1557.9 L154.0 1557.7 L158.0 1557.7 L162.0 1557.7 L166.0 1557.7 L170.0 1557.7 L174.0 1557.7 L178.0 1557.7 L182.0 1557.7 L186.0 1557.7 L190.0 1557.7 L194.0 1557.7 L198.0 1557.7 L202.0 1557.7 L206.0 1557.7 L210.0 1557.7 L214.0 1557.7 L218.0 1557.7 L222.0 1557.7 L226.0 1557.7 L230.0 1557.7 L234.0 1557.7 L238.0 1557.7 L242.0 1557.7 L246.0 1557.7 L250.0 1557.7 L254.0 1557.7 L258.0 1557.7 L262.0 1557.7 L266.0 1557.7 L270.0 1557.7 L274.0 1557.7 L278.0 1557.7 L282.0 1557.7 L286.0 1557.7 L290.0 1557.7 L294.0 1557.7 L298.0 1557.7 L302.0 1557.7 L306.0 1557.7 L310.0 1557.7 L314.0 1557.7 L318.0 1557.7 L322.0 1557.7 L326.0 1557.7 L330.0 1557.7 L334.0 1558.3 L338.0 1559.2 L342.0 1560.1 L346.0 1561.0 L350.0 1561.9 L354.0 1562.7 L358.0 1563.3 L362.0 1563.8 L366.0 1564.1 L370.0 1564.2 L374.0 1564.1 L378.0 1563.7 L382.0 1563.1 L386.0 1562.3 L390.0 1561.3 L394.0 1560.1 L398.0 1558.8 L402.0 1557.7 L406.0 1557.7 L410.0 1557.7 L414.0 1557.7 L418.0 1557.7 L422.0 1557.7 L426.0 1557.7 L430.0 1557.7 L434.0 1557.7 L438.0 1557.7 L442.0 1557.7 L446.0 1557.7 L450.0 1557.7 L454.0 1557.7 L458.0 1557.7 L462.0 1557.7 L466.0 1557.7 L470.0 1557.7 L474.0 1557.7 L478.0 1557.7 L482.0 1557.7 L486.0 1557.7 L490.0 1557.7 L494.0 1557.7 L498.0 1557.7 L502.0 1557.7 L506.0 1557.7 L510.0 1557.7 L514.0 1557.7 L518.0 1557.7 L522.0 1557.7 L526.0 1557.7 L530.0 1557.7 L534.0 1557.7 L538.0 1557.7 L542.0 1557.7 L546.0 1557.7 L550.0 1557.7 L554.0 1557.7 L558.0 1557.7 L562.0 1557.7 L566.0 1557.7 L570.0 1557.7 L574.0 1557.7 L578.0 1557.7 L582.0 1557.7 L586.0 1557.7 L590.0 1557.7 L594.0 1557.7 L598.0 1557.7 L602.0 1557.7 L606.0 1557.9 L610.0 1558.7 L614.0 1559.3 L618.0 1559.7 L622.0 1559.9 L626.0 1559.8 L630.0 1559.5 L634.0 1559.1 L638.0 1558.6 L642.0 1557.9 L646.0 1557.7 L650.0 1557.7 L654.0 1557.7 L658.0 1557.7 L662.0 1557.7 L666.0 1557.7 L670.0 1557.7 L674.0 1557.7 L678.0 1557.7 L682.0 1557.7 L686.0 1557.7 L690.0 1557.7 L694.0 1557.7 L698.0 1557.7 L702.0 1557.7 L706.0 1557.7 L710.0 1557.7 L714.0 1557.7 L718.0 1557.7 L722.0 1557.7 L726.0 1557.7 L730.0 1557.7 L734.0 1557.7 L738.0 1557.7 L742.0 1557.7 L746.0 1557.7 L750.0 1557.7 L754.0 1557.7 L758.0 1557.7 L762.0 1557.7 L766.0 1557.7 L770.0 1557.7 L774.0 1557.7 L778.0 1557.7 L782.0 1557.7 L786.0 1557.7 L790.0 1557.7 L794.0 1557.7 L798.0 1557.7 L802.0 1557.7 L806.0 1557.7 L810.0 1557.7 L814.0 1557.7 L818.0 1557.7 L822.0 1557.7 L826.0 1557.7 L830.0 1557.7 L834.0 1557.7 L838.0 1557.7 L842.0 1557.7 L846.0 1557.7 L850.0 1557.7 L854.0 1557.7 L858.0 1557.7 L862.0 1557.8 L866.0 1558.0 L870.0 1558.1 L874.0 1558.0 L878.0 1557.9 L882.0 1557.7 L886.0 1557.7 L890.0 1557.7 L894.0 1557.7 L898.0 1557.7 L902.0 1557.7 L906.0 1557.7 L910.0 1557.7 L914.0 1557.7 L918.0 1558.2 L922.0 1558.9 L926.0 1559.7 L930.0 1560.6 L934.0 1561.5 L938.0 1562.5 L942.0 1563.5 L946.0 1564.5 L950.0 1565.3 L954.0 1566.0 L958.0 1566.6 L962.0 1567.0 L966.0 1567.2 L970.0 1567.2 L974.0 1566.9 L978.0 1566.4 L982.0 1565.7 L986.0 1564.8 L990.0 1563.7 L994.0 1562.5 L998.0 1561.1 L1002.0 1559.7 L1006.0 1558.2 L1010.0 1557.7 L1014.0 1557.7 L1018.0 1557.7 L1022.0 1557.7 L1026.0 1557.7 L1030.0 1557.7 L1034.0 1557.7 L1038.0 1557.7 L1042.0 1557.7 L1046.0 1557.7 L1050.0 1557.7 L1054.0 1557.7 L1058.0 1557.7 L1062.0 1557.7 L1066.0 1557.7 L1070.0 1557.7 L1074.0 1557.7 L1078.0 1557.7 L1082.0 1557.7 L1086.0 1557.7 L1090.0 1557.7 L1094.0 1557.7 L1098.0 1557.7 L1102.0 1557.7 L1106.0 1557.7 L1110.0 1557.7 L1114.0 1557.7 L1118.0 1557.7 L1122.0 1557.7 L1126.0 1557.7 L1130.0 1557.7 L1134.0 1557.7 L1138.0 1557.7 L1142.0 1557.7 L1146.0 1557.7 L1150.0 1557.7 L1154.0 1557.7 L1158.0 1557.7 L1162.0 1557.7 L1166.0 1557.7 L1170.0 1557.7 L1174.0 1557.7 L1178.0 1557.7 L1182.0 1557.7 L1186.0 1557.7 L1190.0 1558.7 L1194.0 1559.8 L1198.0 1560.9 L1202.0 1561.7 L1206.0 1562.4 L1210.0 1562.8 L1214.0 1563.1 L1218.0 1563.0 L1222.0 1562.8 L1226.0 1562.4 L1230.0 1561.8 L1234.0 1561.0 L1238.0 1560.1 L1242.0 1559.2 L1246.0 1558.2 L1250.0 1557.7 L1254.0 1557.7 L1258.0 1557.7 L1262.0 1557.7 L1266.0 1557.7 L1270.0 1557.7 L1274.0 1557.7 L1278.0 1557.7 L1282.0 1557.7 L1286.0 1557.7 L1290.0 1557.7 L1294.0 1557.7 L1298.0 1557.7 L1302.0 1557.7 L1306.0 1557.7 L1310.0 1557.7 L1314.0 1557.7 L1318.0 1557.7 L1322.0 1557.7 L1326.0 1557.7 L1330.0 1557.7 L1334.0 1557.7 L1338.0 1557.7 L1342.0 1557.7 L1346.0 1557.7 L1350.0 1557.7 L1354.0 1557.7 L1358.0 1557.7 L1362.0 1557.7 L1366.0 1557.7 L1370.0 1557.7 L1374.0 1557.7 L1378.0 1557.7 L1382.0 1557.7 L1386.0 1557.7 L1390.0 1557.7 L1394.0 1557.7 L1398.0 1557.7 L1402.0 1557.7 L1406.0 1557.7 L1410.0 1557.7 L1414.0 1557.7 L1418.0 1557.7 L1422.0 1557.7 L1426.0 1557.7 L1430.0 1557.7 L1434.0 1557.7 L1438.0 1557.7 L1442.0 1557.7 L1446.0 1557.7 L1450.0 1557.7 L1454.0 1557.7 L1458.0 1557.7 L1462.0 1557.7 L1466.0 1557.7 L1470.0 1557.7 L1474.0 1557.7 L1478.0 1557.7 L1482.0 1557.7 L1486.0 1557.7 L1490.0 1557.7 L1494.0 1557.7 L1498.0 1557.7 L1502.0 1557.7 L1506.0 1557.7 L1510.0 1557.7 L1514.0 1557.7 L1518.0 1557.7 L1522.0 1557.7 L1526.0 1557.7 L1530.0 1557.7 L1534.0 1557.7 L1538.0 1558.3 L1542.0 1559.2 L1546.0 1560.1 L1550.0 1560.8 L1554.0 1561.5 L1558.0 1561.9 L1562.0 1562.2 L1566.0 1562.2 L1570.0 1562.0 L1574.0 1561.6 L1578.0 1561.0 L1582.0 1560.1 L1586.0 1559.1 L1590.0 1558.0 L1594.0 1557.7 L1598.0 1557.7 L1602.0 1557.7 L1606.0 1557.7 L1610.0 1557.7 L1614.0 1557.7 L1618.0 1557.7 L1622.0 1557.7 L1626.0 1557.7 L1630.0 1557.7 L1634.0 1557.7 L1638.0 1557.7 L1642.0 1557.7 L1646.0 1557.7 L1650.0 1557.7 L1654.0 1557.7 L1658.0 1557.7 L1662.0 1557.7 L1666.0 1557.7 L1670.0 1557.7 L1674.0 1557.7 L1678.0 1557.7 L1682.0 1557.7 L1686.0 1557.7 L1690.0 1557.7 L1694.0 1557.7 L1698.0 1557.7 L1702.0 1557.7 L1706.0 1557.7 L1710.0 1557.7 L1714.0 1557.7 L1718.0 1557.7 L1722.0 1557.7 L1726.0 1557.7 L1730.0 1557.7 L1734.0 1557.7 L1738.0 1557.7 L1742.0 1557.7 L1746.0 1557.7 L1750.0 1557.7 L1754.0 1557.7 L1758.0 1557.7 L1762.0 1557.7 L1766.0 1557.7 L1770.0 1557.7 L1774.0 1558.2 L1778.0 1559.6 L1782.0 1561.1 L1786.0 1562.5 L1790.0 1563.7" stroke="#1030ff" stroke-width="1.4" fill="none" stroke-linejoin="round" />
<path d="M10.0 1560.5 L14.0 1560.0 L18.0 1559.6 L22.0 1559.2 L26.0 1558.8 L30.0 1558.5 L34.0 1558.3 L38.0 1558.2 L42.0 1558.1 L46.0 1558.1 L50.0 1558.2 L54.0 1558.3 L58.0 1558.5 L62.0 1558.7 L66.0 1558.8 L70.0 1559.0 L74.0 1559.1 L78.0 1559.1 L82.0 1559.1 L86.0 1558.9 L90.0 1558.7 L94.0 1558.4 L98.0 1558.0 L102.0 1557.7 L106.0 1557.7 L110.0 1557.7 L114.0 1557.7 L118.0 1557.7 L122.0 1557.7 L126.0 1557.7 L130.0 1557.7 L134.0 1557.7 L138.0 1557.7 L142.0 1557.7 L146.0 1557.7 L150.0 1557.7 L154.0 1557.7 L158.0 1557.7 L162.0 1557.7 L166.0 1557.7 L170.0 1557.7 L174.0 1557.7 L178.0 1557.7 L182.0 1557.7 L186.0 1557.7 L190.0 1557.7 L194.0 1557.7 L198.0 1557.7 L202.0 1557.7 L206.0 1557.7 L210.0 1557.7 L214.0 1557.7 L218.0 1557.7 L222.0 1557.7 L226.0 1557.7 L230.0 1557.7 L234.0 1557.7 L238.0 1557.7 L242.0 1557.7 L246.0 1557.7 L250.0 1557.7 L254.0 1557.7 L258.0 1557.7 L262.0 1557.7 L266.0 1557.7 L270.0 1557.7 L274.0 1557.7 L278.0 1557.7 L282.0 1557.7 L286.0 1557.7 L290.0 1557.7 L294.0 1557.7 L298.0 1557.7 L302.0 1558.2 L306.0 1558.6 L310.0 1559.0 L314.0 1559.4 L318.0 1559.6 L322.0 1559.7 L326.0 1559.8 L330.0 1559.7 L334.0 1559.4 L338.0 1559.1 L342.0 1558.6 L346.0 1558.0 L350.0 1557.7 L354.0 1557.7 L358.0 1557.7 L362.0 1557.7 L366.0 1557.7 L370.0 1557.7 L374.0 1557.7 L378.0 1557.7 L382.0 1557.7 L386.0 1557.7 L390.0 1557.7 L394.0 1557.7 L398.0 1557.7 L402.0 1557.7 L406.0 1557.7 L410.0 1557.7 L414.0 1557.7 L418.0 1557.7 L422.0 1557.7 L426.0 1557.7 L430.0 1557.7 L434.0 1557.7 L438.0 1557.7 L442.0 1557.7 L446.0 1557.7 L450.0 1557.7 L454.0 1557.7 L458.0 1557.7 L462.0 1557.7 L466.0 1557.7 L470.0 1557.7 L474.0 1557.7 L478.0 1557.7 L482.0 1557.7 L486.0 1557.7 L490.0 1557.7 L494.0 1557.7 L498.0 1557.7 L502.0 1557.7 L506.0 1557.7 L510.0 1557.7 L514.0 1557.7 L518.0 1557.7 L522.0 1557.7 L526.0 1557.7 L530.0 1557.7 L534.0 1557.7 L538.0 1557.7 L542.0 1557.7 L546.0 1557.7 L550.0 1557.7 L554.0 1557.9 L558.0 1558.6 L562.0 1559.2 L566.0 1559.6 L570.0 1560.0 L574.0 1560.2 L578.0 1560.2 L582.0 1560.2 L586.0 1560.0 L590.0 1559.8 L594.0 1559.4 L598.0 1559.0 L602.0 1558.6 L606.0 1558.1 L610.0 1557.7 L614.0 1557.7 L618.0 1557.7 L622.0 1557.7 L626.0 1557.7 L630.0 1557.7 L634.0 1557.7 L638.0 1557.7 L642.0 1557.7 L646.0 1557.7 L650.0 1557.7 L654.0 1557.7 L658.0 1557.7 L662.0 1557.7 L666.0 1557.7 L670.0 1557.7 L674.0 1557.7 L678.0 1557.7 L682.0 1557.7 L686.0 1557.7 L690.0 1557.7 L694.0 1557.7 L698.0 1557.7 L702.0 1557.7 L706.0 1557.7 L710.0 1557.7 L714.0 1557.7 L718.0 1557.7 L722.0 1557.7 L726.0 1557.7 L730.0 1557.7 L734.0 1557.7 L738.0 1557.7 L742.0 1557.7 L746.0 1557.7 L750.0 1557.7 L754.0 1557.7 L758.0 1557.7 L762.0 1557.7 L766.0 1557.7 L770.0 1557.7 L774.0 1557.7 L778.0 1557.7 L782.0 1557.7 L786.0 1557.7 L790.0 1557.7 L794.0 1557.7 L798.0 1557.7 L802.0 1557.9 L806.0 1558.4 L810.0 1558.8 L814.0 1559.1 L818.0 1559.2 L822.0 1559.3 L826.0 1559.3 L830.0 1559.3 L834.0 1559.1 L838.0 1559.0 L842.0 1558.8 L846.0 1558.6 L850.0 1558.4 L854.0 1558.3 L858.0 1558.2 L862.0 1558.2 L866.0 1558.2 L870.0 1558.4 L874.0 1558.6 L878.0 1558.9 L882.0 1559.2 L886.0 1559.6 L890.0 1560.1 L894.0 1560.5 L898.0 1561.0 L902.0 1561.4 L906.0 1561.8 L910.0 1562.1 L914.0 1562.4 L918.0 1562.5 L922.0 1562.5 L926.0 1562.4 L930.0 1562.2 L934.0 1561.8 L938.0 1561.3 L942.0 1560.7 L946.0 1560.0 L950.0 1559.3 L954.0 1558.4 L958.0 1557.7 L962.0 1557.7 L966.0 1557.7 L970.0 1557.7 L974.0 1557.7 L978.0 1557.7 L982.0 1557.7 L986.0 1557.7 L990.0 1557.7 L994.0 1557.7 L998.0 1557.7 L1002.0 1557.7 L1006.0 1557.7 L1010.0 1557.7 L1014.0 1557.7 L1018.0 1557.7 L1022.0 1557.7 L1026.0 1557.7 L1030.0 1557.7 L1034.0 1557.7 L1038.0 1557.7 L1042.0 1557.7 L1046.0 1557.7 L1050.0 1557.7 L1054.0 1557.7 L1058.0 1557.7 L1062.0 1557.7 L1066.0 1557.7 L1070.0 1557.7 L1074.0 1557.7 L1078.0 1557.7 L1082.0 1557.7 L1086.0 1557.7 L1090.0 1557.7 L1094.0 1557.7 L1098.0 1557.7 L1102.0 1557.7 L1106.0 1557.7 L1110.0 1557.7 L1114.0 1557.7 L1118.0 1557.7 L1122.0 1557.7 L1126.0 1557.7 L1130.0 1557.7 L1134.0 1557.7 L1138.0 1557.7 L1142.0 1557.7 L1146.0 1557.7 L1150.0 1558.0 L1154.0 1558.6 L1158.0 1559.1 L1162.0 1559.4 L1166.0 1559.7 L1170.0 1559.8 L1174.0 1559.8 L1178.0 1559.6 L1182.0 1559.3 L1186.0 1559.0 L1190.0 1558.5 L1194.0 1558.0 L1198.0 1557.7 L1202.0 1557.7 L1206.0 1557.7 L1210.0 1557.7 L1214.0 1557.7 L1218.0 1557.7 L1222.0 1557.7 L1226.0 1557.7 L1230.0 1557.7 L1234.0 1557.7 L1238.0 1557.7 L1242.0 1557.7 L1246.0 1557.7 L1250.0 1557.7 L1254.0 1557.7 L1258.0 1557.7 L1262.0 1557.7 L1266.0 1557.7 L1270.0 1557.7 L1274.0 1557.7 L1278.0 1557.7 L1282.0 1557.7 L1286.0 1557.7 L1290.0 1557.7 L1294.0 1557.7 L1298.0 1557.7 L1302.0 1557.7 L1306.0 1557.7 L1310.0 1557.7 L1314.0 1557.7 L1318.0 1557.7 L1322.0 1557.7 L1326.0 1557.7 L1330.0 1557.7 L1334.0 1557.7 L1338.0 1557.7 L1342.0 1557.7 L1346.0 1557.7 L1350.0 1557.7 L1354.0 1557.7 L1358.0 1557.7 L1362.0 1557.7 L1366.0 1557.7 L1370.0 1557.7 L1374.0 1557.7 L1378.0 1557.7 L1382.0 1557.7 L1386.0 1557.7 L1390.0 1557.7 L1394.0 1557.7 L1398.0 1557.7 L1402.0 1557.7 L1406.0 1557.7 L1410.0 1557.7 L1414.0 1557.7 L1418.0 1557.7 L1422.0 1557.7 L1426.0 1557.7 L1430.0 1557.7 L1434.0 1557.7 L1438.0 1557.7 L1442.0 1557.7 L1446.0 1557.7 L1450.0 1557.7 L1454.0 1557.7 L1458.0 1557.7 L1462.0 1557.7 L1466.0 1557.7 L1470.0 1557.7 L1474.0 1557.7 L1478.0 1557.7 L1482.0 1558.0 L1486.0 1558.4 L1490.0 1558.9 L1494.0 1559.4 L1498.0 1559.9 L1502.0 1560.4 L1506.0 1560.7 L1510.0 1561.0 L1514.0 1561.2 L1518.0 1561.3 L1522.0 1561.3 L1526.0 1561.2 L1530.0 1560.9 L1534.0 1560.5 L1538.0 1560.0 L1542.0 1559.4 L1546.0 1558.7 L1550.0 1558.0 L1554.0 1557.7 L1558.0 1557.7 L1562.0 1557.7 L1566.0 1557.7 L1570.0 1557.7 L1574.0 1557.7 L1578.0 1557.7 L1582.0 1557.7 L1586.0 1557.7 L1590.0 1557.7 L1594.0 1557.7 L1598.0 1557.7 L1602.0 1557.7 L1606.0 1557.7 L1610.0 1557.7 L1614.0 1557.7 L1618.0 1557.7 L1622.0 1557.7 L1626.0 1557.7 L1630.0 1557.7 L1634.0 1557.7 L1638.0 1557.7 L1642.0 1557.7 L1646.0 1557.7 L1650.0 1557.7 L1654.0 1557.7 L1658.0 1557.7 L1662.0 1557.7 L1666.0 1557.7 L1670.0 1557.7 L1674.0 1557.7 L1678.0 1557.7 L1682.0 1557.7 L1686.0 1557.7 L1690.0 1557.7 L1694.0 1557.7 L1698.0 1557.7 L1702.0 1557.7 L1706.0 1557.7 L1710.0 1557.7 L1714.0 1557.7 L1718.0 1557.7 L1722.0 1557.7 L1726.0 1557.7 L1730.0 1558.4 L1734.0 1559.2 L1738.0 1559.9 L1742.0 1560.6 L1746.0 1561.3 L1750.0 1561.9 L1754.0 1562.3 L1758.0 1562.7 L1762.0 1562.9 L1766.0 1563.0 L1770.0 1562.9 L1774.0 1562.8 L1778.0 1562.5 L1782.0 1562.1 L1786.0 1561.6 L1790.0 1561.0" stroke="#00d000" stroke-width="1.4" fill="none" stroke-linejoin="round" />
<path d="M10.0 1557.7 L14.0 1557.7 L18.0 1557.7 L22.0 1557.7 L26.0 1557.7 L30.0 1557.7 L34.0 1557.7 L38.0 1557.6 L42.0 1557.5 L46.0 1557.5 L50.0 1557.5 L54.0 1557.7 L58.0 1557.7 L62.0 1557.7 L66.0 1557.7 L70.0 1557.7 L74.0 1557.7 L78.0 1557.7 L82.0 1557.7 L86.0 1557.7 L90.0 1557.7 L94.0 1557.7 L98.0 1557.7 L102.0 1557.7 L106.0 1557.7 L110.0 1557.7 L114.0 1557.7 L118.0 1557.7 L122.0 1557.7 L126.0 1557.7 L130.0 1557.7 L134.0 1557.7 L138.0 1557.7 L142.0 1557.7 L146.0 1557.7 L150.0 1557.7 L154.0 1557.7 L158.0 1557.7 L162.0 1557.7 L166.0 1557.7 L170.0 1557.7 L174.0 1557.7 L178.0 1557.7 L182.0 1557.7 L186.0 1557.7 L190.0 1557.7 L194.0 1557.7 L198.0 1557.7 L202.0 1557.7 L206.0 1557.7 L210.0 1557.7 L214.0 1557.7 L218.0 1557.7 L222.0 1557.7 L226.0 1557.7 L230.0 1557.7 L234.0 1557.7 L238.0 1557.7 L242.0 1557.7 L246.0 1557.7 L250.0 1557.7 L254.0 1557.7 L258.0 1557.7 L262.0 1557.7 L266.0 1557.7 L270.0 1557.7 L274.0 1557.5 L278.0 1557.1 L282.0 1556.8 L286.0 1556.6 L290.0 1556.5 L294.0 1556.5 L298.0 1556.6 L302.0 1556.8 L306.0 1557.2 L310.0 1557.6 L314.0 1557.7 L318.0 1557.7 L322.0 1557.7 L326.0 1557.7 L330.0 1557.7 L334.0 1557.7 L338.0 1557.7 L342.0 1557.7 L346.0 1557.7 L350.0 1557.7 L354.0 1557.7 L358.0 1557.7 L362.0 1557.7 L366.0 1557.7 L370.0 1557.7 L374.0 1557.7 L378.0 1557.7 L382.0 1557.7 L386.0 1557.7 L390.0 1557.7 L394.0 1557.7 L398.0 1557.7 L402.0 1557.7 L406.0 1557.7 L410.0 1557.7 L414.0 1557.7 L418.0 1557.7 L422.0 1557.7 L426.0 1557.7 L430.0 1557.7 L434.0 1557.7 L438.0 1557.7 L442.0 1557.7 L446.0 1557.7 L450.0 1557.7 L454.0 1557.7 L458.0 1557.7 L462.0 1557.7 L466.0 1557.7 L470.0 1557.7 L474.0 1557.7 L478.0 1557.7 L482.0 1557.7 L486.0 1557.7 L490.0 1557.7 L494.0 1557.7 L498.0 1557.7 L502.0 1557.7 L506.0 1557.7 L510.0 1557.7 L514.0 1557.7 L518.0 1556.8 L522.0 1556.1 L526.0 1555.4 L530.0 1554.9 L534.0 1554.4 L538.0 1554.1 L542.0 1553.9 L546.0 1553.9 L550.0 1554.0 L554.0 1554.2 L558.0 1554.5 L562.0 1554.8 L566.0 1555.3 L570.0 1555.8 L574.0 1556.3 L578.0 1556.8 L582.0 1557.3 L586.0 1557.7 L590.0 1557.7 L594.0 1557.7 L598.0 1557.7 L602.0 1557.7 L606.0 1557.7 L610.0 1557.7 L614.0 1557.7 L618.0 1557.7 L622.0 1557.7 L626.0 1557.7 L630.0 1557.7 L634.0 1557.7 L638.0 1557.7 L642.0 1557.7 L646.0 1557.6 L650.0 1557.7 L654.0 1557.7 L658.0 1557.7 L662.0 1557.7 L666.0 1557.7 L670.0 1557.7 L674.0 1557.7 L678.0 1557.7 L682.0 1557.7 L686.0 1557.7 L690.0 1557.7 L694.0 1557.7 L698.0 1557.7 L702.0 1557.7 L706.0 1557.7 L710.0 1557.7 L714.0 1557.7 L718.0 1557.7 L722.0 1557.7 L726.0 1557.7 L730.0 1557.7 L734.0 1557.7 L738.0 1557.7 L742.0 1557.7 L746.0 1557.7 L750.0 1557.7 L754.0 1557.7 L758.0 1557.7 L762.0 1557.7 L766.0 1557.6 L770.0 1557.0 L774.0 1556.5 L778.0 1556.2 L782.0 1555.9 L786.0 1555.7 L790.0 1555.7 L794.0 1555.7 L798.0 1555.8 L802.0 1556.0 L806.0 1556.2 L810.0 1556.5 L814.0 1556.7 L818.0 1557.0 L822.0 1557.1 L826.0 1557.3 L830.0 1557.4 L834.0 1557.4 L838.0 1557.3 L842.0 1557.2 L846.0 1557.0 L850.0 1556.7 L854.0 1556.4 L858.0 1556.0 L862.0 1555.6 L866.0 1555.2 L870.0 1554.8 L874.0 1554.5 L878.0 1554.2 L882.0 1554.1 L886.0 1554.0 L890.0 1554.0 L894.0 1554.2 L898.0 1554.4 L902.0 1554.9 L906.0 1555.4 L910.0 1556.0 L914.0 1556.7 L918.0 1557.6 L922.0 1557.7 L926.0 1557.7 L930.0 1557.7 L934.0 1557.7 L938.0 1557.7 L942.0 1557.7 L946.0 1557.7 L950.0 1557.7 L954.0 1557.7 L958.0 1557.7 L962.0 1557.7 L966.0 1557.7 L970.0 1557.7 L974.0 1557.7 L978.0 1557.7 L982.0 1557.7 L986.0 1557.7 L990.0 1557.7 L994.0 1557.7 L998.0 1557.7 L1002.0 1557.7 L1006.0 1557.7 L1010.0 1557.7 L1014.0 1557.7 L1018.0 1557.7 L1022.0 1557.7 L1026.0 1557.7 L1030.0 1557.7 L1034.0 1557.7 L1038.0 1557.7 L1042.0 1557.7 L1046.0 1557.7 L1050.0 1557.7 L1054.0 1557.7 L1058.0 1557.7 L1062.0 1557.7 L1066.0 1557.7 L1070.0 1557.7 L1074.0 1557.7 L1078.0 1557.7 L1082.0 1557.7 L1086.0 1557.7 L1090.0 1557.7 L1094.0 1557.7 L1098.0 1557.7 L1102.0 1557.7 L1106.0 1557.7 L1110.0 1557.7 L1114.0 1557.7 L1118.0 1557.6 L1122.0 1557.0 L1126.0 1556.6 L1130.0 1556.2 L1134.0 1556.0 L1138.0 1555.9 L1142.0 1555.9 L1146.0 1556.1 L1150.0 1556.3 L1154.0 1556.7 L1158.0 1557.2 L1162.0 1557.7 L1166.0 1557.7 L1170.0 1557.7 L1174.0 1557.7 L1178.0 1557.7 L1182.0 1557.7 L1186.0 1557.7 L1190.0 1557.7 L1194.0 1557.7 L1198.0 1557.7 L1202.0 1557.7 L1206.0 1557.7 L1210.0 1557.7 L1214.0 1557.7 L1218.0 1557.7 L1222.0 1557.7 L1226.0 1557.7 L1230.0 1557.7 L1234.0 1557.7 L1238.0 1557.7 L1242.0 1557.7 L1246.0 1557.7 L1250.0 1557.7 L1254.0 1557.7 L1258.0 1557.7 L1262.0 1557.7 L1266.0 1557.7 L1270.0 1557.7 L1274.0 1557.7 L1278.0 1557.7 L1282.0 1557.7 L1286.0 1557.7 L1290.0 1557.7 L1294.0 1557.7 L1298.0 1557.7 L1302.0 1557.7 L1306.0 1557.7 L1310.0 1557.7 L1314.0 1557.7 L1318.0 1557.7 L1322.0 1557.7 L1326.0 1557.7 L1330.0 1557.7 L1334.0 1557.7 L1338.0 1557.7 L1342.0 1557.7 L1346.0 1557.7 L1350.0 1557.7 L1354.0 1557.7 L1358.0 1557.7 L1362.0 1557.7 L1366.0 1557.7 L1370.0 1557.7 L1374.0 1557.4 L1378.0 1557.0 L1382.0 1556.8 L1386.0 1556.6 L1390.0 1556.6 L1394.0 1556.6 L1398.0 1556.7 L1402.0 1556.8 L1406.0 1557.0 L1410.0 1557.2 L1414.0 1557.4 L1418.0 1557.5 L1422.0 1557.6 L1426.0 1557.7 L1430.0 1557.7 L1434.0 1557.6 L1438.0 1557.4 L1442.0 1557.1 L1446.0 1556.8 L1450.0 1556.4 L1454.0 1556.0 L1458.0 1555.6 L1462.0 1555.1 L1466.0 1554.7 L1470.0 1554.3 L1474.0 1554.0 L1478.0 1553.8 L1482.0 1553.6 L1486.0 1553.6 L1490.0 1553.6 L1494.0 1553.8 L1498.0 1554.1 L1502.0 1554.6 L1506.0 1555.1 L1510.0 1555.8 L1514.0 1556.5 L1518.0 1557.3 L1522.0 1557.7 L1526.0 1557.7 L1530.0 1557.7 L1534.0 1557.7 L1538.0 1557.7 L1542.0 1557.7 L1546.0 1557.7 L1550.0 1557.7 L1554.0 1557.7 L1558.0 1557.7 L1562.0 1557.7 L1566.0 1557.7 L1570.0 1557.7 L1574.0 1557.7 L1578.0 1557.7 L1582.0 1557.7 L1586.0 1557.7 L1590.0 1557.7 L1594.0 1557.7 L1598.0 1557.7 L1602.0 1557.7 L1606.0 1557.7 L1610.0 1557.7 L1614.0 1557.7 L1618.0 1557.7 L1622.0 1557.7 L1626.0 1557.7 L1630.0 1557.7 L1634.0 1557.7 L1638.0 1557.7 L1642.0 1557.7 L1646.0 1557.7 L1650.0 1557.7 L1654.0 1557.7 L1658.0 1557.7 L1662.0 1557.7 L1666.0 1557.7 L1670.0 1557.7 L1674.0 1557.7 L1678.0 1557.7 L1682.0 1557.7 L1686.0 1557.7 L1690.0 1557.7 L1694.0 1557.7 L1698.0 1557.3 L1702.0 1556.6 L1706.0 1555.9 L1710.0 1555.3 L1714.0 1554.7 L1718.0 1554.1 L1722.0 1553.7 L1726.0 1553.4 L1730.0 1553.3 L1734.0 1553.2 L1738.0 1553.3 L1742.0 1553.6 L1746.0 1553.9 L1750.0 1554.4 L1754.0 1554.9 L1758.0 1555.6 L1762.0 1556.3 L1766.0 1557.0 L1770.0 1557.7 L1774.0 1557.7 L1778.0 1557.7 L1782.0 1557.7 L1786.0 1557.7 L1790.0 1557.7" stroke="#ff1010" stroke-width="1.4" fill="none" stroke-linejoin="round" />
<path d="M10.0 1557.7 L14.0 1557.7 L18.0 1557.7 L22.0 1557.7 L26.0 1557.7 L30.0 1557.7 L34.0 1557.7 L38.0 1557.7 L42.0 1557.7 L46.0 1557.7 L50.0 1557.7 L54.0 1557.7 L58.0 1557.7 L62.0 1557.7 L66.0 1557.7 L70.0 1557.7 L74.0 1557.7 L78.0 1557.7 L82.0 1557.7 L86.0 1557.7 L90.0 1557.7 L94.0 1557.7 L98.0 1557.7 L102.0 1557.7 L106.0 1557.7 L110.0 1557.7 L114.0 1557.7 L118.0 1557.7 L122.0 1557.7 L126.0 1557.7 L130.0 1557.7 L134.0 1557.7 L138.0 1557.7 L142.0 1557.7 L146.0 1557.7 L150.0 1557.7 L154.0 1557.7 L158.0 1557.7 L162.0 1557.7 L166.0 1557.7 L170.0 1557.7 L174.0 1557.7 L178.0 1557.7 L182.0 1557.7 L186.0 1557.7 L190.0 1557.7 L194.0 1557.7 L198.0 1557.7 L202.0 1557.0 L206.0 1556.2 L210.0 1555.5 L214.0 1555.0 L218.0 1554.7 L222.0 1554.7 L226.0 1554.9 L230.0 1555.4 L234.0 1556.2 L238.0 1557.2 L242.0 1557.7 L246.0 1557.7 L250.0 1557.7 L254.0 1557.7 L258.0 1557.7 L262.0 1557.7 L266.0 1557.7 L270.0 1557.7 L274.0 1557.7 L278.0 1557.7 L282.0 1557.7 L286.0 1557.7 L290.0 1557.7 L294.0 1557.7 L298.0 1557.7 L302.0 1557.7 L306.0 1557.7 L310.0 1557.7 L314.0 1557.7 L318.0 1557.7 L322.0 1557.7 L326.0 1557.7 L330.0 1557.7 L334.0 1557.7 L338.0 1557.7 L342.0 1557.7 L346.0 1557.7 L350.0 1557.7 L354.0 1557.7 L358.0 1557.7 L362.0 1557.7 L366.0 1557.7 L370.0 1557.7 L374.0 1557.7 L378.0 1557.7 L382.0 1557.7 L386.0 1557.7 L390.0 1557.7 L394.0 1557.7 L398.0 1557.7 L402.0 1557.7 L406.0 1557.7 L410.0 1557.7 L414.0 1557.7 L418.0 1557.7 L422.0 1557.7 L426.0 1557.7 L430.0 1556.4 L434.0 1554.6 L438.0 1552.8 L442.0 1551.1 L446.0 1549.5 L450.0 1548.0 L454.0 1546.8 L458.0 1545.8 L462.0 1545.1 L466.0 1544.6 L470.0 1544.5 L474.0 1544.7 L478.0 1545.2 L482.0 1545.9 L486.0 1546.9 L490.0 1548.1 L494.0 1549.4 L498.0 1550.8 L502.0 1552.3 L506.0 1553.8 L510.0 1555.2 L514.0 1556.5 L518.0 1557.7 L522.0 1557.7 L526.0 1557.7 L530.0 1557.7 L534.0 1557.7 L538.0 1557.7 L542.0 1557.7 L546.0 1557.7 L550.0 1557.7 L554.0 1557.7 L558.0 1557.7 L562.0 1557.7 L566.0 1557.7 L570.0 1557.7 L574.0 1557.7 L578.0 1557.7 L582.0 1557.7 L586.0 1557.7 L590.0 1557.7 L594.0 1557.7 L598.0 1557.7 L602.0 1557.7 L606.0 1557.7 L610.0 1557.7 L614.0 1557.7 L618.0 1557.7 L622.0 1557.7 L626.0 1557.7 L630.0 1557.7 L634.0 1557.7 L638.0 1557.7 L642.0 1557.7 L646.0 1557.7 L650.0 1557.7 L654.0 1557.7 L658.0 1557.7 L662.0 1557.7 L666.0 1557.7 L670.0 1557.7 L674.0 1557.7 L678.0 1557.7 L682.0 1557.7 L686.0 1557.7 L690.0 1557.7 L694.0 1557.7 L698.0 1557.7 L702.0 1556.7 L706.0 1556.0 L710.0 1555.5 L714.0 1555.3 L718.0 1555.3 L722.0 1555.5 L726.0 1555.9 L730.0 1556.5 L734.0 1557.2 L738.0 1557.7 L742.0 1557.7 L746.0 1557.7 L750.0 1557.7 L754.0 1557.7 L758.0 1557.7 L762.0 1557.7 L766.0 1557.7 L770.0 1557.7 L774.0 1557.7 L778.0 1557.7 L782.0 1557.7 L786.0 1557.7 L790.0 1557.7 L794.0 1557.7 L798.0 1557.5 L802.0 1557.0 L806.0 1556.5 L810.0 1556.3 L814.0 1556.2 L818.0 1556.4 L822.0 1556.8 L826.0 1557.5 L830.0 1557.7 L834.0 1557.7 L838.0 1557.7 L842.0 1557.7 L846.0 1557.7 L850.0 1557.7 L854.0 1557.7 L858.0 1557.7 L862.0 1557.7 L866.0 1557.7 L870.0 1557.7 L874.0 1557.7 L878.0 1557.7 L882.0 1557.7 L886.0 1557.7 L890.0 1557.7 L894.0 1557.7 L898.0 1557.7 L902.0 1557.7 L906.0 1557.7 L910.0 1557.7 L914.0 1557.7 L918.0 1557.7 L922.0 1557.7 L926.0 1557.7 L930.0 1557.7 L934.0 1557.7 L938.0 1557.7 L942.0 1557.7 L946.0 1557.7 L950.0 1557.7 L954.0 1557.7 L958.0 1557.7 L962.0 1557.7 L966.0 1557.7 L970.0 1557.7 L974.0 1557.7 L978.0 1557.7 L982.0 1557.7 L986.0 1557.7 L990.0 1557.7 L994.0 1557.7 L998.0 1557.7 L1002.0 1557.7 L1006.0 1557.7 L1010.0 1557.7 L1014.0 1557.7 L1018.0 1557.7 L1022.0 1557.7 L1026.0 1557.7 L1030.0 1557.7 L1034.0 1557.7 L1038.0 1557.4 L1042.0 1555.8 L1046.0 1554.3 L1050.0 1553.1 L1054.0 1552.0 L1058.0 1551.3 L1062.0 1550.8 L1066.0 1550.6 L1070.0 1550.7 L1074.0 1551.1 L1078.0 1551.8 L1082.0 1552.7 L1086.0 1553.9 L1090.0 1555.1 L1094.0 1556.5 L1098.0 1557.7 L1102.0 1557.7 L1106.0 1557.7 L1110.0 1557.7 L1114.0 1557.7 L1118.0 1557.7 L1122.0 1557.7 L1126.0 1557.7 L1130.0 1557.7 L1134.0 1557.7 L1138.0 1557.7 L1142.0 1557.7 L1146.0 1557.7 L1150.0 1557.7 L1154.0 1557.7 L1158.0 1557.7 L1162.0 1557.7 L1166.0 1557.7 L1170.0 1557.7 L1174.0 1557.7 L1178.0 1557.7 L1182.0 1557.7 L1186.0 1557.7 L1190.0 1557.7 L1194.0 1557.7 L1198.0 1557.7 L1202.0 1557.7 L1206.0 1557.7 L1210.0 1557.7 L1214.0 1557.7 L1218.0 1557.7 L1222.0 1557.7 L1226.0 1557.7 L1230.0 1557.7 L1234.0 1557.7 L1238.0 1557.7 L1242.0 1557.7 L1246.0 1557.7 L1250.0 1557.7 L1254.0 1557.7 L1258.0 1557.7 L1262.0 1557.7 L1266.0 1557.7 L1270.0 1557.7 L1274.0 1557.7 L1278.0 1557.7 L1282.0 1557.7 L1286.0 1555.9 L1290.0 1554.3 L1294.0 1552.9 L1298.0 1551.7 L1302.0 1550.8 L1306.0 1550.1 L1310.0 1549.7 L1314.0 1549.5 L1318.0 1549.6 L1322.0 1549.9 L1326.0 1550.3 L1330.0 1550.9 L1334.0 1551.6 L1338.0 1552.3 L1342.0 1553.0 L1346.0 1553.7 L1350.0 1554.2 L1354.0 1554.7 L1358.0 1555.0 L1362.0 1555.1 L1366.0 1555.1 L1370.0 1554.9 L1374.0 1554.6 L1378.0 1554.1 L1382.0 1553.5 L1386.0 1552.9 L1390.0 1552.3 L1394.0 1551.7 L1398.0 1551.1 L1402.0 1550.7 L1406.0 1550.4 L1410.0 1550.4 L1414.0 1550.5 L1418.0 1551.0 L1422.0 1551.6 L1426.0 1552.6 L1430.0 1553.8 L1434.0 1555.2 L1438.0 1556.8 L1442.0 1557.7 L1446.0 1557.7 L1450.0 1557.7 L1454.0 1557.7 L1458.0 1557.7 L1462.0 1557.7 L1466.0 1557.7 L1470.0 1557.7 L1474.0 1557.7 L1478.0 1557.7 L1482.0 1557.7 L1486.0 1557.7 L1490.0 1557.7 L1494.0 1557.7 L1498.0 1557.7 L1502.0 1557.7 L1506.0 1557.7 L1510.0 1557.7 L1514.0 1557.7 L1518.0 1557.7 L1522.0 1557.7 L1526.0 1557.7 L1530.0 1557.7 L1534.0 1557.7 L1538.0 1557.7 L1542.0 1557.7 L1546.0 1557.7 L1550.0 1557.7 L1554.0 1557.7 L1558.0 1557.7 L1562.0 1557.7 L1566.0 1557.7 L1570.0 1557.7 L1574.0 1557.7 L1578.0 1557.7 L1582.0 1557.7 L1586.0 1557.7 L1590.0 1557.7 L1594.0 1557.7 L1598.0 1557.7 L1602.0 1557.7 L1606.0 1557.7 L1610.0 1557.7 L1614.0 1557.7 L1618.0 1557.7 L1622.0 1557.7 L1626.0 1557.7 L1630.0 1557.7 L1634.0 1557.5 L1638.0 1556.2 L1642.0 1555.0 L1646.0 1554.0 L1650.0 1553.2 L1654.0 1552.7 L1658.0 1552.4 L1662.0 1552.5 L1666.0 1552.8 L1670.0 1553.5 L1674.0 1554.4 L1678.0 1555.6 L1682.0 1556.9 L1686.0 1557.7 L1690.0 1557.7 L1694.0 1557.7 L1698.0 1557.7 L1702.0 1557.7 L1706.0 1557.7 L1710.0 1557.7 L1714.0 1557.7 L1718.0 1557.7 L1722.0 1557.7 L1726.0 1557.7 L1730.0 1557.7 L1734.0 1557.7 L1738.0 1557.7 L1742.0 1557.7 L1746.0 1557.7 L1750.0 1557.7 L1754.0 1557.7 L1758.0 1557.7 L1762.0 1557.7 L1766.0 1557.7 L1770.0 1557.7 L1774.0 1557.7 L1778.0 1557.7 L1782.0 1557.7 L1786.0 1557.7 L1790.0 1557.7" stroke="#f020f0" stroke-width="1.4" fill="none" stroke-linejoin="round" />
<path d="M1375.2 1556.8 L1389.1 1545.2 L1396.0 1542.0 L1405.3 1547.5 L1414.5 1556.8" stroke="#f020f0" stroke-width="1.4" fill="none" stroke-linejoin="round" />
<path d="M1426.1 1557.2 L1444.6 1547.5 L1456.2 1533.6 L1465.4 1516.1 L1474.7 1531.3 L1486.3 1549.8 L1497.8 1557.2" stroke="#ff1010" stroke-width="1.4" fill="none" stroke-linejoin="round" />
<path d="M1435.4 1557.2 L1453.9 1549.8 L1465.4 1536.9 L1474.7 1541.5 L1488.6 1552.2 L1500.1 1557.2" stroke="#f020f0" stroke-width="1.4" fill="none" stroke-linejoin="round" />
<path d="M1518.6 1557.2 L1527.9 1542.9 L1539.5 1541.5 L1551.0 1552.2 L1562.6 1549.8 L1571.8 1533.6 L1578.8 1532.3 L1585.7 1542.9 L1595.0 1557.2" stroke="#f020f0" stroke-width="1.4" fill="none" stroke-linejoin="round" />
<path d="M1585.7 1559.1 L1597.3 1573.0 L1611.2 1575.3 L1620.4 1573.0 L1638.9 1560.0" stroke="#1030ff" stroke-width="1.4" fill="none" stroke-linejoin="round" />
<path d="M1671.3 1559.1 L1689.8 1573.0 L1706.0 1577.6 L1716.7 1583.1 L1726.8 1569.3 L1740.7 1570.7 L1752.3 1576.7 L1768.5 1566.0 L1782.4 1558.2" stroke="#1030ff" stroke-width="1.4" fill="none" stroke-linejoin="round" />
<path d="M1585.7 1558.2 L1597.3 1567.4 L1608.9 1563.7 L1620.4 1569.3 L1638.9 1559.1" stroke="#00d000" stroke-width="1.4" fill="none" stroke-linejoin="round" />
<path d="M1731.5 1558.2 L1747.7 1570.7 L1759.2 1566.0 L1777.7 1558.2" stroke="#00d000" stroke-width="1.4" fill="none" stroke-linejoin="round" />
<path d="M1775.4 1557.2 L1784.7 1549.8 L1792.5 1547.1" stroke="#f020f0" stroke-width="1.4" fill="none" stroke-linejoin="round" />
<path d="M615.3 1559.1 L636.2 1578.5 L647.7 1563.7" stroke="#1030ff" stroke-width="1.4" fill="none" stroke-linejoin="round" />
<path d="M744.9 1561.4 L758.8 1575.3 L768.0 1584.5 L777.3 1573.0 L786.5 1560.0" stroke="#1030ff" stroke-width="1.4" fill="none" stroke-linejoin="round" />
<path d="M552.9 1557.2 L566.8 1547.5 L578.3 1552.2 L592.2 1542.9 L601.5 1554.5" stroke="#f020f0" stroke-width="1.4" fill="none" stroke-linejoin="round" />
<path d="M786.5 1552.2 L807.3 1541.5 L832.8 1545.2 L855.9 1552.2 L879.1 1545.2 L897.6 1557.2" stroke="#f020f0" stroke-width="1.4" fill="none" stroke-linejoin="round" />
<path d="M781.9 1547.5 L800.4 1546.1 L828.2 1552.2" stroke="#ff1010" stroke-width="1.4" fill="none" stroke-linejoin="round" />
<path d="M55.5 1560.0 L78.7 1573.0 L106.4 1563.7 L134.2 1558.2" stroke="#1030ff" stroke-width="1.4" fill="none" stroke-linejoin="round" />
<line x1="10.0" y1="1557.7" x2="1794.0" y2="1557.7" stroke="#f0f0a0" stroke-width="1.8" />
<path d="M11.6 1472.1 L12.6 1471.9 L14.6 1471.5 L17.6 1470.9 L21.7 1470.1 L25.7 1468.7 L29.8 1466.7 L33.8 1464.2 L37.9 1461.1 L41.9 1459.1 L46.0 1458.2 L50.0 1458.5 L54.1 1459.9 L57.7 1462.2 L60.9 1465.5 L63.6 1469.7 L65.9 1474.9 L68.5 1480.1 L71.4 1485.4 L74.6 1490.6 L78.1 1495.8 L81.8 1500.2 L85.9 1503.8 L90.2 1506.7 L94.8 1508.8 L99.5 1510.5 L104.1 1512.0 L108.7 1513.1 L113.4 1513.9 L118.0 1514.7 L122.6 1515.4 L127.2 1516.0 L131.9 1516.6 L136.3 1517.9 L140.7 1519.9 L144.9 1522.7 L148.9 1526.1 L153.0 1529.7 L157.0 1533.5 L161.1 1537.4 L165.1 1541.5 L169.0 1544.6 L172.8 1546.9 L176.4 1548.4 L179.9 1549.0 L183.3 1548.2 L186.8 1546.2 L190.3 1542.9 L193.7 1538.3 L196.9 1534.2 L199.8 1530.8 L202.4 1527.9 L204.7 1525.5 L207.3 1524.7 L210.2 1525.3 L213.4 1527.3 L216.9 1530.8 L220.6 1533.9 L224.7 1536.8 L229.0 1539.4 L233.6 1541.7 L238.3 1543.8 L242.9 1545.5 L247.5 1546.9 L252.2 1548.1 L256.5 1549.0 L260.5 1549.5 L264.3 1549.8 L267.8 1549.8 L271.2 1548.2 L274.7 1545.1 L278.2 1540.3 L281.6 1533.9 L285.4 1527.7 L289.5 1521.6 L293.8 1515.7 L298.4 1509.9 L302.9 1504.5 L307.2 1499.4 L311.4 1494.7 L315.5 1490.3 L319.2 1488.2 L322.7 1488.5 L325.9 1491.1 L328.8 1496.1 L332.1 1500.7 L335.9 1504.9 L340.1 1508.8 L344.7 1512.2 L349.0 1516.0 L353.1 1520.1 L356.8 1524.4 L360.3 1529.0 L363.5 1532.8 L366.4 1535.7 L369.0 1537.7 L371.3 1538.8 L373.9 1537.4 L376.8 1533.4 L380.0 1526.7 L383.4 1517.5 L386.6 1509.8 L389.5 1503.7 L392.1 1499.2 L394.4 1496.3 L396.7 1494.9 L399.0 1494.9 L401.4 1496.3 L403.7 1499.2 L406.1 1503.1 L408.7 1508.1 L411.5 1514.0 L414.4 1520.9 L417.1 1526.7 L419.7 1531.3 L422.2 1534.8 L424.5 1537.1 L427.0 1537.1 L429.6 1534.8 L432.3 1530.2 L435.2 1523.2 L438.8 1516.3 L443.1 1509.4 L448.2 1502.4 L454.0 1495.5 L459.5 1485.9 L464.7 1473.8 L469.6 1459.0 L474.2 1441.7 L478.9 1426.9 L483.5 1414.8 L488.1 1405.3 L492.7 1398.3 L497.1 1391.8 L501.1 1385.7 L504.9 1380.1 L508.4 1374.9 L511.8 1370.1 L515.3 1365.8 L518.8 1361.9 L522.2 1358.4 L525.7 1356.7 L529.2 1356.7 L532.6 1358.4 L536.1 1361.9 L539.6 1364.3 L543.1 1365.8 L546.5 1366.2 L550.0 1365.6 L553.5 1365.5 L556.9 1365.8 L560.4 1366.5 L563.9 1367.7 L567.2 1369.5 L570.4 1372.1 L573.4 1375.5 L576.3 1379.5 L579.1 1382.0 L581.7 1382.8 L584.1 1382.1 L586.4 1379.8 L588.9 1379.5 L591.5 1381.3 L594.2 1385.0 L597.1 1390.8 L600.2 1398.2 L603.3 1407.1 L606.7 1417.7 L610.1 1429.8 L613.6 1441.8 L617.1 1453.7 L620.5 1465.4 L624.0 1477.0 L627.3 1487.1 L630.5 1495.8 L633.6 1503.0 L636.5 1508.8 L639.3 1513.3 L642.2 1516.4 L645.1 1518.3 L648.0 1518.9 L651.1 1518.8 L654.2 1517.9 L657.6 1516.3 L661.0 1514.0 L664.5 1513.0 L668.0 1513.3 L671.4 1514.8 L674.9 1517.7 L678.4 1521.1 L681.8 1524.8 L685.3 1529.0 L688.8 1533.6 L692.5 1537.8 L696.6 1541.6 L700.9 1544.9 L705.6 1547.8 L710.0 1547.8 L714.4 1544.9 L718.6 1539.1 L722.6 1530.5 L726.4 1523.0 L729.9 1516.8 L733.0 1511.9 L735.9 1508.2 L738.8 1506.6 L741.7 1507.2 L744.6 1509.9 L747.5 1514.8 L750.5 1520.5 L753.7 1526.9 L757.0 1534.2 L760.5 1542.3 L763.8 1546.9 L767.0 1548.1 L770.0 1545.8 L772.9 1540.0 L776.0 1533.9 L779.2 1527.6 L782.5 1520.9 L785.9 1514.0 L789.4 1507.6 L792.9 1501.8 L796.4 1496.6 L799.8 1492.0 L803.6 1488.1 L807.6 1484.9 L812.0 1482.5 L816.6 1480.7 L820.9 1479.7 L825.0 1479.4 L828.7 1479.9 L832.2 1481.0 L835.7 1481.2 L839.2 1480.3 L842.6 1478.4 L846.1 1475.5 L849.9 1471.0 L853.9 1465.0 L858.2 1457.3 L862.9 1448.1 L867.1 1438.7 L870.8 1429.1 L874.1 1419.4 L877.0 1409.6 L879.8 1401.6 L882.4 1395.6 L884.8 1391.4 L887.2 1389.1 L889.5 1388.2 L891.8 1388.8 L894.1 1390.8 L896.4 1394.3 L898.7 1398.0 L901.0 1402.1 L903.3 1406.4 L905.7 1411.0 L908.1 1414.8 L910.7 1417.7 L913.5 1419.7 L916.4 1420.9 L919.4 1422.5 L922.6 1424.5 L925.9 1426.9 L929.4 1429.8 L932.7 1432.6 L935.9 1435.2 L938.9 1437.6 L941.8 1440.0 L944.7 1443.0 L947.6 1446.8 L950.5 1451.2 L953.4 1456.4 L956.3 1461.1 L959.2 1465.1 L962.1 1468.6 L964.9 1471.5 L968.1 1473.1 L971.6 1473.4 L975.4 1472.3 L979.4 1470.0 L983.3 1466.8 L987.1 1462.8 L990.7 1457.9 L994.1 1452.1 L997.5 1447.3 L1000.7 1443.6 L1003.7 1440.8 L1006.6 1439.1 L1009.5 1438.5 L1012.4 1439.1 L1015.3 1440.8 L1018.1 1443.7 L1021.2 1447.6 L1024.4 1452.5 L1027.7 1458.5 L1031.2 1465.4 L1034.6 1470.8 L1038.1 1474.5 L1041.6 1476.7 L1045.0 1477.3 L1048.5 1478.7 L1052.0 1481.0 L1055.5 1484.2 L1058.9 1488.2 L1062.4 1492.3 L1065.9 1496.3 L1069.3 1500.4 L1072.8 1504.4 L1076.6 1508.5 L1080.6 1512.5 L1084.9 1516.6 L1089.6 1520.6 L1093.9 1524.1 L1098.0 1527.0 L1101.7 1529.3 L1105.2 1531.0 L1108.7 1531.9 L1112.1 1531.9 L1115.6 1531.0 L1119.1 1529.3 L1122.1 1529.5 L1124.7 1531.5 L1126.9 1535.4 L1128.6 1541.2 L1130.4 1544.1 L1132.3 1544.1 L1134.2 1541.2 L1136.2 1535.4 L1138.4 1530.1 L1140.7 1525.3 L1143.1 1521.0 L1145.6 1517.2 L1148.0 1515.1 L1150.4 1514.8 L1152.6 1516.3 L1154.6 1519.5 L1157.1 1522.4 L1159.8 1524.9 L1163.0 1527.0 L1166.4 1528.7 L1169.9 1529.2 L1173.4 1528.3 L1176.8 1526.1 L1180.3 1522.7 L1183.8 1520.3 L1187.3 1519.2 L1190.7 1519.2 L1194.2 1520.3 L1197.7 1521.8 L1201.1 1523.5 L1204.6 1525.5 L1208.1 1527.9 L1211.7 1530.3 L1215.4 1532.9 L1219.4 1535.7 L1223.4 1538.6 L1227.2 1538.8 L1230.6 1536.5 L1233.8 1531.6 L1236.7 1524.1 L1239.5 1517.8 L1242.2 1512.8 L1244.9 1509.0 L1247.4 1506.5 L1250.1 1505.0 L1253.0 1504.8 L1256.1 1505.6 L1259.3 1507.6 L1262.6 1508.2 L1266.0 1507.4 L1269.4 1505.3 L1272.8 1501.8 L1276.2 1497.1 L1279.4 1491.0 L1282.4 1483.6 L1285.3 1474.9 L1288.2 1466.4 L1291.1 1458.0 L1294.0 1449.8 L1296.8 1441.7 L1299.5 1436.1 L1301.8 1432.9 L1303.8 1432.1 L1305.5 1433.9 L1307.5 1437.6 L1309.9 1443.4 L1312.5 1451.2 L1315.4 1461.1 L1318.1 1469.5 L1320.7 1476.4 L1323.2 1481.9 L1325.5 1485.9 L1328.1 1489.3 L1331.0 1491.9 L1334.2 1493.7 L1337.6 1494.9 L1341.1 1496.6 L1344.6 1498.9 L1348.0 1501.8 L1351.5 1505.3 L1354.7 1508.3 L1357.6 1510.7 L1360.2 1512.6 L1362.5 1514.0 L1364.8 1514.4 L1367.1 1513.8 L1369.4 1512.2 L1371.7 1509.7 L1374.1 1503.6 L1376.4 1493.9 L1378.7 1480.7 L1381.0 1464.0 L1383.3 1449.4 L1385.6 1436.9 L1387.9 1426.7 L1390.2 1418.6 L1392.5 1412.1 L1394.7 1407.4 L1396.8 1404.3 L1398.9 1402.9 L1401.1 1403.4 L1403.4 1405.7 L1405.9 1409.9 L1408.4 1415.9 L1410.9 1422.4 L1413.3 1429.5 L1415.7 1437.1 L1418.0 1445.2 L1420.6 1451.8 L1423.5 1457.0 L1426.7 1460.8 L1430.2 1463.1 L1433.6 1463.7 L1437.1 1462.5 L1440.6 1459.6 L1444.0 1455.0 L1447.2 1449.2 L1450.1 1442.3 L1452.7 1434.2 L1455.0 1424.9 L1457.2 1415.9 L1459.2 1407.1 L1461.1 1398.5 L1462.8 1390.2 L1464.7 1384.2 L1466.7 1380.4 L1468.9 1378.9 L1471.2 1379.8 L1473.8 1381.8 L1476.7 1385.1 L1479.9 1389.6 L1483.4 1395.4 L1486.8 1400.6 L1490.3 1405.3 L1493.8 1409.3 L1497.2 1412.8 L1500.9 1414.5 L1504.6 1414.5 L1508.5 1412.8 L1512.6 1409.3 L1516.2 1404.7 L1519.4 1398.9 L1522.1 1392.0 L1524.4 1383.9 L1527.0 1377.1 L1529.9 1371.6 L1533.1 1367.4 L1536.6 1364.5 L1539.7 1362.7 L1542.6 1362.0 L1545.2 1362.4 L1547.6 1363.9 L1549.9 1364.8 L1552.2 1365.1 L1554.5 1364.8 L1556.8 1363.8 L1559.4 1362.3 L1562.1 1360.3 L1565.1 1357.6 L1568.4 1354.4 L1571.6 1353.2 L1574.8 1354.0 L1577.9 1357.0 L1581.0 1361.9 L1584.1 1367.8 L1587.1 1374.7 L1590.1 1382.4 L1593.0 1391.1 L1595.7 1398.6 L1598.3 1405.0 L1600.8 1410.2 L1603.1 1414.2 L1605.7 1418.0 L1608.7 1421.4 L1612.1 1424.6 L1615.8 1427.5 L1619.7 1428.8 L1623.7 1428.5 L1627.9 1426.7 L1632.3 1423.2 L1636.5 1419.4 L1640.4 1415.4 L1644.1 1411.0 L1647.6 1406.4 L1650.9 1402.4 L1654.1 1398.9 L1657.1 1396.0 L1660.0 1393.7 L1662.9 1392.0 L1665.8 1390.8 L1668.7 1390.2 L1671.6 1390.2 L1674.4 1390.7 L1677.0 1391.5 L1679.4 1392.8 L1681.7 1394.6 L1684.6 1398.2 L1688.1 1403.7 L1692.1 1411.0 L1696.8 1420.3 L1701.0 1429.7 L1705.0 1439.2 L1708.6 1448.9 L1711.8 1458.8 L1715.0 1465.8 L1718.2 1470.2 L1721.3 1471.8 L1724.5 1470.6 L1727.5 1470.5 L1730.5 1471.3 L1733.5 1473.2 L1736.4 1476.1 L1739.3 1479.9 L1742.2 1484.5 L1745.1 1490.0 L1747.9 1496.3 L1750.8 1502.1 L1753.7 1507.3 L1756.6 1512.0 L1759.5 1516.0 L1762.2 1519.8 L1764.7 1523.4 L1767.0 1526.8 L1769.1 1529.9 L1771.3 1531.2 L1773.6 1530.6 L1776.0 1528.2 L1778.5 1523.9 L1781.1 1520.0 L1783.6 1516.5 L1786.2 1513.5 L1788.7 1510.8 L1790.6 1508.8 L1791.9 1507.5 L1792.5 1506.8" stroke="#f0e000" stroke-width="1.4" fill="none" stroke-linejoin="round" />
<rect x="520.0" y="1339.5" width="13.0" height="7.0" fill="none" stroke="#fff" stroke-width="1.5"/>
<line x1="524.3" y1="1339.5" x2="524.3" y2="1346.5" stroke="#fff" stroke-width="1.2" />
<line x1="528.6" y1="1339.5" x2="528.6" y2="1346.5" stroke="#fff" stroke-width="1.2" />
<rect x="1560.0" y="1339.5" width="13.0" height="7.0" fill="none" stroke="#fff" stroke-width="1.5"/>
<line x1="1564.3" y1="1339.5" x2="1564.3" y2="1346.5" stroke="#fff" stroke-width="1.2" />
<line x1="1568.6" y1="1339.5" x2="1568.6" y2="1346.5" stroke="#fff" stroke-width="1.2" />
<rect x="8.0" y="1587.0" width="2176.0" height="1.5" fill="#840000" />
<line x1="8.0" y1="1588.0" x2="8.0" y2="1593.0" stroke="#840000" stroke-width="1.5" />
<line x1="94.0" y1="1588.0" x2="94.0" y2="1593.0" stroke="#840000" stroke-width="1.5" />
<line x1="188.0" y1="1588.0" x2="188.0" y2="1593.0" stroke="#840000" stroke-width="1.5" />
<line x1="291.5" y1="1588.0" x2="291.5" y2="1593.0" stroke="#840000" stroke-width="1.5" />
<line x1="381.0" y1="1588.0" x2="381.0" y2="1593.0" stroke="#840000" stroke-width="1.5" />
<line x1="458.0" y1="1588.0" x2="458.0" y2="1593.0" stroke="#840000" stroke-width="1.5" />
<line x1="557.5" y1="1588.0" x2="557.5" y2="1593.0" stroke="#840000" stroke-width="1.5" />
<line x1="651.5" y1="1588.0" x2="651.5" y2="1593.0" stroke="#840000" stroke-width="1.5" />
<line x1="750.5" y1="1588.0" x2="750.5" y2="1593.0" stroke="#840000" stroke-width="1.5" />
<line x1="816.5" y1="1588.0" x2="816.5" y2="1593.0" stroke="#840000" stroke-width="1.5" />
<line x1="912.5" y1="1588.0" x2="912.5" y2="1593.0" stroke="#840000" stroke-width="1.5" />
<line x1="1002.0" y1="1588.0" x2="1002.0" y2="1593.0" stroke="#840000" stroke-width="1.5" />
<line x1="1093.0" y1="1588.0" x2="1093.0" y2="1593.0" stroke="#840000" stroke-width="1.5" />
<line x1="1177.5" y1="1588.0" x2="1177.5" y2="1593.0" stroke="#840000" stroke-width="1.5" />
<line x1="1281.0" y1="1588.0" x2="1281.0" y2="1593.0" stroke="#840000" stroke-width="1.5" />
<line x1="1546.5" y1="1588.0" x2="1546.5" y2="1593.0" stroke="#840000" stroke-width="1.5" />
<line x1="1641.0" y1="1588.0" x2="1641.0" y2="1593.0" stroke="#840000" stroke-width="1.5" />
<line x1="1740.0" y1="1588.0" x2="1740.0" y2="1593.0" stroke="#840000" stroke-width="1.5" />
<line x1="1848.0" y1="1588.0" x2="1848.0" y2="1593.0" stroke="#840000" stroke-width="1.5" />
<line x1="1974.5" y1="1588.0" x2="1974.5" y2="1593.0" stroke="#840000" stroke-width="1.5" />
<line x1="2113.5" y1="1588.0" x2="2113.5" y2="1593.0" stroke="#840000" stroke-width="1.5" />
<rect x="1376.0" y="1588.0" width="121.0" height="24.0" fill="#4b0082" />
<rect x="8.0" y="1612.3" width="1223.0" height="1.5" fill="#840000" />
<rect x="8.0" y="1637.3" width="2256.0" height="3.2" fill="#840000" />
<line x1="57.5" y1="1613.5" x2="57.5" y2="1637.5" stroke="#840000" stroke-width="1.5" />
<line x1="193.0" y1="1613.5" x2="193.0" y2="1637.5" stroke="#840000" stroke-width="1.5" />
<rect x="66.0" y="1616.0" width="40.0" height="18.0" fill="#ee1111" rx="3"/>
<line x1="264.0" y1="1613.5" x2="264.0" y2="1637.5" stroke="#840000" stroke-width="1.5" />
<line x1="320.0" y1="1613.5" x2="320.0" y2="1637.5" stroke="#840000" stroke-width="1.5" />
<line x1="372.0" y1="1613.5" x2="372.0" y2="1637.5" stroke="#840000" stroke-width="1.5" />
<line x1="438.0" y1="1613.5" x2="438.0" y2="1637.5" stroke="#840000" stroke-width="1.5" />
<line x1="495.0" y1="1613.5" x2="495.0" y2="1637.5" stroke="#840000" stroke-width="1.5" />
<line x1="582.0" y1="1613.5" x2="582.0" y2="1637.5" stroke="#840000" stroke-width="1.5" />
<line x1="728.0" y1="1613.5" x2="728.0" y2="1637.5" stroke="#840000" stroke-width="1.5" />
<line x1="804.0" y1="1613.5" x2="804.0" y2="1637.5" stroke="#840000" stroke-width="1.5" />
<line x1="896.0" y1="1613.5" x2="896.0" y2="1637.5" stroke="#840000" stroke-width="1.5" />
<line x1="1013.0" y1="1613.5" x2="1013.0" y2="1637.5" stroke="#840000" stroke-width="1.5" />
<line x1="1030.0" y1="1613.5" x2="1030.0" y2="1637.5" stroke="#840000" stroke-width="1.5" />
<rect x="1030.0" y="1613.5" width="110.0" height="24.0" fill="#840000" />
<line x1="1140.0" y1="1613.5" x2="1140.0" y2="1637.5" stroke="#840000" stroke-width="1.5" />
<line x1="1231.0" y1="1613.5" x2="1231.0" y2="1637.5" stroke="#840000" stroke-width="1.5" />
<rect x="574.0" y="1615.0" width="5.0" height="5.0" fill="#ff2020" />
<rect x="8.0" y="1669.5" width="2256.0" height="2.0" fill="#840000" />
<rect x="8.0" y="1640.0" width="94.0" height="29.5" fill="#840000" />
<line x1="102.0" y1="1640.0" x2="102.0" y2="1669.0" stroke="#840000" stroke-width="1.5" />
<line x1="196.0" y1="1640.0" x2="196.0" y2="1669.0" stroke="#840000" stroke-width="1.5" />
<line x1="291.0" y1="1640.0" x2="291.0" y2="1669.0" stroke="#840000" stroke-width="1.5" />
<line x1="385.0" y1="1640.0" x2="385.0" y2="1669.0" stroke="#840000" stroke-width="1.5" />
<line x1="525.0" y1="1640.0" x2="525.0" y2="1669.0" stroke="#840000" stroke-width="1.5" />
<line x1="583.0" y1="1640.0" x2="583.0" y2="1669.0" stroke="#840000" stroke-width="1.5" />
<line x1="677.0" y1="1640.0" x2="677.0" y2="1669.0" stroke="#840000" stroke-width="1.5" />
<line x1="787.0" y1="1640.0" x2="787.0" y2="1669.0" stroke="#840000" stroke-width="1.5" />
<line x1="882.0" y1="1640.0" x2="882.0" y2="1669.0" stroke="#840000" stroke-width="1.5" />
<polygon points="2228.0,1647.0 2238.0,1647.0 2238.0,1653.0 2243.0,1653.0 2233.0,1661.0 2223.0,1653.0 2228.0,1653.0" fill="#e0e0e0" />
<rect x="2224.0" y="1662.0" width="18.0" height="2.5" fill="#e0e0e0" />
<rect x="1116.5" y="1672.0" width="17.5" height="157.0" fill="#444" />
<rect x="1116.5" y="1672.0" width="17.5" height="17.0" fill="#262626" />
<polygon points="1120.5,1684.0 1130.5,1684.0 1125.5,1677.5" fill="#666" />
<rect x="2243.2" y="1672.0" width="17.6" height="157.0" fill="#444" />
<rect x="2243.2" y="1672.0" width="17.6" height="17.0" fill="#262626" />
<polygon points="2247.0,1684.0 2257.0,1684.0 2252.0,1677.5" fill="#666" />
<rect x="1134.3" y="1671.0" width="1.7" height="158.0" fill="#840000" />
<rect x="2268.0" y="90.0" width="764.0" height="2.0" fill="#840000" />
<line x1="2263.2" y1="90.0" x2="2263.2" y2="1829.0" stroke="#840000" stroke-width="1.8" />
<line x1="2642.5" y1="90.0" x2="2642.5" y2="1311.0" stroke="#840000" stroke-width="2" />
<polygon points="2634.0,111.0 2633.6,112.9 2630.2,113.3 2629.4,114.4 2630.3,117.7 2628.7,118.8 2626.0,116.7 2624.7,117.0 2623.0,120.0 2621.1,119.6 2620.7,116.2 2619.6,115.4 2616.3,116.3 2615.2,114.7 2617.3,112.0 2617.0,110.7 2614.0,109.0 2614.4,107.1 2617.8,106.7 2618.6,105.6 2617.7,102.3 2619.3,101.2 2622.0,103.3 2623.3,103.0 2625.0,100.0 2626.9,100.4 2627.3,103.8 2628.4,104.6 2631.7,103.7 2632.8,105.3 2630.7,108.0 2631.0,109.3" fill="#6e6e6e" />
<circle cx="2624" cy="110" r="3.2" fill="#000"/>
<line x1="2264.0" y1="173.5" x2="2642.0" y2="173.5" stroke="#840000" stroke-width="1.5" />
<rect x="2546.0" y="180.0" width="42.0" height="23.0" fill="#8b0000" />
<rect x="2594.0" y="180.0" width="42.0" height="23.0" fill="#006a00" />
<line x1="2264.0" y1="209.5" x2="2642.0" y2="209.5" stroke="#840000" stroke-width="1.5" />
<line x1="2291.5" y1="209.5" x2="2291.5" y2="569.5" stroke="#840000" stroke-width="1.5" />
<rect x="2264.0" y="386.0" width="238.5" height="6.5" fill="#b02020" />
<rect x="2503.0" y="386.0" width="139.0" height="6.5" fill="#2f8f2f" />
<line x1="2264.0" y1="569.5" x2="2642.0" y2="569.5" stroke="#840000" stroke-width="1.5" />
<line x1="2264.0" y1="602.0" x2="2642.0" y2="602.0" stroke="#840000" stroke-width="1.5" />
<line x1="2264.0" y1="901.0" x2="2642.0" y2="901.0" stroke="#840000" stroke-width="1.5" />
<polygon points="2558.5,930.0 2566.5,921.0 2562.0,921.0 2562.0,914.0 2555.0,914.0 2555.0,921.0 2550.5,921.0" fill="#00e000" />
<polygon points="2558.5,965.4 2566.5,956.4 2562.0,956.4 2562.0,949.4 2555.0,949.4 2555.0,956.4 2550.5,956.4" fill="#00e000" />
<polygon points="2558.5,1000.8 2566.5,991.8 2562.0,991.8 2562.0,984.8 2555.0,984.8 2555.0,991.8 2550.5,991.8" fill="#00e000" />
<polygon points="2558.5,1019.2 2566.5,1028.2 2562.0,1028.2 2562.0,1035.2 2555.0,1035.2 2555.0,1028.2 2550.5,1028.2" fill="#ff2020" />
<polygon points="2558.5,1054.6 2566.5,1063.6 2562.0,1063.6 2562.0,1070.6 2555.0,1070.6 2555.0,1063.6 2550.5,1063.6" fill="#ff2020" />
<polygon points="2558.5,1107.0 2566.5,1098.0 2562.0,1098.0 2562.0,1091.0 2555.0,1091.0 2555.0,1098.0 2550.5,1098.0" fill="#00e000" />
<polygon points="2558.5,1125.4 2566.5,1134.4 2562.0,1134.4 2562.0,1141.4 2555.0,1141.4 2555.0,1134.4 2550.5,1134.4" fill="#ff2020" />
<polygon points="2558.5,1177.8 2566.5,1168.8 2562.0,1168.8 2562.0,1161.8 2555.0,1161.8 2555.0,1168.8 2550.5,1168.8" fill="#00e000" />
<polygon points="2558.5,1213.2 2566.5,1204.2 2562.0,1204.2 2562.0,1197.2 2555.0,1197.2 2555.0,1204.2 2550.5,1204.2" fill="#00e000" />
<polygon points="2558.5,1248.6 2566.5,1239.6 2562.0,1239.6 2562.0,1232.6 2555.0,1232.6 2555.0,1239.6 2550.5,1239.6" fill="#00e000" />
<polygon points="2558.5,1267.0 2566.5,1276.0 2562.0,1276.0 2562.0,1283.0 2555.0,1283.0 2555.0,1276.0 2550.5,1276.0" fill="#ff2020" />
<polygon points="2558.5,1302.4 2566.5,1311.4 2562.0,1311.4 2562.0,1318.4 2555.0,1318.4 2555.0,1311.4 2550.5,1311.4" fill="#ff2020" />
<polygon points="2558.5,1354.8 2566.5,1345.8 2562.0,1345.8 2562.0,1338.8 2555.0,1338.8 2555.0,1345.8 2550.5,1345.8" fill="#00e000" />
<polygon points="2558.5,1390.2 2566.5,1381.2 2562.0,1381.2 2562.0,1374.2 2555.0,1374.2 2555.0,1381.2 2550.5,1381.2" fill="#00e000" />
<polygon points="2558.5,1408.6 2566.5,1417.6 2562.0,1417.6 2562.0,1424.6 2555.0,1424.6 2555.0,1417.6 2550.5,1417.6" fill="#ff2020" />
<polygon points="2558.5,1444.0 2566.5,1453.0 2562.0,1453.0 2562.0,1460.0 2555.0,1460.0 2555.0,1453.0 2550.5,1453.0" fill="#ff2020" />
<polygon points="2558.5,1496.4 2566.5,1487.4 2562.0,1487.4 2562.0,1480.4 2555.0,1480.4 2555.0,1487.4 2550.5,1487.4" fill="#00e000" />
<polygon points="2558.5,1514.8 2566.5,1523.8 2562.0,1523.8 2562.0,1530.8 2555.0,1530.8 2555.0,1523.8 2550.5,1523.8" fill="#ff2020" />
<polygon points="2558.5,1550.2 2566.5,1559.2 2562.0,1559.2 2562.0,1566.2 2555.0,1566.2 2555.0,1559.2 2550.5,1559.2" fill="#ff2020" />
<polygon points="2558.5,1585.6 2566.5,1594.6 2562.0,1594.6 2562.0,1601.6 2555.0,1601.6 2555.0,1594.6 2550.5,1594.6" fill="#ff2020" />
<polygon points="2558.5,1621.0 2566.5,1630.0 2562.0,1630.0 2562.0,1637.0 2555.0,1637.0 2555.0,1630.0 2550.5,1630.0" fill="#ff2020" />
<polygon points="2558.5,1673.4 2566.5,1664.4 2562.0,1664.4 2562.0,1657.4 2555.0,1657.4 2555.0,1664.4 2550.5,1664.4" fill="#00e000" />
<polygon points="2558.5,1708.8 2566.5,1699.8 2562.0,1699.8 2562.0,1692.8 2555.0,1692.8 2555.0,1699.8 2550.5,1699.8" fill="#00e000" />
<polygon points="2558.5,1727.2 2566.5,1736.2 2562.0,1736.2 2562.0,1743.2 2555.0,1743.2 2555.0,1736.2 2550.5,1736.2" fill="#ff2020" />
<polygon points="2558.5,1779.6 2566.5,1770.6 2562.0,1770.6 2562.0,1763.6 2555.0,1763.6 2555.0,1770.6 2550.5,1770.6" fill="#00e000" />
<polygon points="2558.5,1798.0 2566.5,1807.0 2562.0,1807.0 2562.0,1814.0 2555.0,1814.0 2555.0,1807.0 2550.5,1807.0" fill="#ff2020" />
<line x1="2643.0" y1="118.0" x2="3032.0" y2="118.0" stroke="#840000" stroke-width="1.5" />
<path d="M2938.0 166.0 A82 82 0 0 1 2968.2 171.8 L2952.7 210.8 A40 40 0 0 0 2938.0 208.0Z" fill="#c80000"/>
<path d="M2968.2 171.8 A82 82 0 0 1 3019.4 258.3 L2977.7 253.0 A40 40 0 0 0 2952.7 210.8Z" fill="#800000"/>
<path d="M3019.4 258.3 A82 82 0 0 1 2938.0 330.0 L2938.0 288.0 A40 40 0 0 0 2977.7 253.0Z" fill="#440000"/>
<path d="M2938.0 330.0 A82 82 0 0 1 2856.0 248.0 L2898.0 248.0 A40 40 0 0 0 2938.0 288.0Z" fill="#004400"/>
<path d="M2856.0 248.0 A82 82 0 0 1 2894.1 178.8 L2916.6 214.2 A40 40 0 0 0 2898.0 248.0Z" fill="#008800"/>
<path d="M2894.1 178.8 A82 82 0 0 1 2927.7 166.6 L2933.0 208.3 A40 40 0 0 0 2916.6 214.2Z" fill="#00c000"/>
<path d="M2927.7 166.6 A82 82 0 0 1 2938.0 166.0 L2938.0 208.0 A40 40 0 0 0 2933.0 208.3Z" fill="#00f000"/>
<line x1="2643.0" y1="343.0" x2="3032.0" y2="343.0" stroke="#3a3a3a" stroke-width="1.5" />
<rect x="2898.5" y="369.5" width="25.5" height="17.5" fill="#2f8f2f" />
<rect x="2898.5" y="406.0" width="28.5" height="17.5" fill="#2f8f2f" />
<rect x="2764.5" y="442.0" width="134.0" height="17.5" fill="#b02018" />
<rect x="2898.5" y="478.0" width="78.0" height="17.5" fill="#2f8f2f" />
<circle cx="2828.7" cy="508.3" r="4.5" fill="#ff3040"/><circle cx="2849.5" cy="508.3" r="4.5" fill="#d8d8d8"/>
<rect x="2643.0" y="520.0" width="389.0" height="1.5" fill="#840000" />
<rect x="2644.0" y="521.5" width="389.0" height="28.0" fill="#1e0808" />
<rect x="2646.0" y="550.0" width="150.0" height="29.0" fill="#1c1c1c" />
<rect x="2798.0" y="550.0" width="82.0" height="29.0" fill="#1c1c1c" />
<rect x="2882.0" y="550.0" width="112.0" height="29.0" fill="#1c1c1c" />
<polygon points="2986.0,574.0 2994.0,565.0 2990.0,565.0 2990.0,558.0 2982.0,558.0 2982.0,565.0 2978.0,565.0" fill="#d8d8d8" />
<rect x="2643.0" y="1274.0" width="389.0" height="1.5" fill="#840000" />
<rect x="2644.0" y="1275.5" width="389.0" height="27.0" fill="#240808" />
<rect x="2870.0" y="1276.0" width="28.5" height="26.0" fill="none" stroke="#840000" stroke-width="1.5"/>
<rect x="2899.5" y="1276.0" width="28.5" height="26.0" fill="none" stroke="#840000" stroke-width="1.5"/>
<rect x="2929.0" y="1276.0" width="103.0" height="26.0" fill="none" stroke="#840000" stroke-width="1.5"/>
<path d="M2875 1283 L2875 1298 L2892 1298 M2877 1296 L2886 1287 M2888 1281 L2894 1281 L2894 1287 L2888 1287Z" stroke="#999" stroke-width="1.5" fill="none"/>
<polygon points="2923.5,1290.0 2923.1,1291.9 2919.7,1292.3 2918.9,1293.4 2919.8,1296.7 2918.2,1297.8 2915.5,1295.7 2914.2,1296.0 2912.5,1299.0 2910.6,1298.6 2910.2,1295.2 2909.1,1294.4 2905.8,1295.3 2904.7,1293.7 2906.8,1291.0 2906.5,1289.7 2903.5,1288.0 2903.9,1286.1 2907.3,1285.7 2908.1,1284.6 2907.2,1281.3 2908.8,1280.2 2911.5,1282.3 2912.8,1282.0 2914.5,1279.0 2916.4,1279.4 2916.8,1282.8 2917.9,1283.6 2921.2,1282.7 2922.3,1284.3 2920.2,1287.0 2920.5,1288.3" fill="#9a9a9a" />
<circle cx="2913.5" cy="1289" r="3.2" fill="#240808"/>
<polygon points="3012.0,1285.0 3026.0,1285.0 3019.0,1292.0" fill="#d8d8d8" />
<rect x="2653.4" y="1308.7" width="2.5" height="2.0" fill="#00a800" />
<rect x="2658.2" y="1308.1" width="2.5" height="2.0" fill="#00a800" />
<rect x="2665.5" y="1308.9" width="2.5" height="2.0" fill="#00a800" />
<rect x="2671.4" y="1307.6" width="2.5" height="2.0" fill="#00a800" />
<rect x="2677.2" y="1307.6" width="2.5" height="2.0" fill="#00a800" />
<rect x="2683.1" y="1308.7" width="2.5" height="2.0" fill="#00a800" />
<rect x="2688.2" y="1308.9" width="2.5" height="2.0" fill="#00a800" />
<rect x="2695.4" y="1307.9" width="2.5" height="2.0" fill="#00a800" />
<rect x="2700.4" y="1308.2" width="2.5" height="2.0" fill="#00a800" />
<rect x="2707.7" y="1308.4" width="2.5" height="2.0" fill="#00a800" />
<rect x="2752.2" y="1307.5" width="2.5" height="2.0" fill="#00a800" />
<rect x="2758.2" y="1308.7" width="2.5" height="2.0" fill="#00a800" />
<rect x="2764.4" y="1308.3" width="2.5" height="2.0" fill="#00a800" />
<rect x="2770.6" y="1308.5" width="2.5" height="2.0" fill="#00a800" />
<rect x="2776.8" y="1307.7" width="2.5" height="2.0" fill="#00a800" />
<rect x="2783.8" y="1308.3" width="2.5" height="2.0" fill="#00a800" />
<rect x="2789.4" y="1308.7" width="2.5" height="2.0" fill="#00a800" />
<rect x="2795.9" y="1307.5" width="2.5" height="2.0" fill="#00a800" />
<rect x="2800.7" y="1307.7" width="2.5" height="2.0" fill="#00a800" />
<rect x="2807.0" y="1308.8" width="2.5" height="2.0" fill="#00a800" />
<rect x="2813.6" y="1307.6" width="2.5" height="2.0" fill="#00a800" />
<rect x="2852.4" y="1308.7" width="2.5" height="2.0" fill="#00a800" />
<rect x="2859.4" y="1308.1" width="2.5" height="2.0" fill="#00a800" />
<rect x="2865.0" y="1307.7" width="2.5" height="2.0" fill="#00a800" />
<rect x="2871.7" y="1308.1" width="2.5" height="2.0" fill="#00a800" />
<rect x="2877.7" y="1308.4" width="2.5" height="2.0" fill="#00a800" />
<rect x="2882.2" y="1308.0" width="2.5" height="2.0" fill="#00a800" />
<rect x="2888.4" y="1308.8" width="2.5" height="2.0" fill="#00a800" />
<rect x="2895.2" y="1307.6" width="2.5" height="2.0" fill="#00a800" />
<rect x="2900.3" y="1308.0" width="2.5" height="2.0" fill="#00a800" />
<rect x="2906.9" y="1308.4" width="2.5" height="2.0" fill="#00a800" />
<rect x="2912.8" y="1308.0" width="2.5" height="2.0" fill="#00a800" />
<rect x="2918.0" y="1308.4" width="2.5" height="2.0" fill="#00a800" />
<rect x="2985.7" y="1307.5" width="2.5" height="2.0" fill="#00a800" />
<rect x="2991.9" y="1309.0" width="2.5" height="2.0" fill="#00a800" />
<rect x="2997.1" y="1307.7" width="2.5" height="2.0" fill="#00a800" />
<rect x="3004.3" y="1307.9" width="2.5" height="2.0" fill="#00a800" />
<rect x="3009.5" y="1308.3" width="2.5" height="2.0" fill="#00a800" />
<rect x="3015.5" y="1308.4" width="2.5" height="2.0" fill="#00a800" />
<rect x="3029.0" y="1316.0" width="3.0" height="3.0" fill="#00a000" />
<rect x="3029.0" y="1342.0" width="3.0" height="7.0" fill="#00a000" />
<rect x="3029.0" y="1368.0" width="3.0" height="3.0" fill="#00a000" />
<rect x="3029.0" y="1394.0" width="3.0" height="7.0" fill="#00a000" />
<rect x="3029.0" y="1407.0" width="3.0" height="5.0" fill="#00a000" />
<rect x="3029.0" y="1433.0" width="3.0" height="3.0" fill="#00a000" />
<rect x="3029.0" y="1446.0" width="3.0" height="5.0" fill="#00a000" />
<rect x="3029.0" y="1472.0" width="3.0" height="5.0" fill="#00a000" />
<rect x="3029.0" y="1485.0" width="3.0" height="7.0" fill="#00a000" />
<rect x="3029.0" y="1498.0" width="3.0" height="7.0" fill="#00a000" />
<rect x="3029.0" y="1524.0" width="3.0" height="7.0" fill="#00a000" />
<rect x="3029.0" y="1537.0" width="3.0" height="5.0" fill="#00a000" />
<rect x="3029.0" y="1576.0" width="3.0" height="3.0" fill="#00a000" />
<rect x="3029.0" y="1615.0" width="3.0" height="3.0" fill="#00a000" />
<rect x="3029.0" y="1628.0" width="3.0" height="7.0" fill="#00a000" />
<rect x="3029.0" y="1641.0" width="3.0" height="5.0" fill="#b02020" />
<rect x="3029.0" y="1654.0" width="3.0" height="5.0" fill="#b02020" />
<rect x="3029.0" y="1680.0" width="3.0" height="3.0" fill="#b02020" />
<rect x="3029.0" y="1693.0" width="3.0" height="5.0" fill="#b02020" />
<rect x="3029.0" y="1706.0" width="3.0" height="7.0" fill="#b02020" />
<rect x="3029.0" y="1719.0" width="3.0" height="5.0" fill="#b02020" />
<rect x="3029.0" y="1732.0" width="3.0" height="3.0" fill="#b02020" />
<rect x="3029.0" y="1745.0" width="3.0" height="3.0" fill="#b02020" />
<rect x="3029.0" y="1758.0" width="3.0" height="5.0" fill="#b02020" />
<rect x="3029.0" y="1771.0" width="3.0" height="5.0" fill="#b02020" />
<rect x="3029.0" y="1784.0" width="3.0" height="7.0" fill="#b02020" />
<rect x="3029.0" y="1797.0" width="3.0" height="3.0" fill="#b02020" />
<rect x="3029.0" y="1823.0" width="3.0" height="3.0" fill="#b02020" />
<rect x="2606.0" y="1311.0" width="422.0" height="518.0" fill="#f0f0f0" />
<rect x="2606.0" y="1311.0" width="422.0" height="38.0" fill="#ffffff" />
<line x1="2846.0" y1="1330.0" x2="2861.0" y2="1330.0" stroke="#8a8a8a" stroke-width="1.2" />
<rect x="2915.0" y="1323.0" width="14.0" height="14.0" fill="none" stroke="#d0d0d0" stroke-width="1.2"/>
<line x1="2986.0" y1="1322.5" x2="3001.0" y2="1337.5" stroke="#666" stroke-width="1.3" />
<line x1="3001.0" y1="1322.5" x2="2986.0" y2="1337.5" stroke="#666" stroke-width="1.3" />
<rect x="2719.5" y="1370.5" width="55.5" height="25.5" fill="#fff" stroke="#7a7a7a" stroke-width="1.2"/>
<circle cx="2980" cy="1381.5" r="11.5" fill="url(#ghelp)"/>
<rect x="2719.5" y="1411.0" width="55.5" height="25.5" fill="#fff" stroke="#7a7a7a" stroke-width="1.2"/>
<rect x="2888.5" y="1411.0" width="55.5" height="25.5" fill="#fff" stroke="#7a7a7a" stroke-width="1.2"/>
<rect x="2611.0" y="1444.5" width="413.0" height="37.0" fill="none" stroke="#dcdcdc" stroke-width="1.2"/>
<rect x="2615.5" y="1455.5" width="18.5" height="18.0" fill="#fff" stroke="#333" stroke-width="1.3"/>
<rect x="2780.5" y="1455.5" width="18.5" height="18.0" fill="#fff" stroke="#333" stroke-width="1.3"/>
<rect x="2611.0" y="1528.0" width="196.0" height="58.0" fill="none" stroke="#dcdcdc" stroke-width="1.2"/>
<rect x="2627.5" y="1543.5" width="169.0" height="32.5" fill="#fff" stroke="#7a7a7a" stroke-width="1.2"/>
<path d="M2777.5 1557.0 L2784.0 1563.5 L2790.5 1557.0" stroke="#444" stroke-width="1.5" fill="none" stroke-linejoin="round" />
<rect x="2822.5" y="1528.0" width="197.0" height="58.0" fill="none" stroke="#dcdcdc" stroke-width="1.2"/>
<rect x="2839.0" y="1543.5" width="169.0" height="32.5" fill="#fff" stroke="#7a7a7a" stroke-width="1.2"/>
<path d="M2989.0 1557.0 L2995.5 1563.5 L3002.0 1557.0" stroke="#444" stroke-width="1.5" fill="none" stroke-linejoin="round" />
<rect x="2790.5" y="1597.5" width="18.5" height="18.5" fill="#fff" stroke="#333" stroke-width="1.3"/>
<path d="M2794.0 1606.5 L2798.0 1611.5 L2805.5 1601.5" stroke="#444" stroke-width="1.8" fill="none" stroke-linejoin="round" />
<rect x="2921.0" y="1597.5" width="18.5" height="18.5" fill="#fff" stroke="#333" stroke-width="1.3"/>
<path d="M2924.5 1606.5 L2928.5 1611.5 L2936.0 1601.5" stroke="#444" stroke-width="1.8" fill="none" stroke-linejoin="round" />
<rect x="2790.5" y="1634.0" width="18.5" height="18.5" fill="#fff" stroke="#333" stroke-width="1.3"/>
<path d="M2794.0 1643.0 L2798.0 1648.0 L2805.5 1638.0" stroke="#444" stroke-width="1.8" fill="none" stroke-linejoin="round" />
<rect x="2921.0" y="1634.0" width="18.5" height="18.5" fill="#fff" stroke="#333" stroke-width="1.3"/>
<path d="M2924.5 1643.0 L2928.5 1648.0 L2936.0 1638.0" stroke="#444" stroke-width="1.8" fill="none" stroke-linejoin="round" />
<rect x="2790.5" y="1670.0" width="18.5" height="18.5" fill="#fff" stroke="#333" stroke-width="1.3"/>
<path d="M2794.0 1679.0 L2798.0 1684.0 L2805.5 1674.0" stroke="#444" stroke-width="1.8" fill="none" stroke-linejoin="round" />
<rect x="2921.0" y="1670.0" width="18.5" height="18.5" fill="#fff" stroke="#333" stroke-width="1.3"/>
<path d="M2924.5 1679.0 L2928.5 1684.0 L2936.0 1674.0" stroke="#444" stroke-width="1.8" fill="none" stroke-linejoin="round" />
<rect x="2611.5" y="1696.5" width="415.5" height="133.0" fill="#fff" stroke="#828790" stroke-width="1.3"/>
<line x1="2660.5" y1="1699.0" x2="2660.5" y2="1734.0" stroke="#e5e5e5" stroke-width="1.2" />
<line x1="2750.5" y1="1699.0" x2="2750.5" y2="1734.0" stroke="#e5e5e5" stroke-width="1.2" />
<line x1="2840.5" y1="1699.0" x2="2840.5" y2="1734.0" stroke="#e5e5e5" stroke-width="1.2" />
<line x1="2930.5" y1="1699.0" x2="2930.5" y2="1734.0" stroke="#e5e5e5" stroke-width="1.2" />
<rect x="2614.0" y="1734.5" width="317.5" height="28.2" fill="#3399ff" />
<rect x="2933.5" y="1735.5" width="62.0" height="26.0" fill="#f0f0f0" />
<line x1="2933.5" y1="1761.5" x2="2996.0" y2="1761.5" stroke="#a0a0a0" stroke-width="1.2" />
<line x1="2995.5" y1="1735.5" x2="2995.5" y2="1761.5" stroke="#a0a0a0" stroke-width="1.2" />
<rect x="2933.5" y="1763.7" width="62.0" height="26.0" fill="#f0f0f0" />
<line x1="2933.5" y1="1789.7" x2="2996.0" y2="1789.7" stroke="#a0a0a0" stroke-width="1.2" />
<line x1="2995.5" y1="1763.7" x2="2995.5" y2="1789.7" stroke="#a0a0a0" stroke-width="1.2" />
<rect x="2933.5" y="1791.9" width="62.0" height="26.0" fill="#f0f0f0" />
<line x1="2933.5" y1="1817.9" x2="2996.0" y2="1817.9" stroke="#a0a0a0" stroke-width="1.2" />
<line x1="2995.5" y1="1791.9" x2="2995.5" y2="1817.9" stroke="#a0a0a0" stroke-width="1.2" />
<rect x="2933.5" y="1820.1" width="62.0" height="26.0" fill="#f0f0f0" />
<line x1="2933.5" y1="1846.1" x2="2996.0" y2="1846.1" stroke="#a0a0a0" stroke-width="1.2" />
<line x1="2995.5" y1="1820.1" x2="2995.5" y2="1846.1" stroke="#a0a0a0" stroke-width="1.2" />
<rect x="3000.5" y="1699.0" width="23.0" height="130.0" fill="#f0f0f0" />
<rect x="3000.5" y="1724.0" width="23.0" height="25.5" fill="#cdcdcd" />
<path d="M3006.0 1715.0 L3012.0 1709.0 L3018.0 1715.0" stroke="#555" stroke-width="2" fill="none" stroke-linejoin="round" />
</svg>
<div class="t" style="top:-11.0px;font-size:22px;color:#d42020;font-weight:bold;left:1032.0px;transform:translateX(-50%);font-style:italic;">同花顺</div>
<div class="t" style="top:-10.5px;font-size:21px;color:#444;left:1075.0px;">- A股技术分析</div>
<div class="t" style="top:-8.2px;font-size:19.3px;color:#8b1a8b;left:2380.0px;">午档行情未开启</div>
<div class="t" style="top:-8.2px;font-size:19.3px;color:#8b1a8b;left:2540.0px;">徐国珏</div>
<div class="t" style="top:-9.0px;font-size:19px;color:#fff;left:2772.0px;transform:translateX(-50%);">直播</div>
<div class="t" style="top:-9.0px;font-size:19px;color:#fff;left:2832.0px;transform:translateX(-50%);">委托</div>
<div class="t" style="top:68.0px;font-size:18px;color:#555;left:-1.0px;">窗</div>
<div class="t" style="top:28.0px;font-size:30px;color:#1f63b8;font-weight:bold;left:57.0px;transform:translateX(-50%);">论</div>
<div class="t" style="top:68.0px;font-size:18px;color:#555;left:57.0px;transform:translateX(-50%);">论股</div>
<div class="t" style="top:68.0px;font-size:18px;color:#555;left:116.0px;transform:translateX(-50%);">选股</div>
<div class="t" style="top:29.5px;font-size:18px;color:#1f63b8;left:186.5px;transform:translateX(-50%);">资讯</div>
<div class="t" style="top:62.5px;font-size:18px;color:#1f63b8;left:186.5px;transform:translateX(-50%);">研报</div>
<div class="t" style="top:29.5px;font-size:18px;color:#1f63b8;left:260.0px;transform:translateX(-50%);">竞价</div>
<div class="t" style="top:62.5px;font-size:18px;color:#1f63b8;left:260.0px;transform:translateX(-50%);">预测</div>
<div class="t fr" style="top:29.0px;font-size:19px;color:#1f63b8;font-weight:bold;left:333.0px;transform:translateX(-50%);">BBD</div>
<div class="t" style="top:62.5px;font-size:18px;color:#1f63b8;left:333.0px;transform:translateX(-50%);">资金</div>
<div class="t" style="top:29.5px;font-size:18px;color:#1f63b8;left:406.5px;transform:translateX(-50%);">陆港</div>
<div class="t" style="top:62.5px;font-size:18px;color:#1f63b8;left:406.5px;transform:translateX(-50%);">两融</div>
<div class="t" style="top:68.0px;font-size:18px;color:#555;left:468.5px;transform:translateX(-50%);">热点</div>
<div class="t" style="top:68.0px;font-size:18px;color:#555;left:517.5px;transform:translateX(-50%);">掘金</div>
<div class="t" style="top:68.0px;font-size:18px;color:#555;left:566.5px;transform:translateX(-50%);">龙虎</div>
<div class="t" style="top:68.0px;font-size:18px;color:#555;left:616.5px;transform:translateX(-50%);">数据</div>
<div class="t" style="top:68.0px;font-size:18px;color:#555;left:666.5px;transform:translateX(-50%);">新股</div>
<div class="t" style="top:50.0px;font-size:8.5px;color:#d81818;font-weight:bold;letter-spacing:0.8px;left:468.8px;transform:translateX(-50%);">HOT</div>
<div class="t" style="top:37.8px;font-size:14.5px;color:#5a78b8;font-weight:bold;left:617.0px;transform:translateX(-50%);">PE</div>
<div class="t" style="top:39.8px;font-size:10.5px;color:#eef6ff;letter-spacing:-0.3px;left:667.0px;transform:translateX(-50%);">IPO</div>
<div class="t" style="top:68.0px;font-size:18px;color:#555;left:727.0px;transform:translateX(-50%);">全球</div>
<div class="t" style="top:29.5px;font-size:18px;color:#1f63b8;left:795.5px;transform:translateX(-50%);">板块</div>
<div class="t" style="top:62.5px;font-size:18px;color:#1f63b8;left:795.5px;transform:translateX(-50%);">个股</div>
<div class="t" style="top:29.5px;font-size:18px;color:#1f63b8;left:869.5px;transform:translateX(-50%);">股指</div>
<div class="t" style="top:62.5px;font-size:18px;color:#1f63b8;left:869.5px;transform:translateX(-50%);">指数</div>
<div class="t fr" style="top:29.0px;font-size:19px;color:#1f63b8;font-weight:bold;left:942.5px;transform:translateX(-50%);">ETF</div>
<div class="t" style="top:62.5px;font-size:18px;color:#1f63b8;left:942.5px;transform:translateX(-50%);">基金</div>
<div class="t" style="top:29.5px;font-size:18px;color:#1f63b8;left:1016.0px;transform:translateX(-50%);">债券</div>
<div class="t" style="top:62.5px;font-size:18px;color:#1f63b8;left:1016.0px;transform:translateX(-50%);">期货</div>
<div class="t" style="top:29.5px;font-size:18px;color:#1f63b8;left:1089.5px;transform:translateX(-50%);">外汇</div>
<div class="t" style="top:62.5px;font-size:18px;color:#1f63b8;left:1089.5px;transform:translateX(-50%);">期权</div>
<div class="t" style="top:29.5px;font-size:18px;color:#1f63b8;left:1163.5px;transform:translateX(-50%);">港股</div>
<div class="t" style="top:62.5px;font-size:18px;color:#1f63b8;left:1163.5px;transform:translateX(-50%);">美股</div>
<div class="t" style="top:68.0px;font-size:18px;color:#555;left:1232.0px;transform:translateX(-50%);">自定</div>
<div class="t" style="top:68.0px;font-size:18px;color:#555;left:1300.0px;transform:translateX(-50%);">默认</div>
<div class="t" style="top:97.0px;font-size:18px;color:#c8c8c8;left:60.0px;transform:translateX(-50%);">分时</div>
<div class="t" style="top:97.0px;font-size:18px;color:#fff;left:99.0px;transform:translateX(-50%);">日</div>
<div class="t" style="top:97.0px;font-size:18px;color:#c8c8c8;left:129.8px;transform:translateX(-50%);">周</div>
<div class="t" style="top:97.0px;font-size:18px;color:#c8c8c8;left:159.8px;transform:translateX(-50%);">月</div>
<div class="t" style="top:97.0px;font-size:18px;color:#c8c8c8;left:189.5px;transform:translateX(-50%);">季</div>
<div class="t" style="top:97.0px;font-size:18px;color:#c8c8c8;left:219.2px;transform:translateX(-50%);">年</div>
<div class="t" style="top:97.0px;font-size:18px;color:#c8c8c8;left:254.8px;transform:translateX(-50%);">1分</div>
<div class="t" style="top:97.0px;font-size:18px;color:#c8c8c8;left:295.2px;transform:translateX(-50%);">5分</div>
<div class="t" style="top:97.0px;font-size:18px;color:#c8c8c8;left:340.8px;transform:translateX(-50%);">15分</div>
<div class="t" style="top:97.0px;font-size:18px;color:#c8c8c8;left:391.8px;transform:translateX(-50%);">30分</div>
<div class="t" style="top:97.0px;font-size:18px;color:#c8c8c8;left:442.8px;transform:translateX(-50%);">60分</div>
<div class="t" style="top:96.8px;font-size:18.5px;color:#c8c8c8;left:478.5px;">30s</div>
<div class="t" style="top:97.0px;font-size:18px;color:#c8c8c8;left:575.0px;transform:translateX(-50%);">多周期</div>
<div class="t" style="top:97.0px;font-size:18px;color:#c8c8c8;left:632.0px;transform:translateX(-50%);">设置</div>
<div class="t" style="top:96.8px;font-size:18.5px;color:#c8c8c8;left:1591.3px;transform:translateX(-50%);">发</div>
<div class="t" style="top:96.8px;font-size:18.5px;color:#c8c8c8;left:1620.7px;transform:translateX(-50%);">PK</div>
<div class="t" style="top:96.8px;font-size:18.5px;color:#c8c8c8;left:1648.5px;transform:translateX(-50%);">简</div>
<div class="t" style="top:96.8px;font-size:18.5px;color:#c8c8c8;left:1684.8px;transform:translateX(-50%);">九转</div>
<div class="t" style="top:96.8px;font-size:18.5px;color:#c8c8c8;left:1732.3px;transform:translateX(-50%);">连板</div>
<div class="t" style="top:96.8px;font-size:18.5px;color:#c8c8c8;left:1781.2px;transform:translateX(-50%);">事件</div>
<div class="t" style="top:96.8px;font-size:18.5px;color:#c8c8c8;left:1856.9px;transform:translateX(-50%);">删自选</div>
<div class="t" style="top:96.8px;font-size:18.5px;color:#c8c8c8;left:1911.9px;transform:translateX(-50%);">均线</div>
<div class="t" style="top:96.8px;font-size:18.5px;color:#c8c8c8;left:1957.7px;transform:translateX(-50%);">除权</div>
<div class="t" style="top:96.8px;font-size:18.5px;color:#c8c8c8;left:1996.2px;transform:translateX(-50%);">叠</div>
<div class="t" style="top:96.8px;font-size:18.5px;color:#c8c8c8;left:2025.0px;transform:translateX(-50%);">窗</div>
<div class="t" style="top:96.8px;font-size:18.5px;color:#c8c8c8;left:2061.8px;transform:translateX(-50%);">预测</div>
<div class="t" style="top:96.8px;font-size:18.5px;color:#c8c8c8;left:2109.3px;transform:translateX(-50%);">更多</div>
<div class="t" style="top:126.5px;font-size:18px;color:#c8c8c8;left:8.0px;">日线</div>
<div class="t" style="top:126.5px;font-size:18px;color:#fff;left:57.0px;">中国高科</div>
<div class="t" style="top:127.4px;font-size:17.2px;color:#e8e8e8;left:134.0px;">MA5: 4.07<span style="color:#ff3030">↑</span></div>
<div class="t" style="top:127.4px;font-size:17.2px;color:#f0e000;left:228.0px;">MA10: 4.09<span style="color:#ff3030">↑</span></div>
<div class="t" style="top:127.4px;font-size:17.2px;color:#e070e0;left:333.0px;">MA20: 4.17<span style="color:#30d0e0">↓</span></div>
<div class="t" style="top:127.4px;font-size:17.2px;color:#00d000;left:438.0px;">MA30: 4.16<span style="color:#ff3030">↑</span></div>
<div class="t" style="top:127.4px;font-size:17.2px;color:#10c8e0;left:543.0px;">MA60: 4.10<span style="color:#ff3030">↑</span></div>
<div class="t" style="top:157.0px;font-size:18px;color:#1a1a1a;left:767.0px;">形态源 匹配周期: 231</div>
<div class="t" style="top:157.0px;font-size:18px;color:#1a1a1a;left:1805.0px;">预测图 3周期收益大于2.0%概率</div>
<div class="t" style="top:157.0px;font-size:18px;color:#fff;font-weight:bold;left:2090.0px;transform:translateX(-50%);">59%</div>
<div class="t" style="top:142.8px;font-size:18.5px;color:#ff3030;left:2188.0px;">9.66</div>
<div class="t" style="top:251.8px;font-size:18.5px;color:#ff3030;left:2188.0px;">8.77</div>
<div class="t" style="top:360.8px;font-size:18.5px;color:#ff3030;left:2188.0px;">7.87</div>
<div class="t" style="top:471.8px;font-size:18.5px;color:#ff3030;left:2188.0px;">6.96</div>
<div class="t" style="top:581.8px;font-size:18.5px;color:#ff3030;left:2188.0px;">6.07</div>
<div class="t" style="top:692.8px;font-size:18.5px;color:#ff3030;left:2188.0px;">5.16</div>
<div class="t" style="top:802.8px;font-size:18.5px;color:#ff3030;left:2188.0px;">4.26</div>
<div class="t" style="top:871.5px;font-size:18px;color:#c8c8c8;left:788.0px;">3.67</div>
<div class="t" style="top:332.5px;font-size:18px;color:#c8c8c8;left:1598.0px;">8.09</div>
<div class="t" style="top:891.8px;font-size:18.5px;color:#ff3030;left:2188.0px;">3.53</div>
<div class="t" style="top:902.0px;font-size:18px;color:#fff;left:1543.0px;transform:translateX(-50%);background:#8b0000;line-height:17px;">财</div>
<div class="t" style="top:901.0px;font-size:18px;color:#fff;left:1723.0px;transform:translateX(-50%);background:#8b0000;line-height:17px;">榜</div>
<div class="t" style="top:159.0px;font-size:21px;color:#c8c8c8;left:52.0px;transform:translateX(-50%);">时间</div>
<div class="t fm" style="top:186.5px;font-size:19px;color:#c8c8c8;letter-spacing:-1.3px;left:52.0px;transform:translateX(-50%);">2024</div>
<div class="t fm" style="top:212.0px;font-size:19px;color:#c8c8c8;letter-spacing:-1.3px;left:52.0px;transform:translateX(-50%);">0830</div>
<div class="t" style="top:235.5px;font-size:21px;color:#c8c8c8;left:52.0px;transform:translateX(-50%);">周五</div>
<div class="t" style="top:261.0px;font-size:21px;color:#c8c8c8;left:52.0px;transform:translateX(-50%);">数值</div>
<div class="t fm" style="top:288.5px;font-size:19px;color:#ff3030;letter-spacing:-1.3px;left:52.0px;transform:translateX(-50%);">3.53</div>
<div class="t" style="top:312.0px;font-size:21px;color:#c8c8c8;left:52.0px;transform:translateX(-50%);">开盘价</div>
<div class="t fm" style="top:339.5px;font-size:19px;color:#00e000;letter-spacing:-1.3px;left:52.0px;transform:translateX(-50%);">4.09</div>
<div class="t" style="top:363.0px;font-size:21px;color:#c8c8c8;left:52.0px;transform:translateX(-50%);">最高价</div>
<div class="t fm" style="top:390.5px;font-size:19px;color:#ff3030;letter-spacing:-1.3px;left:52.0px;transform:translateX(-50%);">4.22</div>
<div class="t" style="top:414.0px;font-size:21px;color:#c8c8c8;left:52.0px;transform:translateX(-50%);">最低价</div>
<div class="t fm" style="top:441.5px;font-size:19px;color:#00e000;letter-spacing:-1.3px;left:52.0px;transform:translateX(-50%);">4.06</div>
<div class="t" style="top:465.0px;font-size:21px;color:#c8c8c8;left:52.0px;transform:translateX(-50%);">收盘价</div>
<div class="t fm" style="top:492.5px;font-size:19px;color:#ff3030;letter-spacing:-1.3px;left:52.0px;transform:translateX(-50%);">4.14</div>
<div class="t" style="top:516.0px;font-size:21px;color:#c8c8c8;left:52.0px;transform:translateX(-50%);">涨幅</div>
<div class="t fm" style="top:543.5px;font-size:19px;color:#ff3030;letter-spacing:-1.3px;left:52.0px;transform:translateX(-50%);">+0.98%</div>
<div class="t" style="top:567.0px;font-size:21px;color:#c8c8c8;left:52.0px;transform:translateX(-50%);">开盘</div>
<div class="t" style="top:592.5px;font-size:21px;color:#c8c8c8;left:52.0px;transform:translateX(-50%);">涨幅</div>
<div class="t fm" style="top:620.0px;font-size:19px;color:#00e000;letter-spacing:-1.3px;left:52.0px;transform:translateX(-50%);">-0.24%</div>
<div class="t" style="top:643.5px;font-size:21px;color:#c8c8c8;left:52.0px;transform:translateX(-50%);">振幅</div>
<div class="t fm" style="top:671.0px;font-size:19px;color:#20d8e8;letter-spacing:-1.3px;left:52.0px;transform:translateX(-50%);">3.90%</div>
<div class="t" style="top:694.5px;font-size:21px;color:#c8c8c8;left:52.0px;transform:translateX(-50%);">成交量</div>
<div class="t fm" style="top:722.0px;font-size:19px;color:#20d8e8;letter-spacing:-1.3px;left:52.0px;transform:translateX(-50%);">94221</div>
<div class="t" style="top:745.5px;font-size:21px;color:#c8c8c8;left:52.0px;transform:translateX(-50%);">成交额</div>
<div class="t" style="top:771.0px;font-size:21px;color:#20d8e8;left:52.0px;transform:translateX(-50%);"><span class="mm" style="font-size:19px;letter-spacing:-1.3px">3919</span>万</div>
<div class="t" style="top:796.5px;font-size:21px;color:#c8c8c8;left:52.0px;transform:translateX(-50%);">换手</div>
<div class="t fm" style="top:824.0px;font-size:19px;color:#20d8e8;letter-spacing:-1.3px;left:52.0px;transform:translateX(-50%);">1.61%</div>
<div class="t" style="top:929.5px;font-size:19px;color:#fff;letter-spacing:0.3px;left:11.0px;">市盈率(pe,ttm):&nbsp; 139.80<span style="color:#ff3030">↑</span></div>
<div class="t" style="top:940.8px;font-size:18.5px;color:#ff3030;left:2188.0px;">40.6</div>
<div class="t" style="top:1102.8px;font-size:18.5px;color:#ff3030;left:2188.0px;">-50.9</div>
<div class="t" style="top:1254.0px;font-size:20px;color:#ff3030;left:2187.0px;">×10</div>
<div class="t" style="top:1284.7px;font-size:18px;color:#c8c8c8;left:36.5px;transform:translateX(-50%);">设置</div>
<div class="t" style="top:1284.7px;font-size:18px;color:#c8c8c8;left:102.0px;transform:translateX(-50%);">成交量</div>
<div class="t" style="top:1284.7px;font-size:18px;color:#c8c8c8;left:204.0px;transform:translateX(-50%);">多周期成交量</div>
<div class="t" style="top:1284.7px;font-size:18px;color:#c8c8c8;left:324.5px;transform:translateX(-50%);">虚拟成交量</div>
<div class="t" style="top:1284.7px;font-size:18px;color:#c8c8c8;left:408.5px;transform:translateX(-50%);">金额</div>
<div class="t" style="top:1284.7px;font-size:18px;color:#c8c8c8;left:483.5px;transform:translateX(-50%);">沪深金额</div>
<div class="t" style="top:1284.7px;font-size:18px;color:#c8c8c8;left:567.5px;transform:translateX(-50%);">换手率</div>
<div class="t" style="top:1284.7px;font-size:18px;color:#c8c8c8;left:633.5px;transform:translateX(-50%);">内盘</div>
<div class="t" style="top:1284.7px;font-size:18px;color:#c8c8c8;left:690.0px;transform:translateX(-50%);">外盘</div>
<div class="t" style="top:1284.7px;font-size:18px;color:#c8c8c8;left:781.5px;transform:translateX(-50%);">AI立桩成交量</div>
<div class="t" style="top:1284.7px;font-size:18px;color:#c8c8c8;left:900.0px;transform:translateX(-50%);">盘后成交量</div>
<div class="t" style="top:1284.7px;font-size:18px;color:#fff;left:1012.0px;transform:translateX(-50%);">市盈率(ttm)</div>
<div class="t" style="top:1284.7px;font-size:18px;color:#c8c8c8;left:1142.5px;transform:translateX(-50%);">陆股通持股变化</div>
<div class="t" style="top:1284.7px;font-size:18px;color:#c8c8c8;left:1280.5px;transform:translateX(-50%);">融资融券变化</div>
<div class="t" style="top:1284.7px;font-size:18px;color:#c8c8c8;left:1427.5px;transform:translateX(-50%);">主动大单净流入量</div>
<div class="t" style="top:1284.7px;font-size:18px;color:#c8c8c8;left:1547.5px;transform:translateX(-50%);">陆股通</div>
<div class="t" style="top:1284.7px;font-size:18px;color:#c8c8c8;left:1640.5px;transform:translateX(-50%);">陆股通持股</div>
<div class="t" style="top:1284.7px;font-size:18px;color:#c8c8c8;left:1751.5px;transform:translateX(-50%);">机构探测器</div>
<div class="t" style="top:1284.7px;font-size:18px;color:#c8c8c8;left:1853.5px;transform:translateX(-50%);">神奇电波</div>
<div class="t" style="top:1286.8px;font-size:14.5px;color:#fff;font-weight:bold;letter-spacing:-1px;left:1916.0px;transform:translateX(-50%);">L2</div>
<div class="t" style="top:1284.0px;font-size:18px;color:#c8c8c8;left:1936.0px;">资金抄底</div>
<div class="t" style="top:1314.8px;font-size:17.3px;color:#1030ff;left:8.0px;">分时买卖2</div>
<div class="t" style="top:1314.8px;font-size:17.3px;color:#1030ff;left:96.0px;">主力撤: -0.109<span style="color:#ff3030">↑</span></div>
<div class="t" style="top:1314.8px;font-size:17.3px;color:#f020f0;left:226.0px;">主力进: +0</div>
<div class="t" style="top:1314.8px;font-size:17.3px;color:#ff2020;left:316.0px;">大盘资金进场: +0.031<span style="color:#ff3030">↑</span></div>
<div class="t" style="top:1314.8px;font-size:17.3px;color:#00e000;left:505.0px;">大盘资金撤走: +0<span style="color:#ff3030">↑</span></div>
<div class="t" style="top:1314.8px;font-size:17.3px;color:#f0e000;left:660.0px;">趋势线: +22.64<span style="color:#ff3030">↑</span></div>
<div class="t" style="top:1314.8px;font-size:17.3px;color:#f0f0f0;left:793.0px;">见顶清仓: +0</div>
<div class="t" style="top:1314.0px;font-size:18px;color:#c8c8c8;left:2134.0px;transform:translateX(-50%);">指标说明</div>
<div class="t" style="top:1330.2px;font-size:18.5px;color:#ff3030;left:2187.0px;">+100.0</div>
<div class="t" style="top:1391.2px;font-size:18.5px;color:#ff3030;left:2187.0px;">+72.05</div>
<div class="t" style="top:1452.8px;font-size:18.5px;color:#ff3030;left:2187.0px;">+44.09</div>
<div class="t" style="top:1514.2px;font-size:18.5px;color:#ff3030;left:2187.0px;">+16.14</div>
<div class="t" style="top:1512.0px;font-size:20px;color:#2aa0d8;left:228.0px;">准备</div>
<div class="t" style="top:1512.0px;font-size:20px;color:#2aa0d8;left:435.0px;">准备</div>
<div class="t" style="top:1512.0px;font-size:20px;color:#2aa0d8;left:685.0px;">准备</div>
<div class="t" style="top:1512.0px;font-size:20px;color:#2aa0d8;left:1097.0px;">准备</div>
<div class="t" style="top:1512.0px;font-size:20px;color:#2aa0d8;left:1130.0px;">准备</div>
<div class="t" style="top:1512.0px;font-size:20px;color:#2aa0d8;left:1773.0px;">准备</div>
<div class="t" style="top:1545.5px;font-size:19px;color:#f0e000;left:185.0px;">买入</div>
<div class="t" style="top:1545.5px;font-size:19px;color:#f0e000;left:273.0px;">买入</div>
<div class="t" style="top:1545.5px;font-size:19px;color:#f0e000;left:377.0px;">买入</div>
<div class="t" style="top:1545.5px;font-size:19px;color:#f0e000;left:433.0px;">买入</div>
<div class="t" style="top:1545.5px;font-size:19px;color:#f0e000;left:722.0px;">买入</div>
<div class="t" style="top:1545.5px;font-size:19px;color:#f0e000;left:778.0px;">买入</div>
<div class="t" style="top:1545.5px;font-size:19px;color:#f0e000;left:1234.0px;">买入</div>
<div class="t" style="top:1359.0px;font-size:20px;color:#f0e000;left:534.0px;">逃顶</div>
<div class="t" style="top:1590.8px;font-size:18.5px;color:#ff3030;left:9.0px;">06</div>
<div class="t" style="top:1590.8px;font-size:18.5px;color:#ff3030;left:95.0px;">07</div>
<div class="t" style="top:1590.8px;font-size:18.5px;color:#ff3030;left:189.0px;">08</div>
<div class="t" style="top:1590.8px;font-size:18.5px;color:#ff3030;left:292.5px;">09</div>
<div class="t" style="top:1590.8px;font-size:18.5px;color:#ff3030;left:382.0px;">10</div>
<div class="t" style="top:1590.8px;font-size:18.5px;color:#ff3030;left:459.0px;">11</div>
<div class="t" style="top:1590.8px;font-size:18.5px;color:#ff3030;left:558.5px;">12</div>
<div class="t" style="top:1590.8px;font-size:18.5px;color:#ff3030;left:652.5px;">01</div>
<div class="t" style="top:1590.8px;font-size:18.5px;color:#ff3030;left:751.5px;">02</div>
<div class="t" style="top:1590.8px;font-size:18.5px;color:#ff3030;left:817.5px;">03</div>
<div class="t" style="top:1590.8px;font-size:18.5px;color:#ff3030;left:913.5px;">04</div>
<div class="t" style="top:1590.8px;font-size:18.5px;color:#ff3030;left:1003.0px;">05</div>
<div class="t" style="top:1590.8px;font-size:18.5px;color:#ff3030;left:1094.0px;">06</div>
<div class="t" style="top:1590.8px;font-size:18.5px;color:#ff3030;left:1178.5px;">07</div>
<div class="t" style="top:1590.8px;font-size:18.5px;color:#ff3030;left:1282.0px;">08</div>
<div class="t" style="top:1590.8px;font-size:18.5px;color:#ff3030;left:1547.5px;">11</div>
<div class="t" style="top:1590.8px;font-size:18.5px;color:#ff3030;left:1642.0px;">12</div>
<div class="t" style="top:1590.8px;font-size:18.5px;color:#ff3030;left:1741.0px;">01</div>
<div class="t" style="top:1590.8px;font-size:18.5px;color:#ff3030;left:1849.0px;">02</div>
<div class="t" style="top:1590.8px;font-size:18.5px;color:#ff3030;left:1975.5px;">03</div>
<div class="t" style="top:1590.8px;font-size:18.5px;color:#ff3030;left:2114.5px;">04</div>
<div class="t" style="top:1591.2px;font-size:18.5px;color:#ff3030;left:1379.0px;">2024-08-30,五</div>
<div class="t" style="top:1616.5px;font-size:18px;color:#c8c8c8;left:30.2px;transform:translateX(-50%);">设置</div>
<div class="t" style="top:1619.0px;font-size:13px;color:#fff;font-weight:bold;letter-spacing:-0.5px;left:86.0px;transform:translateX(-50%);">NEW</div>
<div class="t" style="top:1616.5px;font-size:18px;color:#c8c8c8;left:111.0px;">指标广场</div>
<div class="t" style="top:1616.5px;font-size:18px;color:#c8c8c8;left:228.5px;transform:translateX(-50%);">MACD</div>
<div class="t" style="top:1616.5px;font-size:18px;color:#c8c8c8;left:292.0px;transform:translateX(-50%);">KDJ</div>
<div class="t" style="top:1616.5px;font-size:18px;color:#c8c8c8;left:346.0px;transform:translateX(-50%);">RSI</div>
<div class="t" style="top:1616.5px;font-size:18px;color:#c8c8c8;left:405.0px;transform:translateX(-50%);">BOLL</div>
<div class="t" style="top:1616.5px;font-size:18px;color:#c8c8c8;left:466.5px;transform:translateX(-50%);">主力</div>
<div class="t" style="top:1616.5px;font-size:18px;color:#c8c8c8;left:538.5px;transform:translateX(-50%);">LAYLM2</div>
<div class="t" style="top:1616.5px;font-size:18px;color:#c8c8c8;left:655.0px;transform:translateX(-50%);">主力监测66666</div>
<div class="t" style="top:1616.5px;font-size:18px;color:#c8c8c8;left:766.0px;transform:translateX(-50%);">圆月线</div>
<div class="t" style="top:1616.5px;font-size:18px;color:#c8c8c8;left:850.0px;transform:translateX(-50%);">主力拉升</div>
<div class="t" style="top:1616.5px;font-size:18px;color:#c8c8c8;left:954.5px;transform:translateX(-50%);">BS—买卖点</div>
<div class="t" style="top:1616.5px;font-size:18px;color:#fff;left:1085.0px;transform:translateX(-50%);">分时买卖2</div>
<div class="t" style="top:1616.5px;font-size:18px;color:#c8c8c8;left:1185.5px;transform:translateX(-50%);">主力吸筹</div>
<div class="t" style="top:1646.0px;font-size:18px;color:#fff;left:55.0px;transform:translateX(-50%);">个股新闻</div>
<div class="t" style="top:1646.0px;font-size:18px;color:#c8c8c8;left:149.0px;transform:translateX(-50%);">个股公告</div>
<div class="t" style="top:1646.0px;font-size:18px;color:#c8c8c8;left:243.5px;transform:translateX(-50%);">个股研报</div>
<div class="t" style="top:1646.0px;font-size:18px;color:#c8c8c8;left:338.0px;transform:translateX(-50%);">个股扫雷</div>
<div class="t" style="top:1646.0px;font-size:18px;color:#c8c8c8;left:455.0px;transform:translateX(-50%);">行业资讯[教育]</div>
<div class="t" style="top:1646.0px;font-size:18px;color:#c8c8c8;left:554.0px;transform:translateX(-50%);">社区</div>
<div class="t" style="top:1646.0px;font-size:18px;color:#c8c8c8;left:630.0px;transform:translateX(-50%);">关联报价</div>
<div class="t" style="top:1646.0px;font-size:18px;color:#c8c8c8;left:732.0px;transform:translateX(-50%);">AI相似个股</div>
<div class="t" style="top:1646.0px;font-size:18px;color:#c8c8c8;left:834.5px;transform:translateX(-50%);">商品价格</div>
<div class="t" style="top:1685.0px;font-size:20px;color:#2aa0d8;left:17.0px;">[</div>
<div class="t" style="top:1686.0px;font-size:18px;color:#2aa0d8;left:43.5px;">观点</div>
<div class="t" style="top:1685.0px;font-size:20px;color:#2aa0d8;left:100.0px;">]</div>
<div class="t" style="top:1684.0px;font-size:22px;color:#f2f27c;letter-spacing:0.5px;left:116.0px;">技术分析：下山滑坡形态出现，中国高科风险会增大吗？</div>
<div class="t" style="top:1686.5px;font-size:19px;color:#a8a8a8;right:1940.0px;">19:08</div>
<div class="t" style="top:1716.5px;font-size:20px;color:#2aa0d8;left:17.0px;">[</div>
<div class="t" style="top:1717.5px;font-size:18px;color:#2aa0d8;left:43.5px;">资讯</div>
<div class="t" style="top:1716.5px;font-size:20px;color:#2aa0d8;left:100.0px;">]</div>
<div class="t" style="top:1715.5px;font-size:22px;color:#f2f27c;letter-spacing:0.5px;left:116.0px;">教育强国建设规划纲要印发 2025年有望是AI+教育成果落地验证的窗口期</div>
<div class="t" style="top:1718.0px;font-size:19px;color:#a8a8a8;right:1940.0px;">08:41</div>
<div class="t" style="top:1748.0px;font-size:20px;color:#2aa0d8;left:17.0px;">[</div>
<div class="t" style="top:1749.0px;font-size:18px;color:#2aa0d8;left:43.5px;">资讯</div>
<div class="t" style="top:1748.0px;font-size:20px;color:#2aa0d8;left:100.0px;">]</div>
<div class="t" style="top:1747.0px;font-size:22px;color:#f2f27c;letter-spacing:0.5px;left:116.0px;">中国高科：1月17日获融资买入318.43万元，占当日流入资金比例11.07%</div>
<div class="t" style="top:1749.5px;font-size:19px;color:#a8a8a8;right:1940.0px;">07:40</div>
<div class="t" style="top:1779.5px;font-size:20px;color:#2aa0d8;left:17.0px;">[</div>
<div class="t" style="top:1780.5px;font-size:18px;color:#2aa0d8;left:43.5px;">资讯</div>
<div class="t" style="top:1779.5px;font-size:20px;color:#2aa0d8;left:100.0px;">]</div>
<div class="t" style="top:1778.5px;font-size:22px;color:#f2f27c;letter-spacing:0.5px;left:116.0px;">行业周报|教育指数涨5.47%, 跑赢上证指数3.16%</div>
<div class="t" style="top:1781.0px;font-size:19px;color:#a8a8a8;right:1940.0px;">01-17</div>
<div class="t" style="top:1811.0px;font-size:20px;color:#2aa0d8;left:17.0px;">[</div>
<div class="t" style="top:1812.0px;font-size:18px;color:#2aa0d8;left:43.5px;">资讯</div>
<div class="t" style="top:1811.0px;font-size:20px;color:#2aa0d8;left:100.0px;">]</div>
<div class="t" style="top:1810.0px;font-size:22px;color:#f2f27c;letter-spacing:0.5px;left:116.0px;">中国高科连续2日融资买入额增长率超50%，多头加速建仓</div>
<div class="t" style="top:1812.5px;font-size:19px;color:#a8a8a8;right:1940.0px;">01-16</div>
<div class="t" style="top:1685.0px;font-size:20px;color:#2aa0d8;left:1145.0px;">[</div>
<div class="t" style="top:1686.0px;font-size:18px;color:#2aa0d8;left:1171.5px;">公告</div>
<div class="t" style="top:1685.0px;font-size:20px;color:#2aa0d8;left:1228.0px;">]</div>
<div class="t" style="top:1684.0px;font-size:22px;color:#f2f27c;letter-spacing:0.5px;left:1244.0px;">中国高科：中国高科投资者关系活动记录表</div>
<div class="t" style="top:1686.5px;font-size:19px;color:#a8a8a8;right:814.0px;">12-26</div>
<div class="t" style="top:1716.5px;font-size:20px;color:#2aa0d8;left:1145.0px;">[</div>
<div class="t" style="top:1717.5px;font-size:18px;color:#2aa0d8;left:1171.5px;">公告</div>
<div class="t" style="top:1716.5px;font-size:20px;color:#2aa0d8;left:1228.0px;">]</div>
<div class="t" style="top:1715.5px;font-size:22px;color:#f2f27c;letter-spacing:0.5px;left:1244.0px;">中国高科：中国高科2024年第三次临时股东大会决议公告</div>
<div class="t" style="top:1718.0px;font-size:19px;color:#a8a8a8;right:814.0px;">11-16</div>
<div class="t" style="top:1748.0px;font-size:20px;color:#2aa0d8;left:1145.0px;">[</div>
<div class="t" style="top:1749.0px;font-size:18px;color:#2aa0d8;left:1171.5px;">公告</div>
<div class="t" style="top:1748.0px;font-size:20px;color:#2aa0d8;left:1228.0px;">]</div>
<div class="t" style="top:1747.0px;font-size:22px;color:#f2f27c;letter-spacing:0.5px;left:1244.0px;">中国高科：中国高科2024年第三次临时股东大会法律意见书</div>
<div class="t" style="top:1749.5px;font-size:19px;color:#a8a8a8;right:814.0px;">11-16</div>
<div class="t" style="top:1779.5px;font-size:20px;color:#2aa0d8;left:1145.0px;">[</div>
<div class="t" style="top:1780.5px;font-size:18px;color:#2aa0d8;left:1171.5px;">公告</div>
<div class="t" style="top:1779.5px;font-size:20px;color:#2aa0d8;left:1228.0px;">]</div>
<div class="t" style="top:1778.5px;font-size:22px;color:#f2f27c;letter-spacing:0.5px;left:1244.0px;">中国高科：中国高科关于公开挂牌转让控股孙公司股权的进展公告</div>
<div class="t" style="top:1781.0px;font-size:19px;color:#a8a8a8;right:814.0px;">11-16</div>
<div class="t" style="top:1811.0px;font-size:20px;color:#2aa0d8;left:1145.0px;">[</div>
<div class="t" style="top:1812.0px;font-size:18px;color:#2aa0d8;left:1171.5px;">公告</div>
<div class="t" style="top:1811.0px;font-size:20px;color:#2aa0d8;left:1228.0px;">]</div>
<div class="t" style="top:1810.0px;font-size:22px;color:#f2f27c;letter-spacing:0.5px;left:1244.0px;">中国高科：中国高科集团股份有限公司投资者关系活动记录表</div>
<div class="t" style="top:1812.5px;font-size:19px;color:#a8a8a8;right:814.0px;">11-11</div>
<div class="t" style="top:103.5px;font-size:15px;color:#f0e040;font-weight:bold;left:2270.0px;">R</div>
<div class="t fr" style="top:94.5px;font-size:31px;color:#fff;font-weight:bold;letter-spacing:1px;left:2444.0px;transform:translateX(-50%);">中国高科 600730</div>
<div class="t fr" style="top:132.0px;font-size:40px;color:#e83030;left:2337.0px;">6. 14</div>
<div class="t" style="top:147.0px;font-size:20px;color:#ff3030;font-weight:bold;left:2430.0px;">+0.01</div>
<div class="t" style="top:147.0px;font-size:20px;color:#ff3030;font-weight:bold;left:2500.0px;">+0.16%</div>
<div class="t" style="top:179.5px;font-size:24px;color:#c8c8c8;left:2265.0px;">委比</div>
<div class="t" style="top:182.0px;font-size:20px;color:#ff3030;font-weight:bold;left:2333.0px;">+26.48%</div>
<div class="t" style="top:182.0px;font-size:20px;color:#ff3030;font-weight:bold;left:2457.0px;">1200</div>
<div class="t" style="top:182.0px;font-size:19px;color:#fff;left:2567.0px;transform:translateX(-50%);">买</div>
<div class="t" style="top:182.0px;font-size:19px;color:#fff;left:2615.0px;transform:translateX(-50%);">卖</div>
<div class="t" style="top:219.8px;font-size:19.5px;color:#d8d8d8;font-weight:bold;left:2294.0px;">5</div>
<div class="t" style="top:219.8px;font-size:19.5px;color:#ff3030;font-weight:bold;letter-spacing:0.8px;left:2411.0px;">6.18</div>
<div class="t" style="top:219.8px;font-size:19.5px;color:#20d8e8;font-weight:bold;letter-spacing:0.8px;right:391.0px;">588</div>
<div class="t" style="top:254.4px;font-size:19.5px;color:#d8d8d8;font-weight:bold;left:2294.0px;">4</div>
<div class="t" style="top:254.4px;font-size:19.5px;color:#ff3030;font-weight:bold;letter-spacing:0.8px;left:2411.0px;">6.17</div>
<div class="t" style="top:254.4px;font-size:19.5px;color:#20d8e8;font-weight:bold;letter-spacing:0.8px;right:391.0px;">187</div>
<div class="t" style="top:289.1px;font-size:19.5px;color:#d8d8d8;font-weight:bold;left:2294.0px;">3</div>
<div class="t" style="top:289.1px;font-size:19.5px;color:#ff3030;font-weight:bold;letter-spacing:0.8px;left:2411.0px;">6.16</div>
<div class="t" style="top:289.1px;font-size:19.5px;color:#20d8e8;font-weight:bold;letter-spacing:0.8px;right:391.0px;">292</div>
<div class="t" style="top:323.9px;font-size:19.5px;color:#d8d8d8;font-weight:bold;left:2294.0px;">2</div>
<div class="t" style="top:323.9px;font-size:19.5px;color:#ff3030;font-weight:bold;letter-spacing:0.8px;left:2411.0px;">6.15</div>
<div class="t" style="top:323.9px;font-size:19.5px;color:#20d8e8;font-weight:bold;letter-spacing:0.8px;right:391.0px;">379</div>
<div class="t" style="top:358.6px;font-size:19.5px;color:#d8d8d8;font-weight:bold;left:2294.0px;">1</div>
<div class="t" style="top:358.6px;font-size:19.5px;color:#ff3030;font-weight:bold;letter-spacing:0.8px;left:2411.0px;">6.14</div>
<div class="t" style="top:358.6px;font-size:19.5px;color:#20d8e8;font-weight:bold;letter-spacing:0.8px;right:391.0px;">220</div>
<div class="t" style="top:400.8px;font-size:19.5px;color:#d8d8d8;font-weight:bold;left:2294.0px;">1</div>
<div class="t" style="top:400.8px;font-size:19.5px;color:#fff;font-weight:bold;letter-spacing:0.8px;left:2411.0px;">6.13</div>
<div class="t" style="top:400.8px;font-size:19.5px;color:#20d8e8;font-weight:bold;letter-spacing:0.8px;right:391.0px;">684</div>
<div class="t" style="top:435.6px;font-size:19.5px;color:#d8d8d8;font-weight:bold;left:2294.0px;">2</div>
<div class="t" style="top:435.6px;font-size:19.5px;color:#00e000;font-weight:bold;letter-spacing:0.8px;left:2411.0px;">6.12</div>
<div class="t" style="top:435.6px;font-size:19.5px;color:#20d8e8;font-weight:bold;letter-spacing:0.8px;right:391.0px;">381</div>
<div class="t" style="top:470.6px;font-size:19.5px;color:#d8d8d8;font-weight:bold;left:2294.0px;">3</div>
<div class="t" style="top:470.6px;font-size:19.5px;color:#00e000;font-weight:bold;letter-spacing:0.8px;left:2411.0px;">6.11</div>
<div class="t" style="top:470.6px;font-size:19.5px;color:#20d8e8;font-weight:bold;letter-spacing:0.8px;right:391.0px;">765</div>
<div class="t" style="top:505.5px;font-size:19.5px;color:#d8d8d8;font-weight:bold;left:2294.0px;">4</div>
<div class="t" style="top:505.5px;font-size:19.5px;color:#00e000;font-weight:bold;letter-spacing:0.8px;left:2411.0px;">6.10</div>
<div class="t" style="top:505.5px;font-size:19.5px;color:#20d8e8;font-weight:bold;letter-spacing:0.8px;right:391.0px;">646</div>
<div class="t" style="top:540.4px;font-size:19.5px;color:#d8d8d8;font-weight:bold;left:2294.0px;">5</div>
<div class="t" style="top:540.4px;font-size:19.5px;color:#00e000;font-weight:bold;letter-spacing:0.8px;left:2411.0px;">6.09</div>
<div class="t" style="top:540.4px;font-size:19.5px;color:#20d8e8;font-weight:bold;letter-spacing:0.8px;right:391.0px;">390</div>
<div class="t" style="top:258.5px;font-size:23px;color:#c8c8c8;left:2277.0px;transform:translateX(-50%);">卖</div>
<div class="t" style="top:315.5px;font-size:23px;color:#c8c8c8;left:2277.0px;transform:translateX(-50%);">盘</div>
<div class="t" style="top:442.5px;font-size:23px;color:#c8c8c8;left:2277.0px;transform:translateX(-50%);">买</div>
<div class="t" style="top:499.0px;font-size:23px;color:#c8c8c8;left:2277.0px;transform:translateX(-50%);">盘</div>
<div class="t" style="top:574.0px;font-size:24px;color:#f0f060;left:2265.0px;"><b style="font-size:19.5px">6.08</b>元有</div>
<div class="t" style="top:574.0px;font-size:24px;color:#ff3030;left:2362.0px;"><b style="font-size:19.5px">535</b>手</div>
<div class="t" style="top:574.0px;font-size:24px;color:#f0f060;left:2428.0px;">大买单</div>
<div class="t" style="top:574.0px;font-size:24px;color:#f0e020;right:392.0px;">点击查看</div>
<div class="t" style="top:606.0px;font-size:23px;color:#c8c8c8;left:2266.0px;">最新</div>
<div class="t" style="top:607.8px;font-size:19.5px;color:#ff3030;font-weight:bold;letter-spacing:0.5px;right:583.0px;">6.14</div>
<div class="t" style="top:606.0px;font-size:23px;color:#c8c8c8;left:2455.0px;">开盘</div>
<div class="t" style="top:607.8px;font-size:19.5px;color:#ff3030;font-weight:bold;letter-spacing:0.5px;right:392.0px;">6.34</div>
<div class="t" style="top:633.0px;font-size:23px;color:#c8c8c8;left:2266.0px;">涨跌</div>
<div class="t" style="top:634.7px;font-size:19.5px;color:#ff3030;font-weight:bold;letter-spacing:0.5px;right:583.0px;">+0.01</div>
<div class="t" style="top:633.0px;font-size:23px;color:#c8c8c8;left:2455.0px;">最高</div>
<div class="t" style="top:634.7px;font-size:19.5px;color:#ff3030;font-weight:bold;letter-spacing:0.5px;right:392.0px;">6.40</div>
<div class="t" style="top:659.9px;font-size:23px;color:#c8c8c8;left:2266.0px;">涨幅</div>
<div class="t" style="top:661.6px;font-size:19.5px;color:#ff3030;font-weight:bold;letter-spacing:0.5px;right:583.0px;">+0.16%</div>
<div class="t" style="top:659.9px;font-size:23px;color:#c8c8c8;left:2455.0px;">最低</div>
<div class="t" style="top:661.6px;font-size:19.5px;color:#00e000;font-weight:bold;letter-spacing:0.5px;right:392.0px;">6.09</div>
<div class="t" style="top:686.9px;font-size:23px;color:#c8c8c8;left:2266.0px;">振幅</div>
<div class="t" style="top:688.6px;font-size:19.5px;color:#20d8e8;font-weight:bold;letter-spacing:0.5px;right:583.0px;">5.06%</div>
<div class="t" style="top:686.9px;font-size:23px;color:#c8c8c8;left:2455.0px;">量比</div>
<div class="t" style="top:688.6px;font-size:19.5px;color:#ff3030;font-weight:bold;letter-spacing:0.5px;right:392.0px;">1.38</div>
<div class="t" style="top:713.8px;font-size:23px;color:#c8c8c8;left:2266.0px;">总手</div>
<div class="t" style="top:715.5px;font-size:19.5px;color:#20d8e8;font-weight:bold;letter-spacing:0.5px;right:583.0px;">18.95<span style="font-weight:normal;font-size:23px">万</span></div>
<div class="t" style="top:713.8px;font-size:23px;color:#c8c8c8;left:2455.0px;">换手</div>
<div class="t" style="top:715.5px;font-size:19.5px;color:#20d8e8;font-weight:bold;letter-spacing:0.5px;right:392.0px;">3.23%</div>
<div class="t" style="top:740.8px;font-size:23px;color:#c8c8c8;left:2266.0px;">金额</div>
<div class="t" style="top:742.5px;font-size:19.5px;color:#20d8e8;font-weight:bold;letter-spacing:0.5px;right:583.0px;">1.17<span style="font-weight:normal;font-size:23px">亿</span></div>
<div class="t" style="top:740.8px;font-size:23px;color:#c8c8c8;left:2455.0px;">换手(实)</div>
<div class="t" style="top:742.5px;font-size:19.5px;color:#20d8e8;font-weight:bold;letter-spacing:0.5px;right:392.0px;">4.04%</div>
<div class="t" style="top:767.7px;font-size:23px;color:#c8c8c8;left:2266.0px;">涨停</div>
<div class="t" style="top:769.5px;font-size:19.5px;color:#ff3030;font-weight:bold;letter-spacing:0.5px;right:583.0px;">6.74</div>
<div class="t" style="top:767.7px;font-size:23px;color:#c8c8c8;left:2455.0px;">跌停</div>
<div class="t" style="top:769.5px;font-size:19.5px;color:#00e000;font-weight:bold;letter-spacing:0.5px;right:392.0px;">5.52</div>
<div class="t" style="top:794.6px;font-size:23px;color:#c8c8c8;left:2266.0px;">外盘</div>
<div class="t" style="top:796.4px;font-size:19.5px;color:#ff3030;font-weight:bold;letter-spacing:0.5px;right:583.0px;">80999</div>
<div class="t" style="top:794.6px;font-size:23px;color:#c8c8c8;left:2455.0px;">内盘</div>
<div class="t" style="top:796.4px;font-size:19.5px;color:#00e000;font-weight:bold;letter-spacing:0.5px;right:392.0px;">10.85<span style="font-weight:normal;font-size:23px">万</span></div>
<div class="t" style="top:821.6px;font-size:23px;color:#c8c8c8;left:2266.0px;">总市值</div>
<div class="t" style="top:823.4px;font-size:19.5px;color:#20d8e8;font-weight:bold;letter-spacing:0.5px;right:583.0px;">36.02<span style="font-weight:normal;font-size:23px">亿</span></div>
<div class="t" style="top:821.6px;font-size:23px;color:#c8c8c8;left:2455.0px;">流通值</div>
<div class="t" style="top:823.4px;font-size:19.5px;color:#20d8e8;font-weight:bold;letter-spacing:0.5px;right:392.0px;">36.02<span style="font-weight:normal;font-size:23px">亿</span></div>
<div class="t" style="top:848.5px;font-size:23px;color:#c8c8c8;left:2266.0px;">总股本</div>
<div class="t" style="top:850.3px;font-size:19.5px;color:#20d8e8;font-weight:bold;letter-spacing:0.5px;right:583.0px;">5.87<span style="font-weight:normal;font-size:23px">亿</span></div>
<div class="t" style="top:848.5px;font-size:23px;color:#c8c8c8;left:2455.0px;">流通股</div>
<div class="t" style="top:850.3px;font-size:19.5px;color:#20d8e8;font-weight:bold;letter-spacing:0.5px;right:392.0px;">5.87<span style="font-weight:normal;font-size:23px">亿</span></div>
<div class="t" style="top:875.5px;font-size:23px;color:#c8c8c8;left:2266.0px;">市盈(静)</div>
<div class="t" style="top:877.2px;font-size:19.5px;color:#c8c8c8;font-weight:bold;letter-spacing:0.5px;right:583.0px;"><span style="font-weight:normal;font-size:23px">亏</span><span style="font-weight:normal;font-size:23px">损</span></div>
<div class="t" style="top:875.5px;font-size:23px;color:#c8c8c8;left:2455.0px;">市盈(TTM)</div>
<div class="t" style="top:877.2px;font-size:19.5px;color:#d8d8d8;font-weight:bold;letter-spacing:0.5px;right:392.0px;">191.7</div>
<div class="t" style="top:911.2px;font-size:19.5px;color:#d8d8d8;font-weight:bold;letter-spacing:0.4px;left:2266.0px;">14:55</div>
<div class="t" style="top:911.2px;font-size:19.5px;color:#fff;font-weight:bold;letter-spacing:0.5px;left:2413.0px;">6.13</div>
<div class="t" style="top:911.2px;font-size:19.5px;color:#00e000;font-weight:bold;letter-spacing:0.5px;right:484.0px;">10</div>
<div class="t" style="top:911.2px;font-size:19.5px;color:#20d8e8;font-weight:bold;letter-spacing:0.5px;right:391.0px;">10</div>
<div class="t" style="top:946.6px;font-size:19.5px;color:#d8d8d8;font-weight:bold;letter-spacing:0.4px;left:2266.0px;">14:55</div>
<div class="t" style="top:946.6px;font-size:19.5px;color:#fff;font-weight:bold;letter-spacing:0.5px;left:2413.0px;">6.13</div>
<div class="t" style="top:946.6px;font-size:19.5px;color:#00e000;font-weight:bold;letter-spacing:0.5px;right:484.0px;">10</div>
<div class="t" style="top:946.6px;font-size:19.5px;color:#20d8e8;font-weight:bold;letter-spacing:0.5px;right:391.0px;">1</div>
<div class="t" style="top:982.0px;font-size:19.5px;color:#d8d8d8;font-weight:bold;letter-spacing:0.4px;left:2266.0px;">14:55</div>
<div class="t" style="top:982.0px;font-size:19.5px;color:#fff;font-weight:bold;letter-spacing:0.5px;left:2413.0px;">6.13</div>
<div class="t" style="top:982.0px;font-size:19.5px;color:#00e000;font-weight:bold;letter-spacing:0.5px;right:484.0px;">76</div>
<div class="t" style="top:982.0px;font-size:19.5px;color:#20d8e8;font-weight:bold;letter-spacing:0.5px;right:391.0px;">2</div>
<div class="t" style="top:1017.5px;font-size:19.5px;color:#d8d8d8;font-weight:bold;letter-spacing:0.4px;left:2266.0px;">14:55</div>
<div class="t" style="top:1017.5px;font-size:19.5px;color:#fff;font-weight:bold;letter-spacing:0.5px;left:2413.0px;">6.13</div>
<div class="t" style="top:1017.5px;font-size:19.5px;color:#ff3030;font-weight:bold;letter-spacing:0.5px;right:484.0px;">215</div>
<div class="t" style="top:1017.5px;font-size:19.5px;color:#20d8e8;font-weight:bold;letter-spacing:0.5px;right:391.0px;">18</div>
<div class="t" style="top:1052.8px;font-size:19.5px;color:#d8d8d8;font-weight:bold;letter-spacing:0.4px;left:2266.0px;">14:55</div>
<div class="t" style="top:1052.8px;font-size:19.5px;color:#ff3030;font-weight:bold;letter-spacing:0.5px;left:2413.0px;">6.14</div>
<div class="t" style="top:1052.8px;font-size:19.5px;color:#ff3030;font-weight:bold;letter-spacing:0.5px;right:484.0px;">198</div>
<div class="t" style="top:1052.8px;font-size:19.5px;color:#20d8e8;font-weight:bold;letter-spacing:0.5px;right:391.0px;">4</div>
<div class="t" style="top:1088.2px;font-size:19.5px;color:#d8d8d8;font-weight:bold;letter-spacing:0.4px;left:2266.0px;">14:55</div>
<div class="t" style="top:1088.2px;font-size:19.5px;color:#fff;font-weight:bold;letter-spacing:0.5px;left:2413.0px;">6.13</div>
<div class="t" style="top:1088.2px;font-size:19.5px;color:#00e000;font-weight:bold;letter-spacing:0.5px;right:484.0px;">24</div>
<div class="t" style="top:1088.2px;font-size:19.5px;color:#20d8e8;font-weight:bold;letter-spacing:0.5px;right:391.0px;">3</div>
<div class="t" style="top:1123.7px;font-size:19.5px;color:#d8d8d8;font-weight:bold;letter-spacing:0.4px;left:2266.0px;">14:55</div>
<div class="t" style="top:1123.7px;font-size:19.5px;color:#ff3030;font-weight:bold;letter-spacing:0.5px;left:2413.0px;">6.14</div>
<div class="t" style="top:1123.7px;font-size:19.5px;color:#ff3030;font-weight:bold;letter-spacing:0.5px;right:484.0px;">11</div>
<div class="t" style="top:1123.7px;font-size:19.5px;color:#20d8e8;font-weight:bold;letter-spacing:0.5px;right:391.0px;">8</div>
<div class="t" style="top:1159.0px;font-size:19.5px;color:#d8d8d8;font-weight:bold;letter-spacing:0.4px;left:2266.0px;">14:55</div>
<div class="t" style="top:1159.0px;font-size:19.5px;color:#fff;font-weight:bold;letter-spacing:0.5px;left:2413.0px;">6.13</div>
<div class="t" style="top:1159.0px;font-size:19.5px;color:#00e000;font-weight:bold;letter-spacing:0.5px;right:484.0px;">61</div>
<div class="t" style="top:1159.0px;font-size:19.5px;color:#20d8e8;font-weight:bold;letter-spacing:0.5px;right:391.0px;">6</div>
<div class="t" style="top:1194.5px;font-size:19.5px;color:#d8d8d8;font-weight:bold;letter-spacing:0.4px;left:2266.0px;">14:55</div>
<div class="t" style="top:1194.5px;font-size:19.5px;color:#fff;font-weight:bold;letter-spacing:0.5px;left:2413.0px;">6.13</div>
<div class="t" style="top:1194.5px;font-size:19.5px;color:#00e000;font-weight:bold;letter-spacing:0.5px;right:484.0px;">6</div>
<div class="t" style="top:1194.5px;font-size:19.5px;color:#20d8e8;font-weight:bold;letter-spacing:0.5px;right:391.0px;">6</div>
<div class="t" style="top:1229.8px;font-size:19.5px;color:#d8d8d8;font-weight:bold;letter-spacing:0.4px;left:2266.0px;">14:55</div>
<div class="t" style="top:1229.8px;font-size:19.5px;color:#fff;font-weight:bold;letter-spacing:0.5px;left:2413.0px;">6.13</div>
<div class="t" style="top:1229.8px;font-size:19.5px;color:#00e000;font-weight:bold;letter-spacing:0.5px;right:484.0px;">8</div>
<div class="t" style="top:1229.8px;font-size:19.5px;color:#20d8e8;font-weight:bold;letter-spacing:0.5px;right:391.0px;">2</div>
<div class="t" style="top:1265.2px;font-size:19.5px;color:#d8d8d8;font-weight:bold;letter-spacing:0.4px;left:2266.0px;">14:55</div>
<div class="t" style="top:1265.2px;font-size:19.5px;color:#ff3030;font-weight:bold;letter-spacing:0.5px;left:2413.0px;">6.14</div>
<div class="t" style="top:1265.2px;font-size:19.5px;color:#ff3030;font-weight:bold;letter-spacing:0.5px;right:484.0px;">290</div>
<div class="t" style="top:1265.2px;font-size:19.5px;color:#20d8e8;font-weight:bold;letter-spacing:0.5px;right:391.0px;">27</div>
<div class="t" style="top:1300.7px;font-size:19.5px;color:#d8d8d8;font-weight:bold;letter-spacing:0.4px;left:2266.0px;">14:55</div>
<div class="t" style="top:1300.7px;font-size:19.5px;color:#ff3030;font-weight:bold;letter-spacing:0.5px;left:2413.0px;">6.14</div>
<div class="t" style="top:1300.7px;font-size:19.5px;color:#ff3030;font-weight:bold;letter-spacing:0.5px;right:484.0px;">42</div>
<div class="t" style="top:1300.7px;font-size:19.5px;color:#20d8e8;font-weight:bold;letter-spacing:0.5px;right:391.0px;height:10px;overflow:hidden;">9</div>
<div class="t" style="top:1336.0px;font-size:19.5px;color:#d8d8d8;font-weight:bold;letter-spacing:0.4px;left:2266.0px;">14:55</div>
<div class="t" style="top:1336.0px;font-size:19.5px;color:#ff3030;font-weight:bold;letter-spacing:0.5px;left:2413.0px;">6.14</div>
<div class="t" style="top:1336.0px;font-size:19.5px;color:#00e000;font-weight:bold;letter-spacing:0.5px;right:484.0px;">59</div>
<div class="t" style="top:1371.5px;font-size:19.5px;color:#d8d8d8;font-weight:bold;letter-spacing:0.4px;left:2266.0px;">14:55</div>
<div class="t" style="top:1371.5px;font-size:19.5px;color:#fff;font-weight:bold;letter-spacing:0.5px;left:2413.0px;">6.13</div>
<div class="t" style="top:1371.5px;font-size:19.5px;color:#00e000;font-weight:bold;letter-spacing:0.5px;right:484.0px;">4</div>
<div class="t" style="top:1406.8px;font-size:19.5px;color:#d8d8d8;font-weight:bold;letter-spacing:0.4px;left:2266.0px;">14:55</div>
<div class="t" style="top:1406.8px;font-size:19.5px;color:#ff3030;font-weight:bold;letter-spacing:0.5px;left:2413.0px;">6.14</div>
<div class="t" style="top:1406.8px;font-size:19.5px;color:#ff3030;font-weight:bold;letter-spacing:0.5px;right:484.0px;">70</div>
<div class="t" style="top:1442.2px;font-size:19.5px;color:#d8d8d8;font-weight:bold;letter-spacing:0.4px;left:2266.0px;">14:55</div>
<div class="t" style="top:1442.2px;font-size:19.5px;color:#ff3030;font-weight:bold;letter-spacing:0.5px;left:2413.0px;">6.14</div>
<div class="t" style="top:1442.2px;font-size:19.5px;color:#ff3030;font-weight:bold;letter-spacing:0.5px;right:484.0px;">1</div>
<div class="t" style="top:1477.7px;font-size:19.5px;color:#d8d8d8;font-weight:bold;letter-spacing:0.4px;left:2266.0px;">14:56</div>
<div class="t" style="top:1477.7px;font-size:19.5px;color:#fff;font-weight:bold;letter-spacing:0.5px;left:2413.0px;">6.13</div>
<div class="t" style="top:1477.7px;font-size:19.5px;color:#00e000;font-weight:bold;letter-spacing:0.5px;right:484.0px;">5</div>
<div class="t" style="top:1513.0px;font-size:19.5px;color:#d8d8d8;font-weight:bold;letter-spacing:0.4px;left:2266.0px;">14:56</div>
<div class="t" style="top:1513.0px;font-size:19.5px;color:#ff3030;font-weight:bold;letter-spacing:0.5px;left:2413.0px;">6.14</div>
<div class="t" style="top:1513.0px;font-size:19.5px;color:#ff3030;font-weight:bold;letter-spacing:0.5px;right:484.0px;">100</div>
<div class="t" style="top:1548.4px;font-size:19.5px;color:#d8d8d8;font-weight:bold;letter-spacing:0.4px;left:2266.0px;">14:56</div>
<div class="t" style="top:1548.4px;font-size:19.5px;color:#ff3030;font-weight:bold;letter-spacing:0.5px;left:2413.0px;">6.14</div>
<div class="t" style="top:1548.4px;font-size:19.5px;color:#ff3030;font-weight:bold;letter-spacing:0.5px;right:484.0px;">100</div>
<div class="t" style="top:1583.8px;font-size:19.5px;color:#d8d8d8;font-weight:bold;letter-spacing:0.4px;left:2266.0px;">14:56</div>
<div class="t" style="top:1583.8px;font-size:19.5px;color:#ff3030;font-weight:bold;letter-spacing:0.5px;left:2413.0px;">6.14</div>
<div class="t" style="top:1583.8px;font-size:19.5px;color:#ff3030;font-weight:bold;letter-spacing:0.5px;right:484.0px;">124</div>
<div class="t" style="top:1619.2px;font-size:19.5px;color:#d8d8d8;font-weight:bold;letter-spacing:0.4px;left:2266.0px;">14:56</div>
<div class="t" style="top:1619.2px;font-size:19.5px;color:#ff3030;font-weight:bold;letter-spacing:0.5px;left:2413.0px;">6.14</div>
<div class="t" style="top:1619.2px;font-size:19.5px;color:#ff3030;font-weight:bold;letter-spacing:0.5px;right:484.0px;">5</div>
<div class="t" style="top:1654.7px;font-size:19.5px;color:#d8d8d8;font-weight:bold;letter-spacing:0.4px;left:2266.0px;">14:56</div>
<div class="t" style="top:1654.7px;font-size:19.5px;color:#fff;font-weight:bold;letter-spacing:0.5px;left:2413.0px;">6.13</div>
<div class="t" style="top:1654.7px;font-size:19.5px;color:#00e000;font-weight:bold;letter-spacing:0.5px;right:484.0px;">62</div>
<div class="t" style="top:1690.0px;font-size:19.5px;color:#d8d8d8;font-weight:bold;letter-spacing:0.4px;left:2266.0px;">14:56</div>
<div class="t" style="top:1690.0px;font-size:19.5px;color:#fff;font-weight:bold;letter-spacing:0.5px;left:2413.0px;">6.13</div>
<div class="t" style="top:1690.0px;font-size:19.5px;color:#00e000;font-weight:bold;letter-spacing:0.5px;right:484.0px;">40</div>
<div class="t" style="top:1725.4px;font-size:19.5px;color:#d8d8d8;font-weight:bold;letter-spacing:0.4px;left:2266.0px;">14:56</div>
<div class="t" style="top:1725.4px;font-size:19.5px;color:#ff3030;font-weight:bold;letter-spacing:0.5px;left:2413.0px;">6.14</div>
<div class="t" style="top:1725.4px;font-size:19.5px;color:#ff3030;font-weight:bold;letter-spacing:0.5px;right:484.0px;">139</div>
<div class="t" style="top:1760.8px;font-size:19.5px;color:#d8d8d8;font-weight:bold;letter-spacing:0.4px;left:2266.0px;">14:56</div>
<div class="t" style="top:1760.8px;font-size:19.5px;color:#fff;font-weight:bold;letter-spacing:0.5px;left:2413.0px;">6.13</div>
<div class="t" style="top:1760.8px;font-size:19.5px;color:#00e000;font-weight:bold;letter-spacing:0.5px;right:484.0px;">15</div>
<div class="t" style="top:1796.2px;font-size:19.5px;color:#d8d8d8;font-weight:bold;letter-spacing:0.4px;left:2266.0px;">14:56</div>
<div class="t" style="top:1796.2px;font-size:19.5px;color:#ff3030;font-weight:bold;letter-spacing:0.5px;left:2413.0px;">6.14</div>
<div class="t" style="top:1796.2px;font-size:19.5px;color:#ff3030;font-weight:bold;letter-spacing:0.5px;right:484.0px;">10</div>
<div class="t" style="top:92.5px;font-size:23px;color:#c8c8c8;left:2646.0px;">教育</div>
<div class="t" style="top:94.5px;font-size:20px;color:#ff3030;font-weight:bold;left:2778.0px;">1.14%</div>
<div class="t" style="top:94.8px;font-size:18.5px;color:#c8c8c8;right:2.0px;">同行对比</div>
<div class="t" style="top:125.8px;font-size:18.5px;color:#c8c8c8;left:2649.0px;">资金分析（万元）</div>
<div class="t fm" style="top:128.5px;font-size:15px;color:#c8c8c8;left:2967.0px;">?</div>
<div class="t" style="top:125.8px;font-size:18.5px;color:#c8c8c8;right:4.0px;">排名</div>
<div class="t" style="top:162.2px;font-size:18.5px;color:#c8c8c8;left:2649.0px;">主力流入:</div>
<div class="t fm" style="top:186.2px;font-size:16.5px;color:#ff3030;letter-spacing:-1px;left:2649.0px;">1564.9</div>
<div class="t" style="top:207.2px;font-size:18.5px;color:#c8c8c8;left:2649.0px;">主力流出:</div>
<div class="t fm" style="top:230.8px;font-size:16.5px;color:#00e000;letter-spacing:-1px;left:2649.0px;">1992.6</div>
<div class="t" style="top:252.2px;font-size:18.5px;color:#c8c8c8;left:2649.0px;">主力净流出</div>
<div class="t fm" style="top:275.8px;font-size:16.5px;color:#00e000;letter-spacing:-1px;left:2649.0px;">427.8</div>
<div class="t" style="top:297.2px;font-size:18.5px;color:#c8c8c8;left:2649.0px;">主力持仓成本</div>
<div class="t" style="top:317.2px;font-size:18.5px;color:#20d8e8;left:2649.0px;">点击查看</div>
<div class="t fm" style="top:178.9px;font-size:15px;color:#fff;letter-spacing:-1.2px;left:2949.2px;transform:translateX(-50%);">6%</div>
<div class="t fm" style="top:209.6px;font-size:15px;color:#fff;letter-spacing:-1.2px;left:2989.3px;transform:translateX(-50%);">21%</div>
<div class="t fm" style="top:287.4px;font-size:15px;color:#fff;letter-spacing:-1.2px;left:2977.6px;transform:translateX(-50%);">23%</div>
<div class="t fm" style="top:284.2px;font-size:15px;color:#fff;letter-spacing:-1.2px;left:2891.9px;transform:translateX(-50%);">25%</div>
<div class="t fm" style="top:209.6px;font-size:15px;color:#fff;letter-spacing:-1.2px;left:2883.4px;transform:translateX(-50%);">16%</div>
<div class="t fm" style="top:180.5px;font-size:15px;color:#fff;letter-spacing:-1.2px;left:2918.2px;transform:translateX(-50%);">7%</div>
<div class="t" style="top:227.2px;font-size:18.5px;color:#fff;left:2938.0px;transform:translateX(-50%);">资金</div>
<div class="t" style="top:251.2px;font-size:18.5px;color:#fff;left:2938.0px;transform:translateX(-50%);">占比</div>
<div class="t" style="top:366.0px;font-size:24px;color:#c8c8c8;left:2645.0px;">净特大单</div>
<div class="t" style="top:368.0px;font-size:20px;color:#00e000;font-weight:bold;letter-spacing:0.6px;right:144.0px;">-202</div>
<div class="t" style="top:402.5px;font-size:24px;color:#c8c8c8;left:2645.0px;">净大单</div>
<div class="t" style="top:404.5px;font-size:20px;color:#00e000;font-weight:bold;letter-spacing:0.6px;right:144.0px;">-226</div>
<div class="t" style="top:438.5px;font-size:24px;color:#c8c8c8;left:2645.0px;">净中单</div>
<div class="t" style="top:440.5px;font-size:20px;color:#ff3030;font-weight:bold;letter-spacing:0.6px;left:2908.5px;">1054</div>
<div class="t" style="top:474.5px;font-size:24px;color:#c8c8c8;left:2645.0px;">净小单</div>
<div class="t" style="top:476.5px;font-size:20px;color:#00e000;font-weight:bold;letter-spacing:0.6px;right:144.0px;">-626</div>
<div class="t" style="top:526.8px;font-size:18.5px;color:#c8c8c8;left:2650.0px;">资金排名</div>
<div class="t" style="top:553.5px;font-size:23px;color:#c8c8c8;left:2646.0px;">名称</div>
<div class="t" style="top:553.5px;font-size:23px;color:#c8c8c8;left:2815.0px;">涨幅</div>
<div class="t" style="top:553.5px;font-size:23px;color:#c8c8c8;left:2882.0px;">大单净比</div>
<div class="t" style="top:587.0px;font-size:24px;color:#f0f078;left:2646.0px;">贸易</div>
<div class="t" style="top:589.2px;font-size:19.5px;color:#ff3030;font-weight:bold;letter-spacing:0.7px;right:159.0px;">+0.79%</div>
<div class="t" style="top:589.2px;font-size:19.5px;color:#ff3030;font-weight:bold;letter-spacing:0.7px;right:38.0px;">+10.6%</div>
<div class="t" style="top:625.6px;font-size:24px;color:#f0f078;left:2646.0px;">贵州</div>
<div class="t" style="top:627.9px;font-size:19.5px;color:#ff3030;font-weight:bold;letter-spacing:0.7px;right:159.0px;">+0.38%</div>
<div class="t" style="top:627.9px;font-size:19.5px;color:#ff3030;font-weight:bold;letter-spacing:0.7px;right:38.0px;">+9.3%</div>
<div class="t" style="top:664.2px;font-size:24px;color:#f0f078;left:2646.0px;">白酒</div>
<div class="t" style="top:666.5px;font-size:19.5px;color:#ff3030;font-weight:bold;letter-spacing:0.7px;right:159.0px;">+0.84%</div>
<div class="t" style="top:666.5px;font-size:19.5px;color:#ff3030;font-weight:bold;letter-spacing:0.7px;right:38.0px;">+9.2%</div>
<div class="t" style="top:702.9px;font-size:24px;color:#f0f078;left:2646.0px;">白酒概念</div>
<div class="t" style="top:705.1px;font-size:19.5px;color:#ff3030;font-weight:bold;letter-spacing:0.7px;right:159.0px;">+0.37%</div>
<div class="t" style="top:705.1px;font-size:19.5px;color:#ff3030;font-weight:bold;letter-spacing:0.7px;right:38.0px;">+8.1%</div>
<div class="t" style="top:741.5px;font-size:24px;color:#f0f078;left:2646.0px;">超导概念</div>
<div class="t" style="top:743.7px;font-size:19.5px;color:#ff3030;font-weight:bold;letter-spacing:0.7px;right:159.0px;">+1.01%</div>
<div class="t" style="top:743.7px;font-size:19.5px;color:#ff3030;font-weight:bold;letter-spacing:0.7px;right:38.0px;">+7.9%</div>
<div class="t" style="top:780.1px;font-size:24px;color:#f0f078;left:2646.0px;">其他电子</div>
<div class="t" style="top:782.4px;font-size:19.5px;color:#ff3030;font-weight:bold;letter-spacing:0.7px;right:159.0px;">+2.47%</div>
<div class="t" style="top:782.4px;font-size:19.5px;color:#ff3030;font-weight:bold;letter-spacing:0.7px;right:38.0px;">+7.0%</div>
<div class="t" style="top:818.7px;font-size:24px;color:#f0f078;left:2646.0px;">铜缆高速连接</div>
<div class="t" style="top:821.0px;font-size:19.5px;color:#ff3030;font-weight:bold;letter-spacing:0.7px;right:159.0px;">+5.18%</div>
<div class="t" style="top:821.0px;font-size:19.5px;color:#ff3030;font-weight:bold;letter-spacing:0.7px;right:38.0px;">+6.3%</div>
<div class="t" style="top:857.3px;font-size:24px;color:#f0f078;left:2646.0px;">同花顺果指数</div>
<div class="t" style="top:859.6px;font-size:19.5px;color:#ff3030;font-weight:bold;letter-spacing:0.7px;right:159.0px;">+2.56%</div>
<div class="t" style="top:859.6px;font-size:19.5px;color:#ff3030;font-weight:bold;letter-spacing:0.7px;right:38.0px;">+5.9%</div>
<div class="t" style="top:896.0px;font-size:24px;color:#f0f078;left:2646.0px;"><b style="font-size:19.5px">C</b><b style="font-size:19.5px">R</b><b style="font-size:19.5px">O</b>概念</div>
<div class="t" style="top:898.2px;font-size:19.5px;color:#ff3030;font-weight:bold;letter-spacing:0.7px;right:159.0px;">+1.59%</div>
<div class="t" style="top:898.2px;font-size:19.5px;color:#ff3030;font-weight:bold;letter-spacing:0.7px;right:38.0px;">+4.2%</div>
<div class="t" style="top:934.6px;font-size:24px;color:#f0f078;left:2646.0px;">超级电容</div>
<div class="t" style="top:936.8px;font-size:19.5px;color:#ff3030;font-weight:bold;letter-spacing:0.7px;right:159.0px;">+1.10%</div>
<div class="t" style="top:936.8px;font-size:19.5px;color:#ff3030;font-weight:bold;letter-spacing:0.7px;right:38.0px;">+4.0%</div>
<div class="t" style="top:973.2px;font-size:24px;color:#f0f078;left:2646.0px;">高压快充</div>
<div class="t" style="top:975.5px;font-size:19.5px;color:#ff3030;font-weight:bold;letter-spacing:0.7px;right:159.0px;">+2.02%</div>
<div class="t" style="top:975.5px;font-size:19.5px;color:#ff3030;font-weight:bold;letter-spacing:0.7px;right:38.0px;">+4.0%</div>
<div class="t" style="top:1011.8px;font-size:24px;color:#f0f078;left:2646.0px;">汽车整车</div>
<div class="t" style="top:1014.1px;font-size:19.5px;color:#ff3030;font-weight:bold;letter-spacing:0.7px;right:159.0px;">+1.20%</div>
<div class="t" style="top:1014.1px;font-size:19.5px;color:#ff3030;font-weight:bold;letter-spacing:0.7px;right:38.0px;">+3.9%</div>
<div class="t" style="top:1050.4px;font-size:24px;color:#f0f078;left:2646.0px;"><b style="font-size:19.5px">P</b><b style="font-size:19.5px">E</b><b style="font-size:19.5px">E</b><b style="font-size:19.5px">K</b>材料</div>
<div class="t" style="top:1052.7px;font-size:19.5px;color:#ff3030;font-weight:bold;letter-spacing:0.7px;right:159.0px;">+1.55%</div>
<div class="t" style="top:1052.7px;font-size:19.5px;color:#ff3030;font-weight:bold;letter-spacing:0.7px;right:38.0px;">+3.9%</div>
<div class="t" style="top:1089.1px;font-size:24px;color:#f0f078;left:2646.0px;">民爆概念</div>
<div class="t" style="top:1091.3px;font-size:19.5px;color:#ff3030;font-weight:bold;letter-spacing:0.7px;right:159.0px;">+0.40%</div>
<div class="t" style="top:1091.3px;font-size:19.5px;color:#ff3030;font-weight:bold;letter-spacing:0.7px;right:38.0px;">+3.6%</div>
<div class="t" style="top:1127.7px;font-size:24px;color:#f0f078;left:2646.0px;">电池</div>
<div class="t" style="top:1129.9px;font-size:19.5px;color:#ff3030;font-weight:bold;letter-spacing:0.7px;right:159.0px;">+2.12%</div>
<div class="t" style="top:1129.9px;font-size:19.5px;color:#ff3030;font-weight:bold;letter-spacing:0.7px;right:38.0px;">+3.6%</div>
<div class="t" style="top:1166.3px;font-size:24px;color:#f0f078;left:2646.0px;">特钢概念</div>
<div class="t" style="top:1168.5px;font-size:19.5px;color:#ff3030;font-weight:bold;letter-spacing:0.7px;right:159.0px;">+0.85%</div>
<div class="t" style="top:1168.5px;font-size:19.5px;color:#ff3030;font-weight:bold;letter-spacing:0.7px;right:38.0px;">+3.2%</div>
<div class="t" style="top:1204.9px;font-size:24px;color:#f0f078;left:2646.0px;">芬太尼</div>
<div class="t" style="top:1207.2px;font-size:19.5px;color:#ff3030;font-weight:bold;letter-spacing:0.7px;right:159.0px;">+1.47%</div>
<div class="t" style="top:1207.2px;font-size:19.5px;color:#ff3030;font-weight:bold;letter-spacing:0.7px;right:38.0px;">+3.1%</div>
<div class="t" style="top:1243.5px;font-size:24px;color:#f0f078;left:2646.0px;">医疗服务</div>
<div class="t" style="top:1245.8px;font-size:19.5px;color:#ff3030;font-weight:bold;letter-spacing:0.7px;right:159.0px;">+1.40%</div>
<div class="t" style="top:1245.8px;font-size:19.5px;color:#ff3030;font-weight:bold;letter-spacing:0.7px;right:38.0px;">+3.0%</div>
<div class="t" style="top:1279.8px;font-size:18.5px;color:#c8c8c8;left:2649.0px;">短线精灵</div>
<div class="t" style="top:1279.2px;font-size:18.5px;color:#c8c8c8;left:2936.0px;">全部A股</div>
<div class="t" style="top:1321.0px;font-size:18px;color:#8a8a8a;left:2611.0px;">形态预测 共856只代码</div>
<div class="t" style="top:1374.2px;font-size:17.7px;color:#111;left:2615.0px;">匹配度大于:</div>
<div class="t fm" style="top:1376.0px;font-size:16.5px;color:#111;letter-spacing:-1px;right:263.0px;">80.0</div>
<div class="t fm" style="top:1375.8px;font-size:16.5px;color:#111;letter-spacing:-1.2px;left:2783.0px;">%(0-100%)</div>
<div class="t" style="top:1372.5px;font-size:18px;color:#fff;font-weight:bold;left:2980.0px;transform:translateX(-50%);">?</div>
<div class="t" style="top:1413.7px;font-size:17.7px;color:#111;left:2615.0px;">匹配周期数:</div>
<div class="t fm" style="top:1416.5px;font-size:16.5px;color:#111;letter-spacing:-1px;right:263.0px;">231</div>
<div class="t" style="top:1413.7px;font-size:17.7px;color:#111;left:2784.0px;">预测周期数:</div>
<div class="t fm" style="top:1416.5px;font-size:16.5px;color:#111;letter-spacing:-1px;right:94.0px;">35</div>
<div class="t fm" style="top:1413.2px;font-size:16.5px;color:#111;letter-spacing:-1.2px;left:2948.0px;">(5-150)</div>
<div class="t" style="top:1456.2px;font-size:17.7px;color:#111;left:2639.5px;">增加成交量匹配</div>
<div class="t" style="top:1456.2px;font-size:17.7px;color:#111;left:2804.5px;">增加均线匹配</div>
<div class="t" style="top:1492.2px;font-size:17.7px;color:#111;left:2614.0px;">时间设置(仅支持06年以后的数据):</div>
<div class="t" style="top:1519.2px;font-size:17.7px;color:#111;left:2623.0px;background:#f0f0f0;padding:0 2px;">开始时间</div>
<div class="t" style="top:1551.2px;font-size:17.5px;color:#111;left:2629.5px;">2022年 1月12日</div>
<div class="t" style="top:1519.2px;font-size:17.7px;color:#111;left:2834.5px;background:#f0f0f0;padding:0 2px;">结束时间</div>
<div class="t" style="top:1551.2px;font-size:17.5px;color:#111;left:2841.0px;">2025年 1月12日</div>
<div class="t" style="top:1598.2px;font-size:17.7px;color:#111;left:2614.0px;">范围设置:</div>
<div class="t" style="top:1598.2px;font-size:17.7px;color:#111;left:2726.0px;">指数:</div>
<div class="t" style="top:1599.2px;font-size:17.7px;color:#111;left:2814.5px;">上证指数</div>
<div class="t" style="top:1599.2px;font-size:17.7px;color:#111;left:2945.0px;">深证指数</div>
<div class="t" style="top:1634.7px;font-size:17.7px;color:#111;left:2726.0px;">A股:</div>
<div class="t" style="top:1635.7px;font-size:17.7px;color:#111;left:2814.5px;">上证A股</div>
<div class="t" style="top:1635.7px;font-size:17.7px;color:#111;left:2945.0px;">深证A股</div>
<div class="t" style="top:1670.7px;font-size:17.7px;color:#111;left:2726.0px;">B股:</div>
<div class="t" style="top:1671.7px;font-size:17.7px;color:#111;left:2814.5px;">上证B股</div>
<div class="t" style="top:1671.7px;font-size:17.7px;color:#111;left:2945.0px;">深证B股</div>
<div class="t" style="top:1708.0px;font-size:18px;color:#111;left:2706.0px;transform:translateX(-50%);">匹配品种</div>
<div class="t" style="top:1708.0px;font-size:18px;color:#111;left:2795.5px;transform:translateX(-50%);">预测起点</div>
<div class="t" style="top:1708.0px;font-size:18px;color:#111;left:2884.0px;transform:translateX(-50%);">匹配度↓</div>
<div class="t" style="top:1708.0px;font-size:18px;color:#111;left:2967.0px;transform:translateX(-50%);">匹配段</div>
<div class="t fm" style="top:1740.8px;font-size:16.5px;color:#fff;right:381.0px;">1</div>
<div class="t" style="top:1740.0px;font-size:18px;color:#fff;left:2671.0px;">大华股份</div>
<div class="t fm" style="top:1740.8px;font-size:16.5px;color:#fff;letter-spacing:-1px;left:2795.0px;transform:translateX(-50%);">20230621</div>
<div class="t fm" style="top:1740.8px;font-size:16.5px;color:#fff;letter-spacing:-1px;left:2885.0px;transform:translateX(-50%);">93.1</div>
<div class="t fm" style="top:1740.8px;font-size:16.5px;color:#3399ff;left:2964.0px;transform:translateX(-50%);">3</div>
<div class="t fm" style="top:1769.0px;font-size:16.5px;color:#111;right:381.0px;">2</div>
<div class="t" style="top:1768.2px;font-size:18px;color:#111;left:2671.0px;">汇顶科技</div>
<div class="t fm" style="top:1769.0px;font-size:16.5px;color:#111;letter-spacing:-1px;left:2795.0px;transform:translateX(-50%);">20231225</div>
<div class="t fm" style="top:1769.0px;font-size:16.5px;color:#111;letter-spacing:-1px;left:2885.0px;transform:translateX(-50%);">92.4</div>
<div class="t fm" style="top:1769.0px;font-size:16.5px;color:#111;left:2964.0px;transform:translateX(-50%);">7</div>
<div class="t fm" style="top:1797.2px;font-size:16.5px;color:#111;right:381.0px;">3</div>
<div class="t" style="top:1796.4px;font-size:18px;color:#111;left:2671.0px;">汤姆猫</div>
<div class="t fm" style="top:1797.2px;font-size:16.5px;color:#111;letter-spacing:-1px;left:2795.0px;transform:translateX(-50%);">20230614</div>
<div class="t fm" style="top:1797.2px;font-size:16.5px;color:#111;letter-spacing:-1px;left:2885.0px;transform:translateX(-50%);">92.2</div>
<div class="t fm" style="top:1797.2px;font-size:16.5px;color:#111;left:2964.0px;transform:translateX(-50%);">7</div>
<div class="t fm" style="top:1825.3px;font-size:16.5px;color:#111;right:381.0px;">4</div>
<div class="t" style="top:1824.6px;font-size:18px;color:#111;left:2671.0px;">金发拉比</div>
<div class="t fm" style="top:1825.3px;font-size:16.5px;color:#111;letter-spacing:-1px;left:2795.0px;transform:translateX(-50%);">20230425</div>
<div class="t fm" style="top:1825.3px;font-size:16.5px;color:#111;letter-spacing:-1px;left:2885.0px;transform:translateX(-50%);">92.0</div>
<div class="t fm" style="top:1825.3px;font-size:16.5px;color:#111;left:2964.0px;transform:translateX(-50%);">6</div>
</body></html>
